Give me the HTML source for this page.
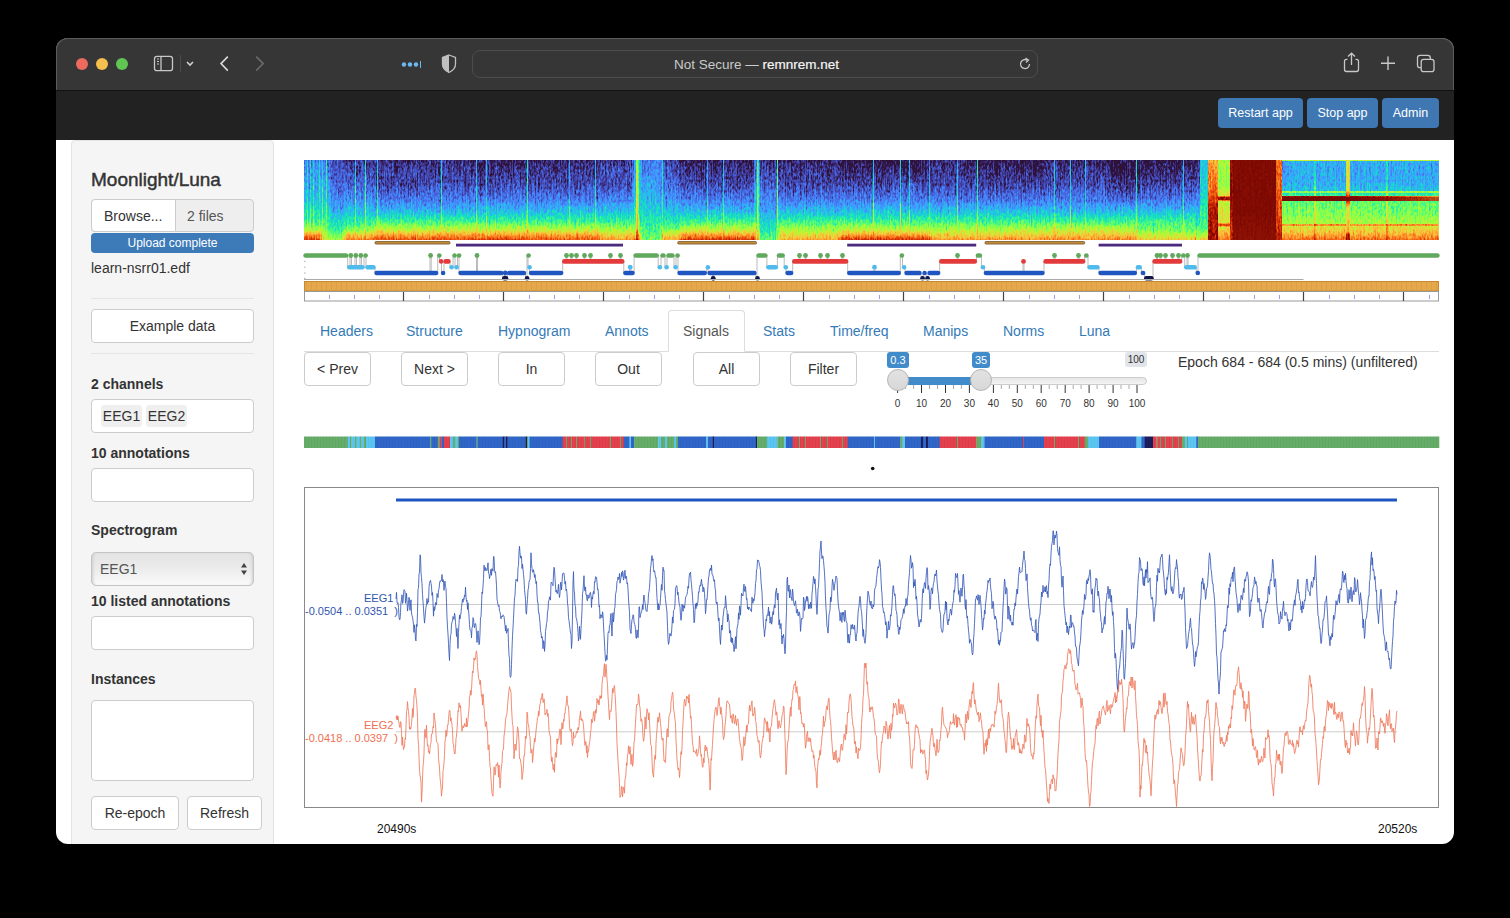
<!DOCTYPE html><html><head><meta charset="utf-8"><style>
*{box-sizing:border-box;margin:0;padding:0}
html,body{width:1510px;height:918px;overflow:hidden;background:#000;font-family:"Liberation Sans",sans-serif;color:#333}
div,span{position:absolute}
#win{left:0;top:0;width:1510px;height:918px;background:#fff;clip-path:inset(38px 56px 74px 56px round 12px)}
.tl{width:12px;height:12px;border-radius:50%;top:58px}
.btnb{top:98px;height:30px;background:#3e77b2;color:#fff;font-size:12.5px;border-radius:4px;text-align:center;line-height:30px;white-space:nowrap}
.lbl{left:91px;font-size:14px;font-weight:bold;color:#333;white-space:nowrap}
.inp{left:91px;width:163px;background:#fff;border:1px solid #ccc;border-radius:4px}
.btn{background:#fff;border:1px solid #ccc;border-radius:4px;color:#333;font-size:14px;text-align:center;white-space:nowrap}
.tab{top:323px;font-size:14px;color:#337ab7;white-space:nowrap}
.t{white-space:nowrap}
#spec i,#spec b{position:absolute;top:0;width:2px;height:80px;display:block}#spec b{width:1px}
</style></head><body><div id="win">
<div style="left:56px;top:38px;width:1398px;height:52px;background:#363636"></div>
<div style="left:56px;top:38px;width:1398px;height:52px;border-radius:12px 12px 0 0;border:1px solid #5c5c5c;border-bottom:none"></div>
<div style="left:56px;top:90px;width:1px;height:50px;background:#404040"></div><div style="left:1453px;top:90px;width:1px;height:50px;background:#404040"></div>
<div class="tl" style="left:76px;background:#ec6a5e"></div>
<div class="tl" style="left:96px;background:#f4bf4f"></div>
<div class="tl" style="left:116px;background:#61c554"></div>
<svg style="position:absolute;left:150px;top:52px" width="48" height="24" viewBox="0 0 48 24"><rect x="4.5" y="4.3" width="18" height="14.4" rx="2.5" fill="none" stroke="#c8c8c8" stroke-width="1.3"/><line x1="11" y1="4" x2="11" y2="18" stroke="#c8c8c8" stroke-width="1.3"/><line x1="7" y1="7" x2="9" y2="7" stroke="#c8c8c8" stroke-width="1"/><line x1="7" y1="9.5" x2="9" y2="9.5" stroke="#c8c8c8" stroke-width="1"/><line x1="7" y1="12" x2="9" y2="12" stroke="#c8c8c8" stroke-width="1"/><line x1="30.5" y1="3" x2="30.5" y2="20" stroke="#4a4a4a" stroke-width="1"/><path d="M37 10 L40 13 L43 10" fill="none" stroke="#d0d0d0" stroke-width="1.6"/></svg>
<svg style="position:absolute;left:214px;top:52px" width="56" height="24" viewBox="0 0 56 24"><path d="M13.8 4.6 L7 11.6 L13.8 18.6" fill="none" stroke="#d8d8d8" stroke-width="1.6"/><path d="M42.2 4.6 L49.2 11.6 L42.2 18.6" fill="none" stroke="#6a6a6a" stroke-width="1.6"/></svg>
<svg style="position:absolute;left:398px;top:52px" width="64" height="24" viewBox="0 0 64 24"><circle cx="6" cy="12.5" r="2.2" fill="#6cb8f0"/><circle cx="12" cy="12.5" r="2.2" fill="#6cb8f0"/><circle cx="18" cy="12.5" r="2.2" fill="#6cb8f0"/><line x1="22.5" y1="9" x2="22.5" y2="16" stroke="#6cb8f0" stroke-width="1"/><path d="M51 3 L57.5 5.5 L57.5 12 Q57.5 17.5 51 20.5 Q44.5 17.5 44.5 12 L44.5 5.5 Z" fill="none" stroke="#c0c0c0" stroke-width="1.3"/><path d="M51 3 L44.5 5.5 L44.5 12 Q44.5 17.5 51 20.5 Z" fill="#c0c0c0"/></svg>
<div style="left:472px;top:50px;width:566px;height:28px;border:1px solid #4d4d4d;border-radius:8px"></div>
<div class="t" style="left:674px;top:57px;font-size:13.5px;color:#cacaca">Not Secure — <span style="position:static;color:#f4f4f4;-webkit-text-stroke:0.2px #f4f4f4">remnrem.net</span></div>
<svg style="position:absolute;left:1016px;top:55px" width="18" height="18" viewBox="0 0 18 18"><path d="M13.5 9 A4.5 4.5 0 1 1 11.2 5.1" fill="none" stroke="#c8c8c8" stroke-width="1.3"/><path d="M9.5 3 L12.5 5 L10 7.5" fill="none" stroke="#c8c8c8" stroke-width="1.3"/></svg>
<svg style="position:absolute;left:1338px;top:50px" width="104" height="26" viewBox="0 0 104 26"><path d="M9.5 9.3 L8.5 9.3 Q6.5 9.3 6.5 11.3 L6.5 19.5 Q6.5 21.5 8.5 21.5 L18.5 21.5 Q20.5 21.5 20.5 19.5 L20.5 11.3 Q20.5 9.3 18.5 9.3 L17.5 9.3" fill="none" stroke="#c8c8c8" stroke-width="1.3"/><line x1="13.5" y1="3.5" x2="13.5" y2="15" stroke="#c8c8c8" stroke-width="1.3"/><path d="M10 6.5 L13.5 3.2 L17 6.5" fill="none" stroke="#c8c8c8" stroke-width="1.3"/><line x1="50" y1="6.5" x2="50" y2="20" stroke="#c8c8c8" stroke-width="1.4"/><line x1="43" y1="13.3" x2="57" y2="13.3" stroke="#c8c8c8" stroke-width="1.4"/><rect x="79.5" y="5.3" width="12.8" height="12.4" rx="2.5" fill="none" stroke="#c8c8c8" stroke-width="1.3"/><rect x="83.2" y="9.3" width="12.8" height="12.4" rx="2.5" fill="#363636" stroke="#c8c8c8" stroke-width="1.3"/></svg>
<div style="left:56px;top:90px;width:1398px;height:50px;background:#222;border-top:1px solid #121212"></div>
<div class="btnb" style="left:1218px;width:85px">Restart app</div>
<div class="btnb" style="left:1307px;width:71px">Stop app</div>
<div class="btnb" style="left:1382px;width:57px">Admin</div>
<div style="left:71px;top:140px;width:203px;height:720px;background:#f5f5f5;border:1px solid #e3e3e3;border-radius:4px"></div>
<div class="t" style="left:91px;top:169px;font-size:19px;color:#333;-webkit-text-stroke:0.45px #333">Moonlight/Luna</div>
<div style="left:91px;top:199px;width:163px;height:33px;border:1px solid #ccc;border-radius:4px;background:#eee"></div>
<div style="left:91px;top:199px;width:85px;height:33px;border:1px solid #ccc;border-radius:4px 0 0 4px;background:#fff"></div>
<div class="t" style="left:104px;top:208px;font-size:14px;color:#333">Browse...</div>
<div class="t" style="left:187px;top:208px;font-size:14px;color:#555">2 files</div>
<div style="left:91px;top:233px;width:163px;height:20px;background:#3d7ab8;border-radius:4px;color:#fff;font-size:12px;text-align:center;line-height:20px">Upload complete</div>
<div class="t" style="left:91px;top:260px;font-size:14px;color:#333">learn-nsrr01.edf</div>
<div style="left:91px;top:298px;width:163px;height:1px;background:#e5e5e5"></div>
<div class="btn" style="left:91px;top:309px;width:163px;height:34px;line-height:32px">Example data</div>
<div style="left:91px;top:353px;width:163px;height:1px;background:#e5e5e5"></div>
<div class="lbl" style="top:376px">2 channels</div>
<div class="inp" style="top:399px;height:34px"></div>
<div style="left:101px;top:405px;width:41px;height:22px;background:#efefef;border-radius:3px;font-size:14px;color:#333;text-align:center;line-height:22px">EEG1</div>
<div style="left:146px;top:405px;width:41px;height:22px;background:#efefef;border-radius:3px;font-size:14px;color:#333;text-align:center;line-height:22px">EEG2</div>
<div class="lbl" style="top:445px">10 annotations</div>
<div class="inp" style="top:468px;height:34px"></div>
<div class="lbl" style="top:522px">Spectrogram</div>
<div style="left:91px;top:552px;width:163px;height:34px;border:1px solid #c4c4c4;border-radius:5px;background:linear-gradient(#e4e4e4,#ececec 50%,#fafafa);box-shadow:inset 3px 0 3px -2px #ccc,inset -3px 0 3px -2px #ccc"></div>
<div class="t" style="left:100px;top:561px;font-size:14px;color:#555">EEG1</div>
<svg style="position:absolute;left:239px;top:561px" width="10" height="16" viewBox="0 0 10 16"><path d="M5 2 L8 6.5 L2 6.5 Z M5 14 L8 9.5 L2 9.5 Z" fill="#444"/></svg>
<div class="lbl" style="top:593px">10 listed annotations</div>
<div class="inp" style="top:616px;height:34px"></div>
<div class="lbl" style="top:671px">Instances</div>
<div class="inp" style="top:700px;height:81px"></div>
<div class="btn" style="left:91px;top:796px;width:88px;height:34px;line-height:32px">Re-epoch</div>
<div class="btn" style="left:187px;top:796px;width:75px;height:34px;line-height:32px">Refresh</div>
<svg width="0" height="0" style="position:absolute"><defs><filter id="turbo" x="0" y="0" width="100%" height="100%" color-interpolation-filters="sRGB"><feTurbulence type="fractalNoise" baseFrequency="0.55 0.3" numOctaves="2" seed="4" result="n1"/><feTurbulence type="fractalNoise" baseFrequency="0.8 0.05" numOctaves="1" seed="9" result="n2"/><feComposite in="n1" in2="n2" operator="arithmetic" k1="0" k2="0.7" k3="0.5" k4="-0.1" result="n"/><feColorMatrix in="n" type="matrix" values="1 0 0 0 0 1 0 0 0 0 1 0 0 0 0 0 0 0 0 1" result="ng"/><feComposite in="SourceGraphic" in2="ng" operator="arithmetic" k1="0" k2="1" k3="0.35" k4="-0.175" result="lv"/><feComponentTransfer in="lv"><feFuncR type="table" tableValues="0.188 0.224 0.251 0.267 0.275 0.275 0.259 0.216 0.157 0.110 0.094 0.122 0.196 0.306 0.427 0.545 0.643 0.725 0.804 0.875 0.933 0.973 0.992 0.996 0.984 0.957 0.922 0.875 0.816 0.745 0.663 0.573 0.478"/><feFuncG type="table" tableValues="0.071 0.165 0.251 0.337 0.420 0.502 0.580 0.659 0.737 0.804 0.867 0.914 0.949 0.976 0.996 1.000 0.988 0.965 0.925 0.875 0.812 0.745 0.675 0.588 0.494 0.400 0.314 0.247 0.184 0.129 0.086 0.043 0.016"/><feFuncB type="table" tableValues="0.231 0.451 0.635 0.780 0.890 0.965 1.000 0.980 0.922 0.847 0.761 0.686 0.596 0.490 0.384 0.294 0.235 0.208 0.204 0.216 0.227 0.224 0.204 0.169 0.129 0.090 0.055 0.031 0.020 0.008 0.004 0.004 0.012"/></feComponentTransfer></filter></defs></svg>
<div id="spec" style="left:304px;top:160px;width:1135px;height:80px;overflow:hidden;filter:url(#turbo)"><i style="left:0px;background:linear-gradient(#333333 0px,#393939 10px,#3e3e3e 24px,#474747 40px,#575757 52px,#686868 62px,#8c8c8c 70px,#c5c5c5 75px,#e3e3e3 80px)"></i><i style="left:2px;background:linear-gradient(#313131 0px,#393939 10px,#404040 24px,#4a4a4a 40px,#565656 52px,#6b6b6b 62px,#8e8e8e 70px,#bdbdbd 75px,#e4e4e4 80px)"></i><i style="left:4px;background:linear-gradient(#2d2d2d 0px,#343434 10px,#3a3a3a 24px,#494949 40px,#555555 52px,#6b6b6b 62px,#8c8c8c 70px,#c1c1c1 75px,#dddddd 80px)"></i><i style="left:6px;background:linear-gradient(#313131 0px,#373737 10px,#404040 24px,#454545 40px,#575757 52px,#686868 62px,#898989 70px,#c5c5c5 75px,#e3e3e3 80px)"></i><i style="left:8px;background:linear-gradient(#323232 0px,#3a3a3a 10px,#3d3d3d 24px,#494949 40px,#595959 52px,#6b6b6b 62px,#888888 70px,#c2c2c2 75px,#e9e9e9 80px)"></i><i style="left:10px;background:linear-gradient(#2e2e2e 0px,#3a3a3a 10px,#404040 24px,#474747 40px,#5f5f5f 52px,#6d6d6d 62px,#888888 70px,#c2c2c2 75px,#e7e7e7 80px)"></i><i style="left:12px;background:linear-gradient(#323232 0px,#3a3a3a 10px,#3f3f3f 24px,#4b4b4b 40px,#5d5d5d 52px,#696969 62px,#8c8c8c 70px,#c0c0c0 75px,#e5e5e5 80px)"></i><i style="left:14px;background:linear-gradient(#2f2f2f 0px,#363636 10px,#3f3f3f 24px,#4c4c4c 40px,#5c5c5c 52px,#676767 62px,#898989 70px,#c3c3c3 75px,#dfdfdf 80px)"></i><i style="left:16px;background:linear-gradient(#313131 0px,#373737 10px,#434343 24px,#4c4c4c 40px,#585858 52px,#696969 62px,#878787 70px,#b4b4b4 75px,#cacaca 80px)"></i><i style="left:18px;background:linear-gradient(#323232 0px,#393939 10px,#3f3f3f 24px,#494949 40px,#555555 52px,#6b6b6b 62px,#828282 70px,#a1a1a1 75px,#b4b4b4 80px)"></i><i style="left:20px;background:linear-gradient(#323232 0px,#3a3a3a 10px,#3e3e3e 24px,#4d4d4d 40px,#595959 52px,#6c6c6c 62px,#7b7b7b 70px,#8d8d8d 75px,#939393 80px)"></i><i style="left:22px;background:linear-gradient(#2c2c2c 0px,#373737 10px,#3c3c3c 24px,#4a4a4a 40px,#606060 52px,#686868 62px,#7d7d7d 70px,#8c8c8c 75px,#9a9a9a 80px)"></i><i style="left:24px;background:linear-gradient(#2a2a2a 0px,#2f2f2f 10px,#3a3a3a 24px,#444444 40px,#505050 52px,#646464 62px,#777777 70px,#838383 75px,#959595 80px)"></i><i style="left:26px;background:linear-gradient(#212121 0px,#2b2b2b 10px,#313131 24px,#3c3c3c 40px,#4b4b4b 52px,#5d5d5d 62px,#686868 70px,#7c7c7c 75px,#919191 80px)"></i><i style="left:28px;background:linear-gradient(#151515 0px,#232323 10px,#232323 24px,#373737 40px,#444444 52px,#595959 62px,#666666 70px,#757575 75px,#909090 80px)"></i><i style="left:30px;background:linear-gradient(#202020 0px,#202020 10px,#272727 24px,#353535 40px,#444444 52px,#5a5a5a 62px,#646464 70px,#7a7a7a 75px,#898989 80px)"></i><i style="left:32px;background:linear-gradient(#1a1a1a 0px,#1d1d1d 10px,#2c2c2c 24px,#353535 40px,#4a4a4a 52px,#565656 62px,#636363 70px,#797979 75px,#8a8a8a 80px)"></i><i style="left:34px;background:linear-gradient(#1c1c1c 0px,#202020 10px,#272727 24px,#313131 40px,#444444 52px,#5b5b5b 62px,#636363 70px,#777777 75px,#8d8d8d 80px)"></i><i style="left:36px;background:linear-gradient(#202020 0px,#1c1c1c 10px,#282828 24px,#333333 40px,#424242 52px,#585858 62px,#656565 70px,#7a7a7a 75px,#898989 80px)"></i><i style="left:38px;background:linear-gradient(#1a1a1a 0px,#1d1d1d 10px,#282828 24px,#333333 40px,#454545 52px,#5f5f5f 62px,#6e6e6e 70px,#8c8c8c 75px,#a1a1a1 80px)"></i><i style="left:40px;background:linear-gradient(#151515 0px,#1c1c1c 10px,#2a2a2a 24px,#363636 40px,#4a4a4a 52px,#606060 62px,#7e7e7e 70px,#9e9e9e 75px,#b7b7b7 80px)"></i><i style="left:42px;background:linear-gradient(#121212 0px,#171717 10px,#2b2b2b 24px,#3b3b3b 40px,#4c4c4c 52px,#676767 62px,#868686 70px,#afafaf 75px,#cecece 80px)"></i><i style="left:44px;background:linear-gradient(#131313 0px,#202020 10px,#242424 24px,#3a3a3a 40px,#4e4e4e 52px,#686868 62px,#8a8a8a 70px,#b1b1b1 75px,#c8c8c8 80px)"></i><i style="left:46px;background:linear-gradient(#0f0f0f 0px,#1e1e1e 10px,#252525 24px,#383838 40px,#4f4f4f 52px,#606060 62px,#7e7e7e 70px,#aeaeae 75px,#cccccc 80px)"></i><i style="left:48px;background:linear-gradient(#131313 0px,#1c1c1c 10px,#262626 24px,#333333 40px,#4b4b4b 52px,#636363 62px,#7f7f7f 70px,#aeaeae 75px,#cbcbcb 80px)"></i><i style="left:50px;background:linear-gradient(#151515 0px,#191919 10px,#262626 24px,#353535 40px,#494949 52px,#666666 62px,#828282 70px,#aeaeae 75px,#cdcdcd 80px)"></i><i style="left:52px;background:linear-gradient(#1a1a1a 0px,#171717 10px,#2b2b2b 24px,#373737 40px,#4c4c4c 52px,#616161 62px,#838383 70px,#afafaf 75px,#cbcbcb 80px)"></i><i style="left:54px;background:linear-gradient(#141414 0px,#1b1b1b 10px,#2c2c2c 24px,#383838 40px,#454545 52px,#636363 62px,#7e7e7e 70px,#a3a3a3 75px,#cacaca 80px)"></i><i style="left:56px;background:linear-gradient(#181818 0px,#1c1c1c 10px,#252525 24px,#353535 40px,#4f4f4f 52px,#666666 62px,#848484 70px,#adadad 75px,#cccccc 80px)"></i><i style="left:58px;background:linear-gradient(#161616 0px,#1d1d1d 10px,#292929 24px,#343434 40px,#4e4e4e 52px,#636363 62px,#878787 70px,#a9a9a9 75px,#cbcbcb 80px)"></i><i style="left:60px;background:linear-gradient(#141414 0px,#171717 10px,#2e2e2e 24px,#3c3c3c 40px,#4b4b4b 52px,#686868 62px,#858585 70px,#a5a5a5 75px,#cccccc 80px)"></i><i style="left:62px;background:linear-gradient(#141414 0px,#1c1c1c 10px,#252525 24px,#373737 40px,#4b4b4b 52px,#696969 62px,#858585 70px,#adadad 75px,#d0d0d0 80px)"></i><i style="left:64px;background:linear-gradient(#121212 0px,#1a1a1a 10px,#232323 24px,#3c3c3c 40px,#4f4f4f 52px,#686868 62px,#868686 70px,#adadad 75px,#cccccc 80px)"></i><i style="left:66px;background:linear-gradient(#131313 0px,#1b1b1b 10px,#282828 24px,#3c3c3c 40px,#4e4e4e 52px,#656565 62px,#828282 70px,#ababab 75px,#d0d0d0 80px)"></i><i style="left:68px;background:linear-gradient(#151515 0px,#1b1b1b 10px,#232323 24px,#323232 40px,#4c4c4c 52px,#6b6b6b 62px,#888888 70px,#b1b1b1 75px,#d0d0d0 80px)"></i><i style="left:70px;background:linear-gradient(#131313 0px,#151515 10px,#1f1f1f 24px,#303030 40px,#4f4f4f 52px,#686868 62px,#909090 70px,#bcbcbc 75px,#d5d5d5 80px)"></i><i style="left:72px;background:linear-gradient(#101010 0px,#1a1a1a 10px,#1c1c1c 24px,#2d2d2d 40px,#4d4d4d 52px,#737373 62px,#939393 70px,#bcbcbc 75px,#d8d8d8 80px)"></i><i style="left:74px;background:linear-gradient(#121212 0px,#151515 10px,#181818 24px,#343434 40px,#494949 52px,#707070 62px,#989898 70px,#bdbdbd 75px,#dcdcdc 80px)"></i><i style="left:76px;background:linear-gradient(#171717 0px,#181818 10px,#1a1a1a 24px,#2c2c2c 40px,#4c4c4c 52px,#727272 62px,#969696 70px,#b9b9b9 75px,#d8d8d8 80px)"></i><i style="left:78px;background:linear-gradient(#101010 0px,#1a1a1a 10px,#1b1b1b 24px,#313131 40px,#4d4d4d 52px,#6c6c6c 62px,#939393 70px,#bdbdbd 75px,#dbdbdb 80px)"></i><i style="left:80px;background:linear-gradient(#131313 0px,#1f1f1f 10px,#1d1d1d 24px,#303030 40px,#474747 52px,#6e6e6e 62px,#8d8d8d 70px,#b8b8b8 75px,#dddddd 80px)"></i><i style="left:82px;background:linear-gradient(#141414 0px,#191919 10px,#161616 24px,#2f2f2f 40px,#4a4a4a 52px,#6f6f6f 62px,#9a9a9a 70px,#bdbdbd 75px,#d8d8d8 80px)"></i><i style="left:84px;background:linear-gradient(#0e0e0e 0px,#191919 10px,#1b1b1b 24px,#2c2c2c 40px,#4c4c4c 52px,#6a6a6a 62px,#979797 70px,#bfbfbf 75px,#dedede 80px)"></i><i style="left:86px;background:linear-gradient(#101010 0px,#1b1b1b 10px,#1b1b1b 24px,#2f2f2f 40px,#4b4b4b 52px,#696969 62px,#8f8f8f 70px,#bfbfbf 75px,#dadada 80px)"></i><i style="left:88px;background:linear-gradient(#121212 0px,#1c1c1c 10px,#161616 24px,#2e2e2e 40px,#4d4d4d 52px,#6e6e6e 62px,#929292 70px,#bfbfbf 75px,#dbdbdb 80px)"></i><i style="left:90px;background:linear-gradient(#0e0e0e 0px,#161616 10px,#1e1e1e 24px,#313131 40px,#464646 52px,#717171 62px,#959595 70px,#c0c0c0 75px,#dadada 80px)"></i><i style="left:92px;background:linear-gradient(#101010 0px,#161616 10px,#232323 24px,#2f2f2f 40px,#515151 52px,#6b6b6b 62px,#949494 70px,#b7b7b7 75px,#dadada 80px)"></i><i style="left:94px;background:linear-gradient(#141414 0px,#151515 10px,#1f1f1f 24px,#313131 40px,#494949 52px,#6c6c6c 62px,#929292 70px,#bcbcbc 75px,#d9d9d9 80px)"></i><i style="left:96px;background:linear-gradient(#0f0f0f 0px,#181818 10px,#181818 24px,#2c2c2c 40px,#4c4c4c 52px,#707070 62px,#8f8f8f 70px,#bcbcbc 75px,#d9d9d9 80px)"></i><i style="left:98px;background:linear-gradient(#0e0e0e 0px,#1c1c1c 10px,#1a1a1a 24px,#353535 40px,#4a4a4a 52px,#6e6e6e 62px,#939393 70px,#bababa 75px,#dddddd 80px)"></i><i style="left:100px;background:linear-gradient(#111111 0px,#1b1b1b 10px,#1b1b1b 24px,#2d2d2d 40px,#4c4c4c 52px,#6d6d6d 62px,#969696 70px,#b9b9b9 75px,#dbdbdb 80px)"></i><i style="left:102px;background:linear-gradient(#0c0c0c 0px,#1b1b1b 10px,#181818 24px,#2a2a2a 40px,#4c4c4c 52px,#717171 62px,#8f8f8f 70px,#b9b9b9 75px,#d9d9d9 80px)"></i><i style="left:104px;background:linear-gradient(#0e0e0e 0px,#1a1a1a 10px,#191919 24px,#2e2e2e 40px,#4e4e4e 52px,#6b6b6b 62px,#959595 70px,#b9b9b9 75px,#d7d7d7 80px)"></i><i style="left:106px;background:linear-gradient(#0c0c0c 0px,#1f1f1f 10px,#1b1b1b 24px,#313131 40px,#4c4c4c 52px,#6e6e6e 62px,#949494 70px,#c2c2c2 75px,#d8d8d8 80px)"></i><i style="left:108px;background:linear-gradient(#0d0d0d 0px,#161616 10px,#171717 24px,#323232 40px,#4f4f4f 52px,#6a6a6a 62px,#8f8f8f 70px,#bbbbbb 75px,#dfdfdf 80px)"></i><i style="left:110px;background:linear-gradient(#090909 0px,#1b1b1b 10px,#181818 24px,#333333 40px,#494949 52px,#6c6c6c 62px,#8f8f8f 70px,#b9b9b9 75px,#dfdfdf 80px)"></i><i style="left:112px;background:linear-gradient(#141414 0px,#181818 10px,#191919 24px,#2a2a2a 40px,#4b4b4b 52px,#6d6d6d 62px,#939393 70px,#bcbcbc 75px,#d7d7d7 80px)"></i><i style="left:114px;background:linear-gradient(#111111 0px,#191919 10px,#1f1f1f 24px,#363636 40px,#4c4c4c 52px,#6b6b6b 62px,#939393 70px,#bababa 75px,#d9d9d9 80px)"></i><i style="left:116px;background:linear-gradient(#111111 0px,#161616 10px,#1d1d1d 24px,#303030 40px,#4d4d4d 52px,#6d6d6d 62px,#919191 70px,#b9b9b9 75px,#dadada 80px)"></i><i style="left:118px;background:linear-gradient(#101010 0px,#1a1a1a 10px,#1c1c1c 24px,#2c2c2c 40px,#4c4c4c 52px,#696969 62px,#929292 70px,#bbbbbb 75px,#d4d4d4 80px)"></i><i style="left:120px;background:linear-gradient(#121212 0px,#191919 10px,#1b1b1b 24px,#2f2f2f 40px,#4b4b4b 52px,#6a6a6a 62px,#939393 70px,#bbbbbb 75px,#dbdbdb 80px)"></i><i style="left:122px;background:linear-gradient(#0e0e0e 0px,#1a1a1a 10px,#1c1c1c 24px,#303030 40px,#4b4b4b 52px,#6f6f6f 62px,#8e8e8e 70px,#bebebe 75px,#dcdcdc 80px)"></i><i style="left:124px;background:linear-gradient(#121212 0px,#1a1a1a 10px,#1a1a1a 24px,#2f2f2f 40px,#4e4e4e 52px,#6e6e6e 62px,#949494 70px,#b8b8b8 75px,#dcdcdc 80px)"></i><i style="left:126px;background:linear-gradient(#151515 0px,#1c1c1c 10px,#1c1c1c 24px,#2b2b2b 40px,#4f4f4f 52px,#6d6d6d 62px,#8c8c8c 70px,#bdbdbd 75px,#d6d6d6 80px)"></i><i style="left:128px;background:linear-gradient(#0d0d0d 0px,#171717 10px,#1f1f1f 24px,#2f2f2f 40px,#4d4d4d 52px,#727272 62px,#989898 70px,#bcbcbc 75px,#dadada 80px)"></i><i style="left:130px;background:linear-gradient(#0d0d0d 0px,#171717 10px,#1d1d1d 24px,#313131 40px,#4c4c4c 52px,#707070 62px,#919191 70px,#bcbcbc 75px,#dddddd 80px)"></i><i style="left:132px;background:linear-gradient(#131313 0px,#1c1c1c 10px,#1d1d1d 24px,#2f2f2f 40px,#4d4d4d 52px,#6a6a6a 62px,#8e8e8e 70px,#bebebe 75px,#dbdbdb 80px)"></i><i style="left:134px;background:linear-gradient(#121212 0px,#141414 10px,#1a1a1a 24px,#2e2e2e 40px,#494949 52px,#666666 62px,#929292 70px,#bfbfbf 75px,#dcdcdc 80px)"></i><i style="left:136px;background:linear-gradient(#101010 0px,#191919 10px,#1e1e1e 24px,#282828 40px,#4c4c4c 52px,#6f6f6f 62px,#959595 70px,#c1c1c1 75px,#dedede 80px)"></i><i style="left:138px;background:linear-gradient(#121212 0px,#1a1a1a 10px,#1e1e1e 24px,#2e2e2e 40px,#4c4c4c 52px,#707070 62px,#999999 70px,#bcbcbc 75px,#dbdbdb 80px)"></i><i style="left:140px;background:linear-gradient(#121212 0px,#1d1d1d 10px,#1b1b1b 24px,#343434 40px,#494949 52px,#6d6d6d 62px,#939393 70px,#bfbfbf 75px,#dedede 80px)"></i><i style="left:142px;background:linear-gradient(#0d0d0d 0px,#161616 10px,#1d1d1d 24px,#2e2e2e 40px,#474747 52px,#707070 62px,#959595 70px,#bebebe 75px,#d9d9d9 80px)"></i><i style="left:144px;background:linear-gradient(#141414 0px,#181818 10px,#1f1f1f 24px,#2d2d2d 40px,#494949 52px,#6e6e6e 62px,#919191 70px,#bebebe 75px,#dcdcdc 80px)"></i><i style="left:146px;background:linear-gradient(#0f0f0f 0px,#191919 10px,#1a1a1a 24px,#333333 40px,#4a4a4a 52px,#6c6c6c 62px,#979797 70px,#c3c3c3 75px,#e1e1e1 80px)"></i><i style="left:148px;background:linear-gradient(#121212 0px,#1a1a1a 10px,#202020 24px,#303030 40px,#494949 52px,#6e6e6e 62px,#959595 70px,#bababa 75px,#d6d6d6 80px)"></i><i style="left:150px;background:linear-gradient(#0d0d0d 0px,#1b1b1b 10px,#191919 24px,#303030 40px,#4d4d4d 52px,#6f6f6f 62px,#929292 70px,#bebebe 75px,#d8d8d8 80px)"></i><i style="left:152px;background:linear-gradient(#101010 0px,#161616 10px,#1f1f1f 24px,#303030 40px,#4a4a4a 52px,#6c6c6c 62px,#939393 70px,#bebebe 75px,#d6d6d6 80px)"></i><i style="left:154px;background:linear-gradient(#0e0e0e 0px,#181818 10px,#232323 24px,#333333 40px,#4c4c4c 52px,#6f6f6f 62px,#9a9a9a 70px,#bbbbbb 75px,#dadada 80px)"></i><i style="left:156px;background:linear-gradient(#151515 0px,#1b1b1b 10px,#1e1e1e 24px,#2e2e2e 40px,#525252 52px,#727272 62px,#959595 70px,#bebebe 75px,#d5d5d5 80px)"></i><i style="left:158px;background:linear-gradient(#131313 0px,#181818 10px,#1d1d1d 24px,#323232 40px,#4b4b4b 52px,#686868 62px,#959595 70px,#bababa 75px,#dadada 80px)"></i><i style="left:160px;background:linear-gradient(#101010 0px,#181818 10px,#141414 24px,#343434 40px,#4d4d4d 52px,#717171 62px,#999999 70px,#bcbcbc 75px,#d5d5d5 80px)"></i><i style="left:162px;background:linear-gradient(#0f0f0f 0px,#151515 10px,#1a1a1a 24px,#303030 40px,#464646 52px,#6e6e6e 62px,#8f8f8f 70px,#bdbdbd 75px,#dadada 80px)"></i><i style="left:164px;background:linear-gradient(#0f0f0f 0px,#171717 10px,#1a1a1a 24px,#2e2e2e 40px,#474747 52px,#6d6d6d 62px,#999999 70px,#c2c2c2 75px,#e2e2e2 80px)"></i><i style="left:166px;background:linear-gradient(#101010 0px,#141414 10px,#202020 24px,#303030 40px,#4c4c4c 52px,#6c6c6c 62px,#949494 70px,#bbbbbb 75px,#e1e1e1 80px)"></i><i style="left:168px;background:linear-gradient(#090909 0px,#131313 10px,#232323 24px,#303030 40px,#4b4b4b 52px,#6f6f6f 62px,#969696 70px,#b9b9b9 75px,#e4e4e4 80px)"></i><i style="left:170px;background:linear-gradient(#0f0f0f 0px,#151515 10px,#1c1c1c 24px,#353535 40px,#4a4a4a 52px,#6d6d6d 62px,#929292 70px,#c1c1c1 75px,#dfdfdf 80px)"></i><i style="left:172px;background:linear-gradient(#0a0a0a 0px,#121212 10px,#1e1e1e 24px,#323232 40px,#505050 52px,#686868 62px,#969696 70px,#bbbbbb 75px,#e3e3e3 80px)"></i><i style="left:174px;background:linear-gradient(#0e0e0e 0px,#111111 10px,#151515 24px,#2f2f2f 40px,#474747 52px,#6b6b6b 62px,#959595 70px,#bdbdbd 75px,#eaeaea 80px)"></i><i style="left:176px;background:linear-gradient(#0c0c0c 0px,#0f0f0f 10px,#191919 24px,#2d2d2d 40px,#484848 52px,#6e6e6e 62px,#919191 70px,#b6b6b6 75px,#e7e7e7 80px)"></i><i style="left:178px;background:linear-gradient(#0c0c0c 0px,#151515 10px,#1c1c1c 24px,#323232 40px,#4c4c4c 52px,#717171 62px,#959595 70px,#bdbdbd 75px,#e6e6e6 80px)"></i><i style="left:180px;background:linear-gradient(#080808 0px,#131313 10px,#1b1b1b 24px,#313131 40px,#484848 52px,#727272 62px,#949494 70px,#b8b8b8 75px,#e0e0e0 80px)"></i><i style="left:182px;background:linear-gradient(#0b0b0b 0px,#141414 10px,#191919 24px,#303030 40px,#4a4a4a 52px,#6f6f6f 62px,#919191 70px,#bcbcbc 75px,#e8e8e8 80px)"></i><i style="left:184px;background:linear-gradient(#141414 0px,#111111 10px,#1a1a1a 24px,#2d2d2d 40px,#4e4e4e 52px,#6a6a6a 62px,#929292 70px,#bcbcbc 75px,#e2e2e2 80px)"></i><i style="left:186px;background:linear-gradient(#090909 0px,#121212 10px,#151515 24px,#2c2c2c 40px,#4b4b4b 52px,#6e6e6e 62px,#939393 70px,#b7b7b7 75px,#e4e4e4 80px)"></i><i style="left:188px;background:linear-gradient(#0f0f0f 0px,#161616 10px,#1b1b1b 24px,#2d2d2d 40px,#4e4e4e 52px,#6b6b6b 62px,#909090 70px,#bababa 75px,#e9e9e9 80px)"></i><i style="left:190px;background:linear-gradient(#0d0d0d 0px,#171717 10px,#1a1a1a 24px,#333333 40px,#4a4a4a 52px,#6d6d6d 62px,#9b9b9b 70px,#bfbfbf 75px,#e3e3e3 80px)"></i><i style="left:192px;background:linear-gradient(#0c0c0c 0px,#151515 10px,#1f1f1f 24px,#2e2e2e 40px,#474747 52px,#6c6c6c 62px,#939393 70px,#bdbdbd 75px,#e9e9e9 80px)"></i><i style="left:194px;background:linear-gradient(#0d0d0d 0px,#161616 10px,#181818 24px,#333333 40px,#525252 52px,#707070 62px,#949494 70px,#bdbdbd 75px,#eaeaea 80px)"></i><i style="left:196px;background:linear-gradient(#090909 0px,#141414 10px,#1d1d1d 24px,#323232 40px,#4b4b4b 52px,#6e6e6e 62px,#939393 70px,#bdbdbd 75px,#e5e5e5 80px)"></i><i style="left:198px;background:linear-gradient(#090909 0px,#141414 10px,#1e1e1e 24px,#2d2d2d 40px,#4b4b4b 52px,#6f6f6f 62px,#909090 70px,#bdbdbd 75px,#e2e2e2 80px)"></i><i style="left:200px;background:linear-gradient(#101010 0px,#1b1b1b 10px,#222222 24px,#2f2f2f 40px,#4e4e4e 52px,#6e6e6e 62px,#949494 70px,#c1c1c1 75px,#e1e1e1 80px)"></i><i style="left:202px;background:linear-gradient(#0f0f0f 0px,#141414 10px,#202020 24px,#313131 40px,#4a4a4a 52px,#6e6e6e 62px,#969696 70px,#bcbcbc 75px,#e6e6e6 80px)"></i><i style="left:204px;background:linear-gradient(#0b0b0b 0px,#0d0d0d 10px,#1e1e1e 24px,#323232 40px,#4c4c4c 52px,#6d6d6d 62px,#979797 70px,#bbbbbb 75px,#e3e3e3 80px)"></i><i style="left:206px;background:linear-gradient(#0c0c0c 0px,#181818 10px,#171717 24px,#343434 40px,#4a4a4a 52px,#6a6a6a 62px,#979797 70px,#bcbcbc 75px,#e1e1e1 80px)"></i><i style="left:208px;background:linear-gradient(#0b0b0b 0px,#171717 10px,#1f1f1f 24px,#2f2f2f 40px,#4d4d4d 52px,#6f6f6f 62px,#919191 70px,#bdbdbd 75px,#e5e5e5 80px)"></i><i style="left:210px;background:linear-gradient(#0b0b0b 0px,#121212 10px,#1c1c1c 24px,#303030 40px,#4a4a4a 52px,#6c6c6c 62px,#979797 70px,#bdbdbd 75px,#e8e8e8 80px)"></i><i style="left:212px;background:linear-gradient(#101010 0px,#161616 10px,#222222 24px,#2d2d2d 40px,#4e4e4e 52px,#6c6c6c 62px,#999999 70px,#c1c1c1 75px,#dfdfdf 80px)"></i><i style="left:214px;background:linear-gradient(#090909 0px,#161616 10px,#1e1e1e 24px,#323232 40px,#4c4c4c 52px,#6f6f6f 62px,#959595 70px,#bcbcbc 75px,#e8e8e8 80px)"></i><i style="left:216px;background:linear-gradient(#050505 0px,#161616 10px,#181818 24px,#333333 40px,#4b4b4b 52px,#6a6a6a 62px,#959595 70px,#b9b9b9 75px,#e2e2e2 80px)"></i><i style="left:218px;background:linear-gradient(#080808 0px,#151515 10px,#1d1d1d 24px,#333333 40px,#4c4c4c 52px,#707070 62px,#939393 70px,#bcbcbc 75px,#e2e2e2 80px)"></i><i style="left:220px;background:linear-gradient(#111111 0px,#151515 10px,#1b1b1b 24px,#2f2f2f 40px,#4c4c4c 52px,#6a6a6a 62px,#979797 70px,#bbbbbb 75px,#dcdcdc 80px)"></i><i style="left:222px;background:linear-gradient(#0c0c0c 0px,#181818 10px,#1d1d1d 24px,#2f2f2f 40px,#525252 52px,#6e6e6e 62px,#999999 70px,#bfbfbf 75px,#d4d4d4 80px)"></i><i style="left:224px;background:linear-gradient(#0e0e0e 0px,#181818 10px,#1c1c1c 24px,#303030 40px,#4b4b4b 52px,#686868 62px,#939393 70px,#b5b5b5 75px,#d7d7d7 80px)"></i><i style="left:226px;background:linear-gradient(#0d0d0d 0px,#141414 10px,#1b1b1b 24px,#313131 40px,#484848 52px,#686868 62px,#909090 70px,#b6b6b6 75px,#d3d3d3 80px)"></i><i style="left:228px;background:linear-gradient(#141414 0px,#131313 10px,#1e1e1e 24px,#2c2c2c 40px,#4d4d4d 52px,#6c6c6c 62px,#939393 70px,#bebebe 75px,#dbdbdb 80px)"></i><i style="left:230px;background:linear-gradient(#0f0f0f 0px,#171717 10px,#191919 24px,#323232 40px,#4b4b4b 52px,#707070 62px,#939393 70px,#c2c2c2 75px,#d0d0d0 80px)"></i><i style="left:232px;background:linear-gradient(#0e0e0e 0px,#191919 10px,#1a1a1a 24px,#2e2e2e 40px,#4b4b4b 52px,#696969 62px,#949494 70px,#c4c4c4 75px,#d9d9d9 80px)"></i><i style="left:234px;background:linear-gradient(#0b0b0b 0px,#141414 10px,#1a1a1a 24px,#333333 40px,#494949 52px,#6b6b6b 62px,#969696 70px,#bfbfbf 75px,#d5d5d5 80px)"></i><i style="left:236px;background:linear-gradient(#0b0b0b 0px,#121212 10px,#191919 24px,#292929 40px,#4e4e4e 52px,#6b6b6b 62px,#959595 70px,#c2c2c2 75px,#d9d9d9 80px)"></i><i style="left:238px;background:linear-gradient(#0b0b0b 0px,#191919 10px,#1f1f1f 24px,#2e2e2e 40px,#494949 52px,#6d6d6d 62px,#8e8e8e 70px,#c1c1c1 75px,#cecece 80px)"></i><i style="left:240px;background:linear-gradient(#0b0b0b 0px,#161616 10px,#1b1b1b 24px,#303030 40px,#4d4d4d 52px,#6c6c6c 62px,#979797 70px,#b6b6b6 75px,#d6d6d6 80px)"></i><i style="left:242px;background:linear-gradient(#0d0d0d 0px,#171717 10px,#1c1c1c 24px,#2d2d2d 40px,#4a4a4a 52px,#707070 62px,#949494 70px,#bababa 75px,#dcdcdc 80px)"></i><i style="left:244px;background:linear-gradient(#161616 0px,#121212 10px,#1c1c1c 24px,#383838 40px,#4e4e4e 52px,#6e6e6e 62px,#939393 70px,#bbbbbb 75px,#d5d5d5 80px)"></i><i style="left:246px;background:linear-gradient(#0d0d0d 0px,#191919 10px,#1a1a1a 24px,#2f2f2f 40px,#484848 52px,#6d6d6d 62px,#919191 70px,#bcbcbc 75px,#d9d9d9 80px)"></i><i style="left:248px;background:linear-gradient(#101010 0px,#181818 10px,#1d1d1d 24px,#303030 40px,#4c4c4c 52px,#6c6c6c 62px,#969696 70px,#b9b9b9 75px,#dadada 80px)"></i><i style="left:250px;background:linear-gradient(#0f0f0f 0px,#141414 10px,#1a1a1a 24px,#2e2e2e 40px,#4c4c4c 52px,#6b6b6b 62px,#979797 70px,#bababa 75px,#cfcfcf 80px)"></i><i style="left:252px;background:linear-gradient(#0d0d0d 0px,#101010 10px,#1b1b1b 24px,#333333 40px,#4e4e4e 52px,#696969 62px,#919191 70px,#c2c2c2 75px,#d7d7d7 80px)"></i><i style="left:254px;background:linear-gradient(#0f0f0f 0px,#1a1a1a 10px,#232323 24px,#343434 40px,#4c4c4c 52px,#6e6e6e 62px,#959595 70px,#bababa 75px,#d2d2d2 80px)"></i><i style="left:256px;background:linear-gradient(#0f0f0f 0px,#141414 10px,#1b1b1b 24px,#303030 40px,#535353 52px,#6b6b6b 62px,#939393 70px,#bcbcbc 75px,#d7d7d7 80px)"></i><i style="left:258px;background:linear-gradient(#121212 0px,#151515 10px,#191919 24px,#2b2b2b 40px,#494949 52px,#6f6f6f 62px,#949494 70px,#b9b9b9 75px,#d5d5d5 80px)"></i><i style="left:260px;background:linear-gradient(#0f0f0f 0px,#181818 10px,#1a1a1a 24px,#2f2f2f 40px,#464646 52px,#6a6a6a 62px,#989898 70px,#b6b6b6 75px,#d5d5d5 80px)"></i><i style="left:262px;background:linear-gradient(#0f0f0f 0px,#151515 10px,#191919 24px,#303030 40px,#4c4c4c 52px,#6d6d6d 62px,#8e8e8e 70px,#bcbcbc 75px,#d3d3d3 80px)"></i><i style="left:264px;background:linear-gradient(#0d0d0d 0px,#171717 10px,#1e1e1e 24px,#333333 40px,#4a4a4a 52px,#707070 62px,#979797 70px,#c0c0c0 75px,#dadada 80px)"></i><i style="left:266px;background:linear-gradient(#0e0e0e 0px,#161616 10px,#1e1e1e 24px,#2c2c2c 40px,#4d4d4d 52px,#6c6c6c 62px,#929292 70px,#b7b7b7 75px,#d3d3d3 80px)"></i><i style="left:268px;background:linear-gradient(#0f0f0f 0px,#191919 10px,#1f1f1f 24px,#303030 40px,#4b4b4b 52px,#6b6b6b 62px,#959595 70px,#bbbbbb 75px,#d8d8d8 80px)"></i><i style="left:270px;background:linear-gradient(#141414 0px,#161616 10px,#171717 24px,#2d2d2d 40px,#484848 52px,#696969 62px,#979797 70px,#bdbdbd 75px,#d1d1d1 80px)"></i><i style="left:272px;background:linear-gradient(#111111 0px,#1a1a1a 10px,#1a1a1a 24px,#2e2e2e 40px,#4b4b4b 52px,#6e6e6e 62px,#959595 70px,#c0c0c0 75px,#d9d9d9 80px)"></i><i style="left:274px;background:linear-gradient(#121212 0px,#1b1b1b 10px,#1e1e1e 24px,#2b2b2b 40px,#4c4c4c 52px,#6e6e6e 62px,#929292 70px,#bfbfbf 75px,#d5d5d5 80px)"></i><i style="left:276px;background:linear-gradient(#0c0c0c 0px,#1b1b1b 10px,#1e1e1e 24px,#313131 40px,#4f4f4f 52px,#707070 62px,#949494 70px,#b5b5b5 75px,#d4d4d4 80px)"></i><i style="left:278px;background:linear-gradient(#0d0d0d 0px,#131313 10px,#1c1c1c 24px,#343434 40px,#4b4b4b 52px,#6a6a6a 62px,#9a9a9a 70px,#bbbbbb 75px,#d2d2d2 80px)"></i><i style="left:280px;background:linear-gradient(#101010 0px,#181818 10px,#191919 24px,#323232 40px,#4b4b4b 52px,#6a6a6a 62px,#949494 70px,#bfbfbf 75px,#d4d4d4 80px)"></i><i style="left:282px;background:linear-gradient(#101010 0px,#161616 10px,#242424 24px,#2e2e2e 40px,#505050 52px,#6d6d6d 62px,#939393 70px,#bebebe 75px,#d8d8d8 80px)"></i><i style="left:284px;background:linear-gradient(#131313 0px,#171717 10px,#1a1a1a 24px,#2e2e2e 40px,#4e4e4e 52px,#6f6f6f 62px,#989898 70px,#bdbdbd 75px,#d9d9d9 80px)"></i><i style="left:286px;background:linear-gradient(#131313 0px,#171717 10px,#171717 24px,#2c2c2c 40px,#484848 52px,#727272 62px,#919191 70px,#c0c0c0 75px,#d7d7d7 80px)"></i><i style="left:288px;background:linear-gradient(#141414 0px,#1a1a1a 10px,#1b1b1b 24px,#2f2f2f 40px,#4c4c4c 52px,#6e6e6e 62px,#929292 70px,#bcbcbc 75px,#dbdbdb 80px)"></i><i style="left:290px;background:linear-gradient(#0a0a0a 0px,#171717 10px,#191919 24px,#313131 40px,#4f4f4f 52px,#6d6d6d 62px,#969696 70px,#b7b7b7 75px,#d9d9d9 80px)"></i><i style="left:292px;background:linear-gradient(#0d0d0d 0px,#181818 10px,#1c1c1c 24px,#282828 40px,#4a4a4a 52px,#6e6e6e 62px,#989898 70px,#bdbdbd 75px,#d6d6d6 80px)"></i><i style="left:294px;background:linear-gradient(#0c0c0c 0px,#1d1d1d 10px,#222222 24px,#313131 40px,#4b4b4b 52px,#686868 62px,#949494 70px,#bebebe 75px,#d1d1d1 80px)"></i><i style="left:296px;background:linear-gradient(#161616 0px,#1d1d1d 10px,#1a1a1a 24px,#363636 40px,#484848 52px,#6d6d6d 62px,#919191 70px,#b1b1b1 75px,#c9c9c9 80px)"></i><i style="left:298px;background:linear-gradient(#151515 0px,#1c1c1c 10px,#1a1a1a 24px,#333333 40px,#4a4a4a 52px,#696969 62px,#8a8a8a 70px,#a6a6a6 75px,#bcbcbc 80px)"></i><i style="left:300px;background:linear-gradient(#101010 0px,#191919 10px,#1f1f1f 24px,#343434 40px,#525252 52px,#696969 62px,#8c8c8c 70px,#ababab 75px,#c1c1c1 80px)"></i><i style="left:302px;background:linear-gradient(#131313 0px,#232323 10px,#1d1d1d 24px,#2f2f2f 40px,#484848 52px,#6e6e6e 62px,#8f8f8f 70px,#a4a4a4 75px,#bebebe 80px)"></i><i style="left:304px;background:linear-gradient(#161616 0px,#202020 10px,#1c1c1c 24px,#343434 40px,#4e4e4e 52px,#686868 62px,#8d8d8d 70px,#a9a9a9 75px,#c0c0c0 80px)"></i><i style="left:306px;background:linear-gradient(#0d0d0d 0px,#1d1d1d 10px,#202020 24px,#373737 40px,#454545 52px,#757575 62px,#8b8b8b 70px,#ababab 75px,#c5c5c5 80px)"></i><i style="left:308px;background:linear-gradient(#171717 0px,#1f1f1f 10px,#1b1b1b 24px,#343434 40px,#4a4a4a 52px,#656565 62px,#979797 70px,#aaaaaa 75px,#c7c7c7 80px)"></i><i style="left:310px;background:linear-gradient(#111111 0px,#232323 10px,#232323 24px,#373737 40px,#4c4c4c 52px,#696969 62px,#8e8e8e 70px,#a1a1a1 75px,#bcbcbc 80px)"></i><i style="left:312px;background:linear-gradient(#141414 0px,#1b1b1b 10px,#1e1e1e 24px,#323232 40px,#525252 52px,#717171 62px,#8e8e8e 70px,#ababab 75px,#bfbfbf 80px)"></i><i style="left:314px;background:linear-gradient(#131313 0px,#212121 10px,#1a1a1a 24px,#323232 40px,#484848 52px,#6e6e6e 62px,#939393 70px,#a5a5a5 75px,#c2c2c2 80px)"></i><i style="left:316px;background:linear-gradient(#111111 0px,#1b1b1b 10px,#1a1a1a 24px,#373737 40px,#535353 52px,#6f6f6f 62px,#8c8c8c 70px,#aaaaaa 75px,#c0c0c0 80px)"></i><i style="left:318px;background:linear-gradient(#161616 0px,#1f1f1f 10px,#1f1f1f 24px,#343434 40px,#4a4a4a 52px,#6c6c6c 62px,#898989 70px,#a6a6a6 75px,#bdbdbd 80px)"></i><i style="left:320px;background:linear-gradient(#131313 0px,#1b1b1b 10px,#1e1e1e 24px,#343434 40px,#484848 52px,#6b6b6b 62px,#8b8b8b 70px,#aaaaaa 75px,#c7c7c7 80px)"></i><i style="left:322px;background:linear-gradient(#171717 0px,#1d1d1d 10px,#232323 24px,#2e2e2e 40px,#515151 52px,#6b6b6b 62px,#868686 70px,#b0b0b0 75px,#c6c6c6 80px)"></i><i style="left:324px;background:linear-gradient(#111111 0px,#1f1f1f 10px,#1d1d1d 24px,#333333 40px,#474747 52px,#6b6b6b 62px,#909090 70px,#a8a8a8 75px,#c5c5c5 80px)"></i><i style="left:326px;background:linear-gradient(#141414 0px,#252525 10px,#1c1c1c 24px,#333333 40px,#464646 52px,#696969 62px,#929292 70px,#a5a5a5 75px,#c3c3c3 80px)"></i><i style="left:328px;background:linear-gradient(#262626 0px,#2c2c2c 10px,#303030 24px,#3f3f3f 40px,#535353 52px,#727272 62px,#8f8f8f 70px,#a9a9a9 75px,#cacaca 80px)"></i><i style="left:330px;background:linear-gradient(#3a3a3a 0px,#404040 10px,#474747 24px,#565656 40px,#606060 52px,#727272 62px,#8c8c8c 70px,#acacac 75px,#d6d6d6 80px)"></i><i style="left:332px;background:linear-gradient(#494949 0px,#505050 10px,#555555 24px,#5e5e5e 40px,#646464 52px,#747474 62px,#888888 70px,#b7b7b7 75px,#e7e7e7 80px)"></i><i style="left:334px;background:linear-gradient(#484848 0px,#4a4a4a 10px,#525252 24px,#545454 40px,#626262 52px,#777777 62px,#7e7e7e 70px,#a1a1a1 75px,#c6c6c6 80px)"></i><i style="left:336px;background:linear-gradient(#3b3b3b 0px,#414141 10px,#494949 24px,#4c4c4c 40px,#5b5b5b 52px,#666666 62px,#757575 70px,#878787 75px,#9d9d9d 80px)"></i><i style="left:338px;background:linear-gradient(#303030 0px,#363636 10px,#383838 24px,#4d4d4d 40px,#575757 52px,#656565 62px,#6c6c6c 70px,#757575 75px,#7c7c7c 80px)"></i><i style="left:340px;background:linear-gradient(#313131 0px,#303030 10px,#3f3f3f 24px,#505050 40px,#4e4e4e 52px,#666666 62px,#6e6e6e 70px,#747474 75px,#7e7e7e 80px)"></i><i style="left:342px;background:linear-gradient(#2c2c2c 0px,#363636 10px,#414141 24px,#464646 40px,#525252 52px,#636363 62px,#6c6c6c 70px,#7a7a7a 75px,#777777 80px)"></i><i style="left:344px;background:linear-gradient(#333333 0px,#313131 10px,#3f3f3f 24px,#474747 40px,#4c4c4c 52px,#636363 62px,#6a6a6a 70px,#737373 75px,#7f7f7f 80px)"></i><i style="left:346px;background:linear-gradient(#2c2c2c 0px,#323232 10px,#414141 24px,#474747 40px,#585858 52px,#646464 62px,#6a6a6a 70px,#757575 75px,#7e7e7e 80px)"></i><i style="left:348px;background:linear-gradient(#333333 0px,#353535 10px,#3d3d3d 24px,#474747 40px,#525252 52px,#696969 62px,#6d6d6d 70px,#717171 75px,#787878 80px)"></i><i style="left:350px;background:linear-gradient(#323232 0px,#373737 10px,#3c3c3c 24px,#454545 40px,#545454 52px,#5e5e5e 62px,#696969 70px,#777777 75px,#787878 80px)"></i><i style="left:352px;background:linear-gradient(#313131 0px,#393939 10px,#3f3f3f 24px,#474747 40px,#5a5a5a 52px,#656565 62px,#6c6c6c 70px,#777777 75px,#7b7b7b 80px)"></i><i style="left:354px;background:linear-gradient(#2d2d2d 0px,#353535 10px,#3c3c3c 24px,#414141 40px,#535353 52px,#626262 62px,#6c6c6c 70px,#707070 75px,#797979 80px)"></i><i style="left:356px;background:linear-gradient(#282828 0px,#2f2f2f 10px,#333333 24px,#454545 40px,#4d4d4d 52px,#616161 62px,#797979 70px,#848484 75px,#8d8d8d 80px)"></i><i style="left:358px;background:linear-gradient(#242424 0px,#262626 10px,#303030 24px,#3f3f3f 40px,#525252 52px,#5a5a5a 62px,#7a7a7a 70px,#949494 75px,#9f9f9f 80px)"></i><i style="left:360px;background:linear-gradient(#161616 0px,#1e1e1e 10px,#2c2c2c 24px,#373737 40px,#4c4c4c 52px,#626262 62px,#828282 70px,#a8a8a8 75px,#bcbcbc 80px)"></i><i style="left:362px;background:linear-gradient(#1a1a1a 0px,#1f1f1f 10px,#2b2b2b 24px,#373737 40px,#4d4d4d 52px,#636363 62px,#828282 70px,#a7a7a7 75px,#bbbbbb 80px)"></i><i style="left:364px;background:linear-gradient(#171717 0px,#212121 10px,#282828 24px,#383838 40px,#4a4a4a 52px,#676767 62px,#838383 70px,#a6a6a6 75px,#b5b5b5 80px)"></i><i style="left:366px;background:linear-gradient(#181818 0px,#232323 10px,#2b2b2b 24px,#404040 40px,#4d4d4d 52px,#656565 62px,#858585 70px,#aaaaaa 75px,#b3b3b3 80px)"></i><i style="left:368px;background:linear-gradient(#191919 0px,#202020 10px,#2a2a2a 24px,#343434 40px,#4f4f4f 52px,#5f5f5f 62px,#838383 70px,#a7a7a7 75px,#b6b6b6 80px)"></i><i style="left:370px;background:linear-gradient(#1a1a1a 0px,#1d1d1d 10px,#282828 24px,#3b3b3b 40px,#4c4c4c 52px,#5f5f5f 62px,#828282 70px,#a5a5a5 75px,#b7b7b7 80px)"></i><i style="left:372px;background:linear-gradient(#1d1d1d 0px,#1d1d1d 10px,#303030 24px,#3d3d3d 40px,#4b4b4b 52px,#636363 62px,#808080 70px,#a3a3a3 75px,#b3b3b3 80px)"></i><i style="left:374px;background:linear-gradient(#131313 0px,#1b1b1b 10px,#242424 24px,#373737 40px,#454545 52px,#666666 62px,#858585 70px,#adadad 75px,#c6c6c6 80px)"></i><i style="left:376px;background:linear-gradient(#0d0d0d 0px,#141414 10px,#1e1e1e 24px,#333333 40px,#4e4e4e 52px,#6b6b6b 62px,#8b8b8b 70px,#b3b3b3 75px,#d5d5d5 80px)"></i><i style="left:378px;background:linear-gradient(#0e0e0e 0px,#0e0e0e 10px,#1f1f1f 24px,#2e2e2e 40px,#4a4a4a 52px,#6e6e6e 62px,#979797 70px,#bdbdbd 75px,#ebebeb 80px)"></i><i style="left:380px;background:linear-gradient(#0d0d0d 0px,#181818 10px,#1f1f1f 24px,#303030 40px,#505050 52px,#6e6e6e 62px,#949494 70px,#b9b9b9 75px,#e7e7e7 80px)"></i><i style="left:382px;background:linear-gradient(#0f0f0f 0px,#101010 10px,#1e1e1e 24px,#313131 40px,#4d4d4d 52px,#666666 62px,#939393 70px,#bebebe 75px,#e5e5e5 80px)"></i><i style="left:384px;background:linear-gradient(#0d0d0d 0px,#0d0d0d 10px,#1e1e1e 24px,#2e2e2e 40px,#4f4f4f 52px,#686868 62px,#969696 70px,#bbbbbb 75px,#eaeaea 80px)"></i><i style="left:386px;background:linear-gradient(#090909 0px,#121212 10px,#222222 24px,#2d2d2d 40px,#4a4a4a 52px,#6c6c6c 62px,#909090 70px,#c0c0c0 75px,#ededed 80px)"></i><i style="left:388px;background:linear-gradient(#0a0a0a 0px,#0f0f0f 10px,#1f1f1f 24px,#333333 40px,#4f4f4f 52px,#717171 62px,#919191 70px,#bcbcbc 75px,#e3e3e3 80px)"></i><i style="left:390px;background:linear-gradient(#080808 0px,#171717 10px,#191919 24px,#373737 40px,#4c4c4c 52px,#6b6b6b 62px,#969696 70px,#c2c2c2 75px,#e9e9e9 80px)"></i><i style="left:392px;background:linear-gradient(#090909 0px,#151515 10px,#202020 24px,#2e2e2e 40px,#4a4a4a 52px,#707070 62px,#949494 70px,#b9b9b9 75px,#e6e6e6 80px)"></i><i style="left:394px;background:linear-gradient(#0a0a0a 0px,#151515 10px,#1c1c1c 24px,#333333 40px,#4e4e4e 52px,#686868 62px,#959595 70px,#bfbfbf 75px,#e9e9e9 80px)"></i><i style="left:396px;background:linear-gradient(#0f0f0f 0px,#121212 10px,#191919 24px,#333333 40px,#494949 52px,#676767 62px,#979797 70px,#bababa 75px,#e7e7e7 80px)"></i><i style="left:398px;background:linear-gradient(#080808 0px,#101010 10px,#181818 24px,#2f2f2f 40px,#4d4d4d 52px,#666666 62px,#969696 70px,#b9b9b9 75px,#e4e4e4 80px)"></i><i style="left:400px;background:linear-gradient(#0e0e0e 0px,#141414 10px,#171717 24px,#363636 40px,#494949 52px,#6e6e6e 62px,#949494 70px,#c1c1c1 75px,#e6e6e6 80px)"></i><i style="left:402px;background:linear-gradient(#0f0f0f 0px,#121212 10px,#1f1f1f 24px,#2e2e2e 40px,#4b4b4b 52px,#737373 62px,#949494 70px,#bdbdbd 75px,#eeeeee 80px)"></i><i style="left:404px;background:linear-gradient(#0d0d0d 0px,#111111 10px,#1e1e1e 24px,#2c2c2c 40px,#4f4f4f 52px,#717171 62px,#929292 70px,#bababa 75px,#e8e8e8 80px)"></i><i style="left:406px;background:linear-gradient(#0c0c0c 0px,#111111 10px,#1d1d1d 24px,#2a2a2a 40px,#4b4b4b 52px,#6c6c6c 62px,#939393 70px,#bdbdbd 75px,#e4e4e4 80px)"></i><i style="left:408px;background:linear-gradient(#0e0e0e 0px,#131313 10px,#1a1a1a 24px,#2c2c2c 40px,#484848 52px,#6e6e6e 62px,#909090 70px,#bcbcbc 75px,#ebebeb 80px)"></i><i style="left:410px;background:linear-gradient(#0f0f0f 0px,#191919 10px,#1b1b1b 24px,#2d2d2d 40px,#4f4f4f 52px,#6e6e6e 62px,#979797 70px,#bcbcbc 75px,#ebebeb 80px)"></i><i style="left:412px;background:linear-gradient(#0f0f0f 0px,#161616 10px,#1d1d1d 24px,#313131 40px,#4d4d4d 52px,#6e6e6e 62px,#969696 70px,#bbbbbb 75px,#ededed 80px)"></i><i style="left:414px;background:linear-gradient(#0c0c0c 0px,#171717 10px,#1b1b1b 24px,#2f2f2f 40px,#525252 52px,#6c6c6c 62px,#8f8f8f 70px,#bababa 75px,#e7e7e7 80px)"></i><i style="left:416px;background:linear-gradient(#131313 0px,#151515 10px,#1e1e1e 24px,#2d2d2d 40px,#4d4d4d 52px,#6f6f6f 62px,#999999 70px,#bababa 75px,#e9e9e9 80px)"></i><i style="left:418px;background:linear-gradient(#0d0d0d 0px,#111111 10px,#1b1b1b 24px,#2f2f2f 40px,#454545 52px,#6f6f6f 62px,#959595 70px,#bbbbbb 75px,#e3e3e3 80px)"></i><i style="left:420px;background:linear-gradient(#111111 0px,#151515 10px,#1f1f1f 24px,#343434 40px,#4a4a4a 52px,#707070 62px,#939393 70px,#bcbcbc 75px,#e7e7e7 80px)"></i><i style="left:422px;background:linear-gradient(#0c0c0c 0px,#171717 10px,#1c1c1c 24px,#2f2f2f 40px,#4b4b4b 52px,#6e6e6e 62px,#919191 70px,#bbbbbb 75px,#e7e7e7 80px)"></i><i style="left:424px;background:linear-gradient(#0b0b0b 0px,#141414 10px,#1a1a1a 24px,#363636 40px,#505050 52px,#6f6f6f 62px,#939393 70px,#c3c3c3 75px,#e9e9e9 80px)"></i><i style="left:426px;background:linear-gradient(#0c0c0c 0px,#151515 10px,#1c1c1c 24px,#343434 40px,#4c4c4c 52px,#747474 62px,#919191 70px,#bebebe 75px,#e4e4e4 80px)"></i><i style="left:428px;background:linear-gradient(#121212 0px,#131313 10px,#1b1b1b 24px,#333333 40px,#505050 52px,#6a6a6a 62px,#929292 70px,#b8b8b8 75px,#e8e8e8 80px)"></i><i style="left:430px;background:linear-gradient(#0c0c0c 0px,#131313 10px,#191919 24px,#2f2f2f 40px,#4a4a4a 52px,#6f6f6f 62px,#989898 70px,#b6b6b6 75px,#e7e7e7 80px)"></i><i style="left:432px;background:linear-gradient(#0b0b0b 0px,#151515 10px,#191919 24px,#303030 40px,#494949 52px,#6f6f6f 62px,#949494 70px,#bcbcbc 75px,#e9e9e9 80px)"></i><i style="left:434px;background:linear-gradient(#0b0b0b 0px,#0f0f0f 10px,#1d1d1d 24px,#313131 40px,#4c4c4c 52px,#707070 62px,#979797 70px,#b9b9b9 75px,#e5e5e5 80px)"></i><i style="left:436px;background:linear-gradient(#111111 0px,#181818 10px,#191919 24px,#2c2c2c 40px,#4a4a4a 52px,#6c6c6c 62px,#8f8f8f 70px,#bcbcbc 75px,#e4e4e4 80px)"></i><i style="left:438px;background:linear-gradient(#090909 0px,#171717 10px,#191919 24px,#303030 40px,#4e4e4e 52px,#707070 62px,#929292 70px,#bcbcbc 75px,#e5e5e5 80px)"></i><i style="left:440px;background:linear-gradient(#121212 0px,#161616 10px,#181818 24px,#303030 40px,#4e4e4e 52px,#6f6f6f 62px,#999999 70px,#c0c0c0 75px,#e6e6e6 80px)"></i><i style="left:442px;background:linear-gradient(#0c0c0c 0px,#101010 10px,#1c1c1c 24px,#303030 40px,#545454 52px,#6d6d6d 62px,#8d8d8d 70px,#bababa 75px,#e8e8e8 80px)"></i><i style="left:444px;background:linear-gradient(#080808 0px,#111111 10px,#1a1a1a 24px,#313131 40px,#4b4b4b 52px,#6a6a6a 62px,#969696 70px,#bbbbbb 75px,#e6e6e6 80px)"></i><i style="left:446px;background:linear-gradient(#080808 0px,#111111 10px,#1e1e1e 24px,#2b2b2b 40px,#4c4c4c 52px,#6f6f6f 62px,#929292 70px,#bdbdbd 75px,#e4e4e4 80px)"></i><i style="left:448px;background:linear-gradient(#101010 0px,#171717 10px,#1c1c1c 24px,#2b2b2b 40px,#494949 52px,#707070 62px,#999999 70px,#bdbdbd 75px,#ebebeb 80px)"></i><i style="left:450px;background:linear-gradient(#282828 0px,#303030 10px,#383838 24px,#4a4a4a 40px,#585858 52px,#7a7a7a 62px,#9b9b9b 70px,#bababa 75px,#dedede 80px)"></i><i style="left:452px;background:linear-gradient(#2d2d2d 0px,#303030 10px,#343434 24px,#4c4c4c 40px,#5b5b5b 52px,#6d6d6d 62px,#8c8c8c 70px,#a2a2a2 75px,#bababa 80px)"></i><i style="left:454px;background:linear-gradient(#2e2e2e 0px,#313131 10px,#3b3b3b 24px,#4b4b4b 40px,#565656 52px,#656565 62px,#7a7a7a 70px,#898989 75px,#989898 80px)"></i><i style="left:456px;background:linear-gradient(#131313 0px,#1a1a1a 10px,#282828 24px,#323232 40px,#4a4a4a 52px,#515151 62px,#606060 70px,#666666 75px,#747474 80px)"></i><i style="left:458px;background:linear-gradient(#131313 0px,#1d1d1d 10px,#212121 24px,#333333 40px,#434343 52px,#515151 62px,#5d5d5d 70px,#6b6b6b 75px,#6f6f6f 80px)"></i><i style="left:460px;background:linear-gradient(#121212 0px,#191919 10px,#212121 24px,#2f2f2f 40px,#404040 52px,#595959 62px,#5c5c5c 70px,#6f6f6f 75px,#777777 80px)"></i><i style="left:462px;background:linear-gradient(#101010 0px,#151515 10px,#262626 24px,#383838 40px,#414141 52px,#535353 62px,#646464 70px,#6c6c6c 75px,#7b7b7b 80px)"></i><i style="left:464px;background:linear-gradient(#101010 0px,#1b1b1b 10px,#1f1f1f 24px,#393939 40px,#424242 52px,#4d4d4d 62px,#606060 70px,#6a6a6a 75px,#7b7b7b 80px)"></i><i style="left:466px;background:linear-gradient(#101010 0px,#191919 10px,#252525 24px,#373737 40px,#444444 52px,#575757 62px,#626262 70px,#6a6a6a 75px,#757575 80px)"></i><i style="left:468px;background:linear-gradient(#111111 0px,#161616 10px,#272727 24px,#2e2e2e 40px,#484848 52px,#575757 62px,#606060 70px,#686868 75px,#747474 80px)"></i><i style="left:470px;background:linear-gradient(#131313 0px,#1b1b1b 10px,#242424 24px,#363636 40px,#434343 52px,#545454 62px,#5c5c5c 70px,#6d6d6d 75px,#757575 80px)"></i><i style="left:472px;background:linear-gradient(#0f0f0f 0px,#1c1c1c 10px,#232323 24px,#292929 40px,#474747 52px,#585858 62px,#717171 70px,#858585 75px,#8b8b8b 80px)"></i><i style="left:474px;background:linear-gradient(#101010 0px,#171717 10px,#1f1f1f 24px,#333333 40px,#4d4d4d 52px,#626262 62px,#808080 70px,#8d8d8d 75px,#a5a5a5 80px)"></i><i style="left:476px;background:linear-gradient(#121212 0px,#191919 10px,#191919 24px,#2e2e2e 40px,#4b4b4b 52px,#6d6d6d 62px,#8d8d8d 70px,#9f9f9f 75px,#bebebe 80px)"></i><i style="left:478px;background:linear-gradient(#111111 0px,#181818 10px,#1d1d1d 24px,#353535 40px,#4d4d4d 52px,#707070 62px,#8b8b8b 70px,#a8a8a8 75px,#b6b6b6 80px)"></i><i style="left:480px;background:linear-gradient(#131313 0px,#161616 10px,#1b1b1b 24px,#2d2d2d 40px,#464646 52px,#6c6c6c 62px,#878787 70px,#a4a4a4 75px,#b8b8b8 80px)"></i><i style="left:482px;background:linear-gradient(#131313 0px,#171717 10px,#1b1b1b 24px,#2e2e2e 40px,#4a4a4a 52px,#6a6a6a 62px,#888888 70px,#a3a3a3 75px,#bcbcbc 80px)"></i><i style="left:484px;background:linear-gradient(#0a0a0a 0px,#161616 10px,#191919 24px,#303030 40px,#525252 52px,#6f6f6f 62px,#888888 70px,#9e9e9e 75px,#b8b8b8 80px)"></i><i style="left:486px;background:linear-gradient(#0a0a0a 0px,#191919 10px,#191919 24px,#303030 40px,#4a4a4a 52px,#6d6d6d 62px,#8d8d8d 70px,#a1a1a1 75px,#bbbbbb 80px)"></i><i style="left:488px;background:linear-gradient(#0c0c0c 0px,#191919 10px,#181818 24px,#2c2c2c 40px,#484848 52px,#696969 62px,#8b8b8b 70px,#ababab 75px,#b9b9b9 80px)"></i><i style="left:490px;background:linear-gradient(#121212 0px,#171717 10px,#181818 24px,#2f2f2f 40px,#4b4b4b 52px,#6b6b6b 62px,#8f8f8f 70px,#9d9d9d 75px,#bdbdbd 80px)"></i><i style="left:492px;background:linear-gradient(#101010 0px,#151515 10px,#1c1c1c 24px,#333333 40px,#4c4c4c 52px,#6e6e6e 62px,#8b8b8b 70px,#9c9c9c 75px,#c1c1c1 80px)"></i><i style="left:494px;background:linear-gradient(#161616 0px,#191919 10px,#1f1f1f 24px,#2c2c2c 40px,#4c4c4c 52px,#6b6b6b 62px,#878787 70px,#a6a6a6 75px,#bababa 80px)"></i><i style="left:496px;background:linear-gradient(#0e0e0e 0px,#111111 10px,#1b1b1b 24px,#303030 40px,#4a4a4a 52px,#6b6b6b 62px,#8f8f8f 70px,#9f9f9f 75px,#b9b9b9 80px)"></i><i style="left:498px;background:linear-gradient(#0c0c0c 0px,#1a1a1a 10px,#222222 24px,#313131 40px,#4a4a4a 52px,#6c6c6c 62px,#8c8c8c 70px,#a0a0a0 75px,#c1c1c1 80px)"></i><i style="left:500px;background:linear-gradient(#131313 0px,#171717 10px,#1e1e1e 24px,#323232 40px,#515151 52px,#6a6a6a 62px,#8d8d8d 70px,#a2a2a2 75px,#bababa 80px)"></i><i style="left:502px;background:linear-gradient(#0f0f0f 0px,#161616 10px,#191919 24px,#2b2b2b 40px,#494949 52px,#727272 62px,#8f8f8f 70px,#a5a5a5 75px,#c0c0c0 80px)"></i><i style="left:504px;background:linear-gradient(#0d0d0d 0px,#161616 10px,#1c1c1c 24px,#2d2d2d 40px,#494949 52px,#6d6d6d 62px,#888888 70px,#9f9f9f 75px,#bdbdbd 80px)"></i><i style="left:506px;background:linear-gradient(#0e0e0e 0px,#1a1a1a 10px,#1c1c1c 24px,#2f2f2f 40px,#4c4c4c 52px,#6d6d6d 62px,#878787 70px,#a1a1a1 75px,#bebebe 80px)"></i><i style="left:508px;background:linear-gradient(#111111 0px,#1a1a1a 10px,#161616 24px,#2f2f2f 40px,#4b4b4b 52px,#6e6e6e 62px,#888888 70px,#a1a1a1 75px,#bfbfbf 80px)"></i><i style="left:510px;background:linear-gradient(#0f0f0f 0px,#131313 10px,#202020 24px,#333333 40px,#4a4a4a 52px,#707070 62px,#878787 70px,#a6a6a6 75px,#bcbcbc 80px)"></i><i style="left:512px;background:linear-gradient(#0c0c0c 0px,#151515 10px,#191919 24px,#313131 40px,#4d4d4d 52px,#6d6d6d 62px,#878787 70px,#979797 75px,#bcbcbc 80px)"></i><i style="left:514px;background:linear-gradient(#090909 0px,#171717 10px,#1f1f1f 24px,#313131 40px,#4b4b4b 52px,#6d6d6d 62px,#898989 70px,#a1a1a1 75px,#bababa 80px)"></i><i style="left:516px;background:linear-gradient(#0c0c0c 0px,#1a1a1a 10px,#1c1c1c 24px,#333333 40px,#4b4b4b 52px,#6d6d6d 62px,#898989 70px,#a4a4a4 75px,#bfbfbf 80px)"></i><i style="left:518px;background:linear-gradient(#101010 0px,#141414 10px,#191919 24px,#353535 40px,#4b4b4b 52px,#6c6c6c 62px,#8e8e8e 70px,#a6a6a6 75px,#bebebe 80px)"></i><i style="left:520px;background:linear-gradient(#0e0e0e 0px,#1e1e1e 10px,#1d1d1d 24px,#323232 40px,#4b4b4b 52px,#696969 62px,#858585 70px,#a4a4a4 75px,#bdbdbd 80px)"></i><i style="left:522px;background:linear-gradient(#0e0e0e 0px,#131313 10px,#171717 24px,#2f2f2f 40px,#484848 52px,#707070 62px,#8d8d8d 70px,#ababab 75px,#bfbfbf 80px)"></i><i style="left:524px;background:linear-gradient(#0d0d0d 0px,#141414 10px,#111111 24px,#2e2e2e 40px,#4b4b4b 52px,#707070 62px,#8b8b8b 70px,#a5a5a5 75px,#bdbdbd 80px)"></i><i style="left:526px;background:linear-gradient(#111111 0px,#1b1b1b 10px,#181818 24px,#2f2f2f 40px,#484848 52px,#727272 62px,#8d8d8d 70px,#a5a5a5 75px,#b9b9b9 80px)"></i><i style="left:528px;background:linear-gradient(#0f0f0f 0px,#161616 10px,#1c1c1c 24px,#2f2f2f 40px,#4e4e4e 52px,#6c6c6c 62px,#8c8c8c 70px,#a3a3a3 75px,#bbbbbb 80px)"></i><i style="left:530px;background:linear-gradient(#0e0e0e 0px,#151515 10px,#1e1e1e 24px,#2f2f2f 40px,#4d4d4d 52px,#6c6c6c 62px,#858585 70px,#a5a5a5 75px,#b9b9b9 80px)"></i><i style="left:532px;background:linear-gradient(#111111 0px,#181818 10px,#161616 24px,#2d2d2d 40px,#4a4a4a 52px,#6b6b6b 62px,#868686 70px,#a5a5a5 75px,#bbbbbb 80px)"></i><i style="left:534px;background:linear-gradient(#0d0d0d 0px,#131313 10px,#1c1c1c 24px,#2e2e2e 40px,#4c4c4c 52px,#6f6f6f 62px,#8d8d8d 70px,#aaaaaa 75px,#c7c7c7 80px)"></i><i style="left:536px;background:linear-gradient(#0a0a0a 0px,#121212 10px,#1b1b1b 24px,#2e2e2e 40px,#4e4e4e 52px,#757575 62px,#8f8f8f 70px,#b5b5b5 75px,#dadada 80px)"></i><i style="left:538px;background:linear-gradient(#000000 0px,#0f0f0f 10px,#191919 24px,#343434 40px,#4b4b4b 52px,#6b6b6b 62px,#939393 70px,#bdbdbd 75px,#e6e6e6 80px)"></i><i style="left:540px;background:linear-gradient(#070707 0px,#0b0b0b 10px,#1b1b1b 24px,#323232 40px,#525252 52px,#6f6f6f 62px,#949494 70px,#c0c0c0 75px,#ebebeb 80px)"></i><i style="left:542px;background:linear-gradient(#0c0c0c 0px,#121212 10px,#1b1b1b 24px,#313131 40px,#4d4d4d 52px,#6e6e6e 62px,#949494 70px,#bababa 75px,#e1e1e1 80px)"></i><i style="left:544px;background:linear-gradient(#050505 0px,#090909 10px,#1c1c1c 24px,#303030 40px,#474747 52px,#6f6f6f 62px,#969696 70px,#bcbcbc 75px,#ededed 80px)"></i><i style="left:546px;background:linear-gradient(#0d0d0d 0px,#0b0b0b 10px,#1f1f1f 24px,#313131 40px,#4d4d4d 52px,#707070 62px,#919191 70px,#bababa 75px,#e5e5e5 80px)"></i><i style="left:548px;background:linear-gradient(#050505 0px,#0e0e0e 10px,#171717 24px,#2d2d2d 40px,#4e4e4e 52px,#6d6d6d 62px,#959595 70px,#b6b6b6 75px,#e5e5e5 80px)"></i><i style="left:550px;background:linear-gradient(#050505 0px,#0f0f0f 10px,#1a1a1a 24px,#333333 40px,#4c4c4c 52px,#6d6d6d 62px,#939393 70px,#bebebe 75px,#e6e6e6 80px)"></i><i style="left:552px;background:linear-gradient(#0b0b0b 0px,#101010 10px,#1c1c1c 24px,#303030 40px,#4e4e4e 52px,#707070 62px,#969696 70px,#bdbdbd 75px,#eaeaea 80px)"></i><i style="left:554px;background:linear-gradient(#080808 0px,#131313 10px,#1b1b1b 24px,#2a2a2a 40px,#505050 52px,#6d6d6d 62px,#909090 70px,#bcbcbc 75px,#e5e5e5 80px)"></i><i style="left:556px;background:linear-gradient(#0e0e0e 0px,#101010 10px,#171717 24px,#323232 40px,#4b4b4b 52px,#737373 62px,#909090 70px,#b5b5b5 75px,#e8e8e8 80px)"></i><i style="left:558px;background:linear-gradient(#060606 0px,#0e0e0e 10px,#151515 24px,#313131 40px,#515151 52px,#676767 62px,#979797 70px,#bababa 75px,#efefef 80px)"></i><i style="left:560px;background:linear-gradient(#080808 0px,#0e0e0e 10px,#1f1f1f 24px,#323232 40px,#4a4a4a 52px,#6f6f6f 62px,#929292 70px,#b7b7b7 75px,#eeeeee 80px)"></i><i style="left:562px;background:linear-gradient(#060606 0px,#0d0d0d 10px,#1d1d1d 24px,#2b2b2b 40px,#484848 52px,#6c6c6c 62px,#929292 70px,#bcbcbc 75px,#ebebeb 80px)"></i><i style="left:564px;background:linear-gradient(#060606 0px,#101010 10px,#1d1d1d 24px,#2d2d2d 40px,#4d4d4d 52px,#6a6a6a 62px,#979797 70px,#bebebe 75px,#e8e8e8 80px)"></i><i style="left:566px;background:linear-gradient(#030303 0px,#0f0f0f 10px,#191919 24px,#323232 40px,#4c4c4c 52px,#6b6b6b 62px,#969696 70px,#bebebe 75px,#e6e6e6 80px)"></i><i style="left:568px;background:linear-gradient(#0b0b0b 0px,#0e0e0e 10px,#1b1b1b 24px,#303030 40px,#4a4a4a 52px,#6c6c6c 62px,#939393 70px,#c1c1c1 75px,#ececec 80px)"></i><i style="left:570px;background:linear-gradient(#060606 0px,#141414 10px,#1b1b1b 24px,#313131 40px,#4f4f4f 52px,#6e6e6e 62px,#9b9b9b 70px,#bdbdbd 75px,#e4e4e4 80px)"></i><i style="left:572px;background:linear-gradient(#0b0b0b 0px,#0e0e0e 10px,#1b1b1b 24px,#272727 40px,#4f4f4f 52px,#707070 62px,#969696 70px,#bfbfbf 75px,#ededed 80px)"></i><i style="left:574px;background:linear-gradient(#070707 0px,#121212 10px,#191919 24px,#2f2f2f 40px,#4f4f4f 52px,#6e6e6e 62px,#8f8f8f 70px,#bdbdbd 75px,#e7e7e7 80px)"></i><i style="left:576px;background:linear-gradient(#050505 0px,#101010 10px,#1a1a1a 24px,#2b2b2b 40px,#494949 52px,#737373 62px,#8f8f8f 70px,#bdbdbd 75px,#e9e9e9 80px)"></i><i style="left:578px;background:linear-gradient(#090909 0px,#0b0b0b 10px,#1b1b1b 24px,#303030 40px,#4e4e4e 52px,#6b6b6b 62px,#909090 70px,#bfbfbf 75px,#ebebeb 80px)"></i><i style="left:580px;background:linear-gradient(#080808 0px,#0d0d0d 10px,#1d1d1d 24px,#303030 40px,#4f4f4f 52px,#696969 62px,#949494 70px,#bcbcbc 75px,#e4e4e4 80px)"></i><i style="left:582px;background:linear-gradient(#080808 0px,#0f0f0f 10px,#1a1a1a 24px,#313131 40px,#484848 52px,#6d6d6d 62px,#959595 70px,#bdbdbd 75px,#ebebeb 80px)"></i><i style="left:584px;background:linear-gradient(#030303 0px,#0a0a0a 10px,#1c1c1c 24px,#313131 40px,#525252 52px,#6f6f6f 62px,#919191 70px,#bfbfbf 75px,#e5e5e5 80px)"></i><i style="left:586px;background:linear-gradient(#030303 0px,#171717 10px,#1d1d1d 24px,#323232 40px,#4e4e4e 52px,#737373 62px,#949494 70px,#c0c0c0 75px,#e4e4e4 80px)"></i><i style="left:588px;background:linear-gradient(#030303 0px,#131313 10px,#202020 24px,#323232 40px,#4d4d4d 52px,#6e6e6e 62px,#919191 70px,#c1c1c1 75px,#eaeaea 80px)"></i><i style="left:590px;background:linear-gradient(#090909 0px,#101010 10px,#1f1f1f 24px,#313131 40px,#4e4e4e 52px,#6a6a6a 62px,#959595 70px,#c3c3c3 75px,#e6e6e6 80px)"></i><i style="left:592px;background:linear-gradient(#070707 0px,#121212 10px,#1e1e1e 24px,#323232 40px,#474747 52px,#6f6f6f 62px,#909090 70px,#bababa 75px,#e9e9e9 80px)"></i><i style="left:594px;background:linear-gradient(#060606 0px,#111111 10px,#252525 24px,#323232 40px,#4e4e4e 52px,#6a6a6a 62px,#919191 70px,#b9b9b9 75px,#e6e6e6 80px)"></i><i style="left:596px;background:linear-gradient(#040404 0px,#0d0d0d 10px,#1b1b1b 24px,#2d2d2d 40px,#484848 52px,#696969 62px,#959595 70px,#bcbcbc 75px,#ebebeb 80px)"></i><i style="left:598px;background:linear-gradient(#0a0a0a 0px,#0e0e0e 10px,#1e1e1e 24px,#2c2c2c 40px,#535353 52px,#717171 62px,#939393 70px,#b9b9b9 75px,#e9e9e9 80px)"></i><i style="left:600px;background:linear-gradient(#010101 0px,#0c0c0c 10px,#1e1e1e 24px,#303030 40px,#4a4a4a 52px,#707070 62px,#909090 70px,#bdbdbd 75px,#e6e6e6 80px)"></i><i style="left:602px;background:linear-gradient(#050505 0px,#101010 10px,#191919 24px,#363636 40px,#4a4a4a 52px,#737373 62px,#909090 70px,#bebebe 75px,#e4e4e4 80px)"></i><i style="left:604px;background:linear-gradient(#030303 0px,#0f0f0f 10px,#1e1e1e 24px,#2c2c2c 40px,#505050 52px,#6b6b6b 62px,#949494 70px,#bdbdbd 75px,#e9e9e9 80px)"></i><i style="left:606px;background:linear-gradient(#020202 0px,#141414 10px,#1d1d1d 24px,#2f2f2f 40px,#494949 52px,#686868 62px,#8f8f8f 70px,#bebebe 75px,#e7e7e7 80px)"></i><i style="left:608px;background:linear-gradient(#040404 0px,#0d0d0d 10px,#202020 24px,#2f2f2f 40px,#4a4a4a 52px,#717171 62px,#959595 70px,#bcbcbc 75px,#e6e6e6 80px)"></i><i style="left:610px;background:linear-gradient(#020202 0px,#0b0b0b 10px,#1a1a1a 24px,#2f2f2f 40px,#4d4d4d 52px,#6f6f6f 62px,#949494 70px,#bdbdbd 75px,#e4e4e4 80px)"></i><i style="left:612px;background:linear-gradient(#010101 0px,#0d0d0d 10px,#191919 24px,#2e2e2e 40px,#4b4b4b 52px,#696969 62px,#909090 70px,#bcbcbc 75px,#e8e8e8 80px)"></i><i style="left:614px;background:linear-gradient(#050505 0px,#101010 10px,#1b1b1b 24px,#2d2d2d 40px,#4c4c4c 52px,#737373 62px,#919191 70px,#c0c0c0 75px,#ececec 80px)"></i><i style="left:616px;background:linear-gradient(#0c0c0c 0px,#0c0c0c 10px,#222222 24px,#303030 40px,#4b4b4b 52px,#6c6c6c 62px,#959595 70px,#bcbcbc 75px,#e7e7e7 80px)"></i><i style="left:618px;background:linear-gradient(#0b0b0b 0px,#0d0d0d 10px,#181818 24px,#323232 40px,#4e4e4e 52px,#707070 62px,#909090 70px,#c0c0c0 75px,#e9e9e9 80px)"></i><i style="left:620px;background:linear-gradient(#0d0d0d 0px,#0b0b0b 10px,#1c1c1c 24px,#2f2f2f 40px,#474747 52px,#6b6b6b 62px,#979797 70px,#bbbbbb 75px,#e5e5e5 80px)"></i><i style="left:622px;background:linear-gradient(#0a0a0a 0px,#121212 10px,#1f1f1f 24px,#2e2e2e 40px,#4c4c4c 52px,#707070 62px,#919191 70px,#bababa 75px,#eaeaea 80px)"></i><i style="left:624px;background:linear-gradient(#0e0e0e 0px,#0e0e0e 10px,#141414 24px,#2c2c2c 40px,#494949 52px,#6d6d6d 62px,#949494 70px,#b5b5b5 75px,#d9d9d9 80px)"></i><i style="left:626px;background:linear-gradient(#0d0d0d 0px,#111111 10px,#1b1b1b 24px,#2e2e2e 40px,#545454 52px,#707070 62px,#8d8d8d 70px,#acacac 75px,#cdcdcd 80px)"></i><i style="left:628px;background:linear-gradient(#0a0a0a 0px,#141414 10px,#191919 24px,#333333 40px,#4b4b4b 52px,#6b6b6b 62px,#8a8a8a 70px,#a4a4a4 75px,#c1c1c1 80px)"></i><i style="left:630px;background:linear-gradient(#0e0e0e 0px,#1a1a1a 10px,#1a1a1a 24px,#333333 40px,#4d4d4d 52px,#6d6d6d 62px,#888888 70px,#a4a4a4 75px,#c4c4c4 80px)"></i><i style="left:632px;background:linear-gradient(#131313 0px,#171717 10px,#1e1e1e 24px,#2f2f2f 40px,#4b4b4b 52px,#6b6b6b 62px,#919191 70px,#a9a9a9 75px,#c1c1c1 80px)"></i><i style="left:634px;background:linear-gradient(#0e0e0e 0px,#181818 10px,#1d1d1d 24px,#2d2d2d 40px,#515151 52px,#6e6e6e 62px,#8e8e8e 70px,#acacac 75px,#c4c4c4 80px)"></i><i style="left:636px;background:linear-gradient(#0f0f0f 0px,#181818 10px,#181818 24px,#2e2e2e 40px,#454545 52px,#717171 62px,#888888 70px,#aaaaaa 75px,#bfbfbf 80px)"></i><i style="left:638px;background:linear-gradient(#0c0c0c 0px,#161616 10px,#1c1c1c 24px,#323232 40px,#515151 52px,#6e6e6e 62px,#919191 70px,#a6a6a6 75px,#c3c3c3 80px)"></i><i style="left:640px;background:linear-gradient(#0f0f0f 0px,#151515 10px,#1b1b1b 24px,#303030 40px,#4d4d4d 52px,#6e6e6e 62px,#8d8d8d 70px,#a6a6a6 75px,#c4c4c4 80px)"></i><i style="left:642px;background:linear-gradient(#0a0a0a 0px,#151515 10px,#202020 24px,#282828 40px,#4a4a4a 52px,#6f6f6f 62px,#898989 70px,#b0b0b0 75px,#b9b9b9 80px)"></i><i style="left:644px;background:linear-gradient(#131313 0px,#1b1b1b 10px,#1e1e1e 24px,#2f2f2f 40px,#4d4d4d 52px,#6a6a6a 62px,#919191 70px,#a4a4a4 75px,#c0c0c0 80px)"></i><i style="left:646px;background:linear-gradient(#121212 0px,#131313 10px,#1a1a1a 24px,#303030 40px,#484848 52px,#717171 62px,#8f8f8f 70px,#a3a3a3 75px,#c1c1c1 80px)"></i><i style="left:648px;background:linear-gradient(#0c0c0c 0px,#141414 10px,#1c1c1c 24px,#2e2e2e 40px,#4f4f4f 52px,#6b6b6b 62px,#919191 70px,#a8a8a8 75px,#c4c4c4 80px)"></i><i style="left:650px;background:linear-gradient(#0d0d0d 0px,#151515 10px,#181818 24px,#323232 40px,#4f4f4f 52px,#747474 62px,#929292 70px,#a9a9a9 75px,#c1c1c1 80px)"></i><i style="left:652px;background:linear-gradient(#101010 0px,#161616 10px,#202020 24px,#333333 40px,#494949 52px,#6b6b6b 62px,#929292 70px,#a9a9a9 75px,#c1c1c1 80px)"></i><i style="left:654px;background:linear-gradient(#121212 0px,#151515 10px,#1b1b1b 24px,#2f2f2f 40px,#464646 52px,#707070 62px,#8b8b8b 70px,#a6a6a6 75px,#bfbfbf 80px)"></i><i style="left:656px;background:linear-gradient(#111111 0px,#161616 10px,#1c1c1c 24px,#2b2b2b 40px,#4c4c4c 52px,#696969 62px,#8f8f8f 70px,#a9a9a9 75px,#c1c1c1 80px)"></i><i style="left:658px;background:linear-gradient(#151515 0px,#181818 10px,#1d1d1d 24px,#303030 40px,#4b4b4b 52px,#707070 62px,#929292 70px,#a4a4a4 75px,#c5c5c5 80px)"></i><i style="left:660px;background:linear-gradient(#101010 0px,#191919 10px,#1d1d1d 24px,#2c2c2c 40px,#484848 52px,#737373 62px,#8f8f8f 70px,#a3a3a3 75px,#c2c2c2 80px)"></i><i style="left:662px;background:linear-gradient(#0e0e0e 0px,#111111 10px,#151515 24px,#2b2b2b 40px,#4d4d4d 52px,#6d6d6d 62px,#8e8e8e 70px,#a9a9a9 75px,#c3c3c3 80px)"></i><i style="left:664px;background:linear-gradient(#080808 0px,#161616 10px,#191919 24px,#2c2c2c 40px,#4a4a4a 52px,#6d6d6d 62px,#8d8d8d 70px,#a3a3a3 75px,#c0c0c0 80px)"></i><i style="left:666px;background:linear-gradient(#151515 0px,#131313 10px,#161616 24px,#313131 40px,#4e4e4e 52px,#6f6f6f 62px,#8b8b8b 70px,#ababab 75px,#bfbfbf 80px)"></i><i style="left:668px;background:linear-gradient(#0b0b0b 0px,#151515 10px,#1b1b1b 24px,#323232 40px,#4e4e4e 52px,#6d6d6d 62px,#919191 70px,#a8a8a8 75px,#c4c4c4 80px)"></i><i style="left:670px;background:linear-gradient(#0b0b0b 0px,#121212 10px,#1e1e1e 24px,#2c2c2c 40px,#4b4b4b 52px,#6d6d6d 62px,#8d8d8d 70px,#a6a6a6 75px,#c6c6c6 80px)"></i><i style="left:672px;background:linear-gradient(#050505 0px,#171717 10px,#222222 24px,#2f2f2f 40px,#4c4c4c 52px,#6f6f6f 62px,#949494 70px,#a4a4a4 75px,#c2c2c2 80px)"></i><i style="left:674px;background:linear-gradient(#0b0b0b 0px,#131313 10px,#1a1a1a 24px,#303030 40px,#4b4b4b 52px,#6d6d6d 62px,#8c8c8c 70px,#a6a6a6 75px,#c1c1c1 80px)"></i><i style="left:676px;background:linear-gradient(#090909 0px,#0b0b0b 10px,#1e1e1e 24px,#2d2d2d 40px,#484848 52px,#717171 62px,#8c8c8c 70px,#a9a9a9 75px,#c1c1c1 80px)"></i><i style="left:678px;background:linear-gradient(#0a0a0a 0px,#0f0f0f 10px,#171717 24px,#2e2e2e 40px,#525252 52px,#666666 62px,#8f8f8f 70px,#a9a9a9 75px,#bebebe 80px)"></i><i style="left:680px;background:linear-gradient(#060606 0px,#151515 10px,#181818 24px,#343434 40px,#4e4e4e 52px,#6d6d6d 62px,#909090 70px,#aaaaaa 75px,#c5c5c5 80px)"></i><i style="left:682px;background:linear-gradient(#0b0b0b 0px,#0f0f0f 10px,#1a1a1a 24px,#323232 40px,#4e4e4e 52px,#6a6a6a 62px,#8c8c8c 70px,#a9a9a9 75px,#bfbfbf 80px)"></i><i style="left:684px;background:linear-gradient(#090909 0px,#0c0c0c 10px,#181818 24px,#2f2f2f 40px,#4f4f4f 52px,#6d6d6d 62px,#959595 70px,#a8a8a8 75px,#cbcbcb 80px)"></i><i style="left:686px;background:linear-gradient(#0d0d0d 0px,#101010 10px,#171717 24px,#252525 40px,#4c4c4c 52px,#6e6e6e 62px,#949494 70px,#a4a4a4 75px,#c7c7c7 80px)"></i><i style="left:688px;background:linear-gradient(#090909 0px,#111111 10px,#111111 24px,#2e2e2e 40px,#4b4b4b 52px,#6f6f6f 62px,#8f8f8f 70px,#a4a4a4 75px,#c4c4c4 80px)"></i><i style="left:690px;background:linear-gradient(#0c0c0c 0px,#111111 10px,#1c1c1c 24px,#313131 40px,#4c4c4c 52px,#696969 62px,#8a8a8a 70px,#acacac 75px,#c3c3c3 80px)"></i><i style="left:692px;background:linear-gradient(#0a0a0a 0px,#0d0d0d 10px,#191919 24px,#2d2d2d 40px,#4b4b4b 52px,#6b6b6b 62px,#959595 70px,#a8a8a8 75px,#bfbfbf 80px)"></i><i style="left:694px;background:linear-gradient(#060606 0px,#0d0d0d 10px,#1b1b1b 24px,#303030 40px,#4b4b4b 52px,#6d6d6d 62px,#8d8d8d 70px,#a4a4a4 75px,#c5c5c5 80px)"></i><i style="left:696px;background:linear-gradient(#0b0b0b 0px,#161616 10px,#171717 24px,#2d2d2d 40px,#4f4f4f 52px,#6c6c6c 62px,#8a8a8a 70px,#a5a5a5 75px,#c2c2c2 80px)"></i><i style="left:698px;background:linear-gradient(#0b0b0b 0px,#0f0f0f 10px,#1c1c1c 24px,#303030 40px,#4d4d4d 52px,#6d6d6d 62px,#8e8e8e 70px,#a9a9a9 75px,#c4c4c4 80px)"></i><i style="left:700px;background:linear-gradient(#0a0a0a 0px,#101010 10px,#181818 24px,#292929 40px,#494949 52px,#6f6f6f 62px,#909090 70px,#adadad 75px,#c1c1c1 80px)"></i><i style="left:702px;background:linear-gradient(#0c0c0c 0px,#131313 10px,#1c1c1c 24px,#2c2c2c 40px,#4b4b4b 52px,#6e6e6e 62px,#8b8b8b 70px,#a9a9a9 75px,#c4c4c4 80px)"></i><i style="left:704px;background:linear-gradient(#080808 0px,#151515 10px,#181818 24px,#2d2d2d 40px,#4b4b4b 52px,#6b6b6b 62px,#909090 70px,#a8a8a8 75px,#c6c6c6 80px)"></i><i style="left:706px;background:linear-gradient(#0c0c0c 0px,#101010 10px,#181818 24px,#292929 40px,#4c4c4c 52px,#6b6b6b 62px,#919191 70px,#a8a8a8 75px,#c6c6c6 80px)"></i><i style="left:708px;background:linear-gradient(#0c0c0c 0px,#111111 10px,#1a1a1a 24px,#2e2e2e 40px,#4e4e4e 52px,#707070 62px,#8c8c8c 70px,#a9a9a9 75px,#c9c9c9 80px)"></i><i style="left:710px;background:linear-gradient(#090909 0px,#0e0e0e 10px,#171717 24px,#292929 40px,#505050 52px,#6d6d6d 62px,#8f8f8f 70px,#adadad 75px,#c9c9c9 80px)"></i><i style="left:712px;background:linear-gradient(#070707 0px,#121212 10px,#1b1b1b 24px,#2f2f2f 40px,#4d4d4d 52px,#6d6d6d 62px,#939393 70px,#aaaaaa 75px,#c2c2c2 80px)"></i><i style="left:714px;background:linear-gradient(#0e0e0e 0px,#121212 10px,#1a1a1a 24px,#2e2e2e 40px,#515151 52px,#6f6f6f 62px,#8e8e8e 70px,#a5a5a5 75px,#c0c0c0 80px)"></i><i style="left:716px;background:linear-gradient(#060606 0px,#0f0f0f 10px,#1a1a1a 24px,#272727 40px,#4c4c4c 52px,#6f6f6f 62px,#8f8f8f 70px,#a5a5a5 75px,#c5c5c5 80px)"></i><i style="left:718px;background:linear-gradient(#080808 0px,#0b0b0b 10px,#161616 24px,#2d2d2d 40px,#4f4f4f 52px,#717171 62px,#8f8f8f 70px,#a4a4a4 75px,#bfbfbf 80px)"></i><i style="left:720px;background:linear-gradient(#070707 0px,#0e0e0e 10px,#141414 24px,#2e2e2e 40px,#4e4e4e 52px,#6d6d6d 62px,#909090 70px,#a5a5a5 75px,#bdbdbd 80px)"></i><i style="left:722px;background:linear-gradient(#080808 0px,#121212 10px,#1c1c1c 24px,#2c2c2c 40px,#505050 52px,#6c6c6c 62px,#939393 70px,#a9a9a9 75px,#c0c0c0 80px)"></i><i style="left:724px;background:linear-gradient(#0c0c0c 0px,#0c0c0c 10px,#161616 24px,#292929 40px,#4d4d4d 52px,#6d6d6d 62px,#8e8e8e 70px,#a7a7a7 75px,#c6c6c6 80px)"></i><i style="left:726px;background:linear-gradient(#080808 0px,#0d0d0d 10px,#1d1d1d 24px,#323232 40px,#4d4d4d 52px,#686868 62px,#8c8c8c 70px,#aaaaaa 75px,#c1c1c1 80px)"></i><i style="left:728px;background:linear-gradient(#0e0e0e 0px,#0b0b0b 10px,#1b1b1b 24px,#2b2b2b 40px,#505050 52px,#6d6d6d 62px,#919191 70px,#a6a6a6 75px,#bdbdbd 80px)"></i><i style="left:730px;background:linear-gradient(#060606 0px,#0d0d0d 10px,#161616 24px,#313131 40px,#505050 52px,#6e6e6e 62px,#8b8b8b 70px,#a7a7a7 75px,#bfbfbf 80px)"></i><i style="left:732px;background:linear-gradient(#0e0e0e 0px,#101010 10px,#1a1a1a 24px,#2c2c2c 40px,#464646 52px,#6b6b6b 62px,#8b8b8b 70px,#a9a9a9 75px,#c2c2c2 80px)"></i><i style="left:734px;background:linear-gradient(#070707 0px,#0e0e0e 10px,#1e1e1e 24px,#2a2a2a 40px,#494949 52px,#6c6c6c 62px,#8c8c8c 70px,#a6a6a6 75px,#c3c3c3 80px)"></i><i style="left:736px;background:linear-gradient(#0f0f0f 0px,#090909 10px,#191919 24px,#2e2e2e 40px,#4c4c4c 52px,#6d6d6d 62px,#8d8d8d 70px,#ababab 75px,#c0c0c0 80px)"></i><i style="left:738px;background:linear-gradient(#0b0b0b 0px,#111111 10px,#1a1a1a 24px,#2e2e2e 40px,#4f4f4f 52px,#6d6d6d 62px,#919191 70px,#a9a9a9 75px,#c0c0c0 80px)"></i><i style="left:740px;background:linear-gradient(#0b0b0b 0px,#111111 10px,#1b1b1b 24px,#2d2d2d 40px,#494949 52px,#6e6e6e 62px,#939393 70px,#a6a6a6 75px,#cacaca 80px)"></i><i style="left:742px;background:linear-gradient(#0f0f0f 0px,#161616 10px,#1f1f1f 24px,#303030 40px,#4a4a4a 52px,#747474 62px,#909090 70px,#adadad 75px,#c9c9c9 80px)"></i><i style="left:744px;background:linear-gradient(#0c0c0c 0px,#161616 10px,#1d1d1d 24px,#373737 40px,#494949 52px,#6d6d6d 62px,#959595 70px,#adadad 75px,#c3c3c3 80px)"></i><i style="left:746px;background:linear-gradient(#101010 0px,#171717 10px,#1d1d1d 24px,#333333 40px,#4f4f4f 52px,#6e6e6e 62px,#949494 70px,#aaaaaa 75px,#c6c6c6 80px)"></i><i style="left:748px;background:linear-gradient(#0f0f0f 0px,#151515 10px,#1c1c1c 24px,#2d2d2d 40px,#515151 52px,#747474 62px,#929292 70px,#aeaeae 75px,#c6c6c6 80px)"></i><i style="left:750px;background:linear-gradient(#131313 0px,#181818 10px,#1c1c1c 24px,#2f2f2f 40px,#4c4c4c 52px,#6a6a6a 62px,#959595 70px,#ababab 75px,#c8c8c8 80px)"></i><i style="left:752px;background:linear-gradient(#0f0f0f 0px,#1a1a1a 10px,#1b1b1b 24px,#333333 40px,#494949 52px,#6f6f6f 62px,#939393 70px,#adadad 75px,#c7c7c7 80px)"></i><i style="left:754px;background:linear-gradient(#121212 0px,#101010 10px,#1d1d1d 24px,#2b2b2b 40px,#505050 52px,#676767 62px,#909090 70px,#a8a8a8 75px,#cbcbcb 80px)"></i><i style="left:756px;background:linear-gradient(#0b0b0b 0px,#171717 10px,#1a1a1a 24px,#2a2a2a 40px,#4b4b4b 52px,#6f6f6f 62px,#939393 70px,#b0b0b0 75px,#c5c5c5 80px)"></i><i style="left:758px;background:linear-gradient(#0f0f0f 0px,#151515 10px,#1d1d1d 24px,#363636 40px,#4d4d4d 52px,#6e6e6e 62px,#929292 70px,#ababab 75px,#cbcbcb 80px)"></i><i style="left:760px;background:linear-gradient(#0b0b0b 0px,#141414 10px,#1b1b1b 24px,#2f2f2f 40px,#525252 52px,#666666 62px,#959595 70px,#afafaf 75px,#c3c3c3 80px)"></i><i style="left:762px;background:linear-gradient(#0d0d0d 0px,#181818 10px,#212121 24px,#2d2d2d 40px,#474747 52px,#707070 62px,#989898 70px,#acacac 75px,#c0c0c0 80px)"></i><i style="left:764px;background:linear-gradient(#131313 0px,#161616 10px,#1f1f1f 24px,#303030 40px,#4b4b4b 52px,#6c6c6c 62px,#989898 70px,#b1b1b1 75px,#c0c0c0 80px)"></i><i style="left:766px;background:linear-gradient(#0c0c0c 0px,#1c1c1c 10px,#1a1a1a 24px,#2c2c2c 40px,#4c4c4c 52px,#6d6d6d 62px,#939393 70px,#ababab 75px,#c5c5c5 80px)"></i><i style="left:768px;background:linear-gradient(#0d0d0d 0px,#171717 10px,#191919 24px,#2f2f2f 40px,#4c4c4c 52px,#717171 62px,#959595 70px,#adadad 75px,#c8c8c8 80px)"></i><i style="left:770px;background:linear-gradient(#101010 0px,#1a1a1a 10px,#1d1d1d 24px,#353535 40px,#505050 52px,#6d6d6d 62px,#929292 70px,#b0b0b0 75px,#c8c8c8 80px)"></i><i style="left:772px;background:linear-gradient(#0f0f0f 0px,#121212 10px,#161616 24px,#313131 40px,#4e4e4e 52px,#707070 62px,#8f8f8f 70px,#b0b0b0 75px,#c5c5c5 80px)"></i><i style="left:774px;background:linear-gradient(#101010 0px,#181818 10px,#191919 24px,#2e2e2e 40px,#464646 52px,#6a6a6a 62px,#8e8e8e 70px,#aeaeae 75px,#c7c7c7 80px)"></i><i style="left:776px;background:linear-gradient(#121212 0px,#181818 10px,#1a1a1a 24px,#313131 40px,#4b4b4b 52px,#6f6f6f 62px,#949494 70px,#aaaaaa 75px,#c6c6c6 80px)"></i><i style="left:778px;background:linear-gradient(#0f0f0f 0px,#161616 10px,#1e1e1e 24px,#353535 40px,#4b4b4b 52px,#6c6c6c 62px,#8d8d8d 70px,#adadad 75px,#c5c5c5 80px)"></i><i style="left:780px;background:linear-gradient(#080808 0px,#171717 10px,#1d1d1d 24px,#2e2e2e 40px,#4b4b4b 52px,#6a6a6a 62px,#969696 70px,#a8a8a8 75px,#c5c5c5 80px)"></i><i style="left:782px;background:linear-gradient(#151515 0px,#171717 10px,#1d1d1d 24px,#303030 40px,#484848 52px,#6d6d6d 62px,#959595 70px,#aaaaaa 75px,#c7c7c7 80px)"></i><i style="left:784px;background:linear-gradient(#131313 0px,#1a1a1a 10px,#171717 24px,#2d2d2d 40px,#474747 52px,#707070 62px,#959595 70px,#afafaf 75px,#c4c4c4 80px)"></i><i style="left:786px;background:linear-gradient(#0b0b0b 0px,#171717 10px,#1c1c1c 24px,#2d2d2d 40px,#4c4c4c 52px,#6f6f6f 62px,#949494 70px,#aaaaaa 75px,#c0c0c0 80px)"></i><i style="left:788px;background:linear-gradient(#0e0e0e 0px,#171717 10px,#1b1b1b 24px,#2f2f2f 40px,#4a4a4a 52px,#6f6f6f 62px,#939393 70px,#adadad 75px,#c3c3c3 80px)"></i><i style="left:790px;background:linear-gradient(#0d0d0d 0px,#171717 10px,#181818 24px,#2c2c2c 40px,#4b4b4b 52px,#717171 62px,#949494 70px,#b1b1b1 75px,#c6c6c6 80px)"></i><i style="left:792px;background:linear-gradient(#0e0e0e 0px,#121212 10px,#1a1a1a 24px,#343434 40px,#4d4d4d 52px,#6f6f6f 62px,#969696 70px,#adadad 75px,#c6c6c6 80px)"></i><i style="left:794px;background:linear-gradient(#0f0f0f 0px,#191919 10px,#1d1d1d 24px,#313131 40px,#4c4c4c 52px,#6b6b6b 62px,#939393 70px,#aaaaaa 75px,#c9c9c9 80px)"></i><i style="left:796px;background:linear-gradient(#080808 0px,#161616 10px,#232323 24px,#2f2f2f 40px,#494949 52px,#6d6d6d 62px,#979797 70px,#acacac 75px,#c8c8c8 80px)"></i><i style="left:798px;background:linear-gradient(#0f0f0f 0px,#151515 10px,#252525 24px,#303030 40px,#4a4a4a 52px,#6c6c6c 62px,#959595 70px,#aeaeae 75px,#c9c9c9 80px)"></i><i style="left:800px;background:linear-gradient(#0f0f0f 0px,#121212 10px,#1d1d1d 24px,#2f2f2f 40px,#4b4b4b 52px,#696969 62px,#929292 70px,#ababab 75px,#c6c6c6 80px)"></i><i style="left:802px;background:linear-gradient(#0a0a0a 0px,#171717 10px,#1c1c1c 24px,#2d2d2d 40px,#4a4a4a 52px,#6b6b6b 62px,#969696 70px,#a5a5a5 75px,#c5c5c5 80px)"></i><i style="left:804px;background:linear-gradient(#070707 0px,#101010 10px,#1c1c1c 24px,#2b2b2b 40px,#4c4c4c 52px,#6b6b6b 62px,#999999 70px,#b0b0b0 75px,#cacaca 80px)"></i><i style="left:806px;background:linear-gradient(#060606 0px,#090909 10px,#1a1a1a 24px,#2a2a2a 40px,#4b4b4b 52px,#6e6e6e 62px,#909090 70px,#afafaf 75px,#c6c6c6 80px)"></i><i style="left:808px;background:linear-gradient(#090909 0px,#050505 10px,#151515 24px,#262626 40px,#4f4f4f 52px,#717171 62px,#969696 70px,#aeaeae 75px,#c8c8c8 80px)"></i><i style="left:810px;background:linear-gradient(#000000 0px,#0a0a0a 10px,#131313 24px,#292929 40px,#4b4b4b 52px,#696969 62px,#929292 70px,#afafaf 75px,#cbcbcb 80px)"></i><i style="left:812px;background:linear-gradient(#050505 0px,#040404 10px,#181818 24px,#262626 40px,#525252 52px,#6d6d6d 62px,#919191 70px,#b0b0b0 75px,#cccccc 80px)"></i><i style="left:814px;background:linear-gradient(#030303 0px,#0c0c0c 10px,#131313 24px,#2d2d2d 40px,#4b4b4b 52px,#686868 62px,#959595 70px,#b0b0b0 75px,#cdcdcd 80px)"></i><i style="left:816px;background:linear-gradient(#0c0c0c 0px,#090909 10px,#131313 24px,#272727 40px,#4b4b4b 52px,#6b6b6b 62px,#939393 70px,#a5a5a5 75px,#c7c7c7 80px)"></i><i style="left:818px;background:linear-gradient(#070707 0px,#0f0f0f 10px,#161616 24px,#272727 40px,#4e4e4e 52px,#696969 62px,#929292 70px,#a7a7a7 75px,#cbcbcb 80px)"></i><i style="left:820px;background:linear-gradient(#090909 0px,#040404 10px,#141414 24px,#2b2b2b 40px,#4e4e4e 52px,#6e6e6e 62px,#919191 70px,#ababab 75px,#c7c7c7 80px)"></i><i style="left:822px;background:linear-gradient(#0a0a0a 0px,#050505 10px,#101010 24px,#2c2c2c 40px,#494949 52px,#707070 62px,#949494 70px,#b0b0b0 75px,#cccccc 80px)"></i><i style="left:824px;background:linear-gradient(#090909 0px,#0a0a0a 10px,#111111 24px,#262626 40px,#4e4e4e 52px,#727272 62px,#989898 70px,#b4b4b4 75px,#c7c7c7 80px)"></i><i style="left:826px;background:linear-gradient(#080808 0px,#0a0a0a 10px,#141414 24px,#282828 40px,#494949 52px,#707070 62px,#909090 70px,#aeaeae 75px,#c2c2c2 80px)"></i><i style="left:828px;background:linear-gradient(#0b0b0b 0px,#040404 10px,#161616 24px,#232323 40px,#4b4b4b 52px,#717171 62px,#919191 70px,#adadad 75px,#c5c5c5 80px)"></i><i style="left:830px;background:linear-gradient(#010101 0px,#0b0b0b 10px,#171717 24px,#272727 40px,#4e4e4e 52px,#6b6b6b 62px,#888888 70px,#a4a4a4 75px,#bcbcbc 80px)"></i><i style="left:832px;background:linear-gradient(#101010 0px,#070707 10px,#1a1a1a 24px,#2f2f2f 40px,#464646 52px,#686868 62px,#848484 70px,#9a9a9a 75px,#b7b7b7 80px)"></i><i style="left:834px;background:linear-gradient(#0d0d0d 0px,#0e0e0e 10px,#161616 24px,#252525 40px,#4d4d4d 52px,#6a6a6a 62px,#7b7b7b 70px,#949494 75px,#a9a9a9 80px)"></i><i style="left:836px;background:linear-gradient(#0f0f0f 0px,#121212 10px,#1c1c1c 24px,#2a2a2a 40px,#4b4b4b 52px,#6b6b6b 62px,#797979 70px,#909090 75px,#aeaeae 80px)"></i><i style="left:838px;background:linear-gradient(#0a0a0a 0px,#101010 10px,#171717 24px,#313131 40px,#4d4d4d 52px,#656565 62px,#787878 70px,#939393 75px,#b0b0b0 80px)"></i><i style="left:840px;background:linear-gradient(#090909 0px,#0e0e0e 10px,#171717 24px,#2f2f2f 40px,#4b4b4b 52px,#6b6b6b 62px,#787878 70px,#959595 75px,#ababab 80px)"></i><i style="left:842px;background:linear-gradient(#050505 0px,#111111 10px,#171717 24px,#2e2e2e 40px,#4d4d4d 52px,#717171 62px,#7d7d7d 70px,#929292 75px,#acacac 80px)"></i><i style="left:844px;background:linear-gradient(#060606 0px,#141414 10px,#1a1a1a 24px,#323232 40px,#4b4b4b 52px,#676767 62px,#7f7f7f 70px,#949494 75px,#adadad 80px)"></i><i style="left:846px;background:linear-gradient(#0a0a0a 0px,#111111 10px,#1b1b1b 24px,#292929 40px,#4f4f4f 52px,#6c6c6c 62px,#787878 70px,#999999 75px,#b0b0b0 80px)"></i><i style="left:848px;background:linear-gradient(#090909 0px,#090909 10px,#191919 24px,#2f2f2f 40px,#4c4c4c 52px,#696969 62px,#777777 70px,#909090 75px,#aeaeae 80px)"></i><i style="left:850px;background:linear-gradient(#0c0c0c 0px,#121212 10px,#171717 24px,#2e2e2e 40px,#4e4e4e 52px,#6c6c6c 62px,#797979 70px,#9a9a9a 75px,#aeaeae 80px)"></i><i style="left:852px;background:linear-gradient(#0c0c0c 0px,#0d0d0d 10px,#191919 24px,#282828 40px,#4c4c4c 52px,#717171 62px,#808080 70px,#979797 75px,#afafaf 80px)"></i><i style="left:854px;background:linear-gradient(#0a0a0a 0px,#0d0d0d 10px,#191919 24px,#2f2f2f 40px,#4a4a4a 52px,#707070 62px,#777777 70px,#8e8e8e 75px,#aaaaaa 80px)"></i><i style="left:856px;background:linear-gradient(#050505 0px,#0b0b0b 10px,#1c1c1c 24px,#2d2d2d 40px,#4d4d4d 52px,#717171 62px,#7e7e7e 70px,#929292 75px,#b1b1b1 80px)"></i><i style="left:858px;background:linear-gradient(#0b0b0b 0px,#0f0f0f 10px,#1a1a1a 24px,#292929 40px,#4a4a4a 52px,#6d6d6d 62px,#7c7c7c 70px,#929292 75px,#adadad 80px)"></i><i style="left:860px;background:linear-gradient(#0d0d0d 0px,#131313 10px,#1b1b1b 24px,#313131 40px,#4b4b4b 52px,#6c6c6c 62px,#7b7b7b 70px,#929292 75px,#ababab 80px)"></i><i style="left:862px;background:linear-gradient(#0f0f0f 0px,#0e0e0e 10px,#161616 24px,#2f2f2f 40px,#525252 52px,#6d6d6d 62px,#7e7e7e 70px,#929292 75px,#ababab 80px)"></i><i style="left:864px;background:linear-gradient(#080808 0px,#0e0e0e 10px,#1f1f1f 24px,#2a2a2a 40px,#515151 52px,#6a6a6a 62px,#797979 70px,#969696 75px,#afafaf 80px)"></i><i style="left:866px;background:linear-gradient(#0b0b0b 0px,#0a0a0a 10px,#1a1a1a 24px,#2a2a2a 40px,#545454 52px,#6c6c6c 62px,#7a7a7a 70px,#909090 75px,#ababab 80px)"></i><i style="left:868px;background:linear-gradient(#060606 0px,#121212 10px,#181818 24px,#2f2f2f 40px,#4a4a4a 52px,#6c6c6c 62px,#7e7e7e 70px,#909090 75px,#a7a7a7 80px)"></i><i style="left:870px;background:linear-gradient(#0b0b0b 0px,#0b0b0b 10px,#181818 24px,#303030 40px,#494949 52px,#707070 62px,#787878 70px,#989898 75px,#b1b1b1 80px)"></i><i style="left:872px;background:linear-gradient(#080808 0px,#0e0e0e 10px,#161616 24px,#2e2e2e 40px,#505050 52px,#696969 62px,#7d7d7d 70px,#8f8f8f 75px,#aaaaaa 80px)"></i><i style="left:874px;background:linear-gradient(#040404 0px,#151515 10px,#191919 24px,#2e2e2e 40px,#4a4a4a 52px,#707070 62px,#737373 70px,#939393 75px,#b4b4b4 80px)"></i><i style="left:876px;background:linear-gradient(#090909 0px,#101010 10px,#1c1c1c 24px,#2c2c2c 40px,#4c4c4c 52px,#707070 62px,#797979 70px,#939393 75px,#aaaaaa 80px)"></i><i style="left:878px;background:linear-gradient(#0b0b0b 0px,#111111 10px,#1f1f1f 24px,#313131 40px,#4b4b4b 52px,#666666 62px,#797979 70px,#929292 75px,#a7a7a7 80px)"></i><i style="left:880px;background:linear-gradient(#040404 0px,#0e0e0e 10px,#1e1e1e 24px,#2d2d2d 40px,#4b4b4b 52px,#6e6e6e 62px,#797979 70px,#8e8e8e 75px,#a7a7a7 80px)"></i><i style="left:882px;background:linear-gradient(#080808 0px,#161616 10px,#1f1f1f 24px,#303030 40px,#484848 52px,#6b6b6b 62px,#777777 70px,#8c8c8c 75px,#ababab 80px)"></i><i style="left:884px;background:linear-gradient(#0b0b0b 0px,#121212 10px,#1e1e1e 24px,#313131 40px,#494949 52px,#6c6c6c 62px,#7c7c7c 70px,#8b8b8b 75px,#a6a6a6 80px)"></i><i style="left:886px;background:linear-gradient(#0d0d0d 0px,#111111 10px,#191919 24px,#2c2c2c 40px,#4e4e4e 52px,#707070 62px,#797979 70px,#8e8e8e 75px,#ababab 80px)"></i><i style="left:888px;background:linear-gradient(#070707 0px,#121212 10px,#191919 24px,#303030 40px,#4e4e4e 52px,#707070 62px,#727272 70px,#929292 75px,#a6a6a6 80px)"></i><i style="left:890px;background:linear-gradient(#070707 0px,#111111 10px,#171717 24px,#303030 40px,#4d4d4d 52px,#6d6d6d 62px,#818181 70px,#9d9d9d 75px,#bcbcbc 80px)"></i><i style="left:892px;background:linear-gradient(#101010 0px,#232323 20px,#3b3b3b 45px,#646464 65px,#989898 80px)"></i><i style="left:894px;background:linear-gradient(#141414 0px,#1f1f1f 20px,#393939 45px,#656565 65px,#9a9a9a 80px)"></i><i style="left:896px;background:linear-gradient(#4d4d4d 0px,#565656 30px,#696969 55px,#747474 68px,#8c8c8c 75px,#afafaf 80px)"></i><i style="left:898px;background:linear-gradient(#4a4a4a 0px,#525252 30px,#666666 55px,#737373 68px,#8c8c8c 75px,#b2b2b2 80px)"></i><i style="left:900px;background:linear-gradient(#4e4e4e 0px,#545454 30px,#666666 55px,#737373 68px,#8a8a8a 75px,#afafaf 80px)"></i><i style="left:902px;background:linear-gradient(#4d4d4d 0px,#555555 30px,#656565 55px,#717171 68px,#929292 75px,#b0b0b0 80px)"></i><i style="left:904px;background:linear-gradient(#b7b7b7 0px,#d1d1d1 30px,#efefef 50px,#ffffff 80px)"></i><i style="left:906px;background:linear-gradient(#bcbcbc 0px,#d3d3d3 30px,#f3f3f3 50px,#ffffff 80px)"></i><i style="left:908px;background:linear-gradient(#b7b7b7 0px,#d3d3d3 30px,#f1f1f1 50px,#fdfdfd 80px)"></i><i style="left:910px;background:linear-gradient(#b7b7b7 0px,#d3d3d3 30px,#f3f3f3 50px,#ffffff 80px)"></i><i style="left:912px;background:linear-gradient(#b2b2b2 0px,#d4d4d4 30px,#f8f8f8 50px,#ffffff 80px)"></i><i style="left:914px;background:linear-gradient(#8b8b8b 0px,#828282 25px,#9e9e9e 36px,#fcfcfc 37px,#ffffff 40px,#929292 41px,#a0a0a0 63px,#dcdcdc 64px,#d3d3d3 66px,#9e9e9e 67px,#cacaca 80px)"></i><i style="left:916px;background:linear-gradient(#888888 0px,#838383 25px,#9d9d9d 36px,#ffffff 37px,#fbfbfb 40px,#969696 41px,#a3a3a3 63px,#dadada 64px,#dadada 66px,#9e9e9e 67px,#c9c9c9 80px)"></i><i style="left:918px;background:linear-gradient(#8d8d8d 0px,#858585 25px,#9f9f9f 36px,#ffffff 37px,#ffffff 40px,#949494 41px,#a2a2a2 63px,#d5d5d5 64px,#d5d5d5 66px,#9d9d9d 67px,#cacaca 80px)"></i><i style="left:920px;background:linear-gradient(#8e8e8e 0px,#838383 25px,#a2a2a2 36px,#ffffff 37px,#ffffff 40px,#929292 41px,#9f9f9f 63px,#dadada 64px,#d6d6d6 66px,#9e9e9e 67px,#cdcdcd 80px)"></i><i style="left:922px;background:linear-gradient(#8c8c8c 0px,#888888 25px,#a1a1a1 36px,#fcfcfc 37px,#ffffff 40px,#919191 41px,#9f9f9f 63px,#d6d6d6 64px,#dbdbdb 66px,#9f9f9f 67px,#cecece 80px)"></i><i style="left:924px;background:linear-gradient(#8b8b8b 0px,#808080 25px,#a2a2a2 36px,#fefefe 37px,#ffffff 40px,#949494 41px,#9f9f9f 63px,#dddddd 64px,#d9d9d9 66px,#a1a1a1 67px,#c8c8c8 80px)"></i><i style="left:926px;background:linear-gradient(#ffffff 0px,#fefefe 50px,#ececec 80px)"></i><i style="left:928px;background:linear-gradient(#ffffff 0px,#ffffff 50px,#f1f1f1 80px)"></i><i style="left:930px;background:linear-gradient(#fafafa 0px,#ffffff 50px,#ebebeb 80px)"></i><i style="left:932px;background:linear-gradient(#ffffff 0px,#fdfdfd 50px,#eeeeee 80px)"></i><i style="left:934px;background:linear-gradient(#fdfdfd 0px,#ffffff 50px,#efefef 80px)"></i><i style="left:936px;background:linear-gradient(#fdfdfd 0px,#ffffff 50px,#e9e9e9 80px)"></i><i style="left:938px;background:linear-gradient(#ffffff 0px,#ffffff 50px,#ebebeb 80px)"></i><i style="left:940px;background:linear-gradient(#ffffff 0px,#f9f9f9 50px,#e8e8e8 80px)"></i><i style="left:942px;background:linear-gradient(#fbfbfb 0px,#fdfdfd 50px,#ededed 80px)"></i><i style="left:944px;background:linear-gradient(#fefefe 0px,#fefefe 50px,#eeeeee 80px)"></i><i style="left:946px;background:linear-gradient(#fdfdfd 0px,#fbfbfb 50px,#e9e9e9 80px)"></i><i style="left:948px;background:linear-gradient(#ffffff 0px,#f9f9f9 50px,#ececec 80px)"></i><i style="left:950px;background:linear-gradient(#ffffff 0px,#ffffff 50px,#ebebeb 80px)"></i><i style="left:952px;background:linear-gradient(#ffffff 0px,#ffffff 50px,#f0f0f0 80px)"></i><i style="left:954px;background:linear-gradient(#fcfcfc 0px,#ffffff 50px,#ededed 80px)"></i><i style="left:956px;background:linear-gradient(#ffffff 0px,#ffffff 50px,#ececec 80px)"></i><i style="left:958px;background:linear-gradient(#fbfbfb 0px,#ffffff 50px,#f1f1f1 80px)"></i><i style="left:960px;background:linear-gradient(#ffffff 0px,#ffffff 50px,#f3f3f3 80px)"></i><i style="left:962px;background:linear-gradient(#fcfcfc 0px,#ffffff 50px,#ebebeb 80px)"></i><i style="left:964px;background:linear-gradient(#ffffff 0px,#ffffff 50px,#f1f1f1 80px)"></i><i style="left:966px;background:linear-gradient(#fcfcfc 0px,#fdfdfd 50px,#e9e9e9 80px)"></i><i style="left:968px;background:linear-gradient(#ffffff 0px,#fdfdfd 50px,#eeeeee 80px)"></i><i style="left:970px;background:linear-gradient(#fcfcfc 0px,#fefefe 50px,#efefef 80px)"></i><i style="left:972px;background:linear-gradient(#cbcbcb 0px,#dadada 40px,#f3f3f3 80px)"></i><i style="left:974px;background:linear-gradient(#cbcbcb 0px,#d4d4d4 40px,#f4f4f4 80px)"></i><i style="left:976px;background:linear-gradient(#cccccc 0px,#dbdbdb 40px,#ededed 80px)"></i><i style="left:978px;background:linear-gradient(#b3b3b3 0px,#3c3c3c 1.5px,#404040 20px,#4f4f4f 31px,#868686 31.5px,#848484 32.5px,#5c5c5c 33px,#6d6d6d 36px,#fefefe 36.5px,#ffffff 41px,#757575 41.5px,#797979 55px,#8b8b8b 64px,#c5c5c5 64.5px,#c0c0c0 65.5px,#9d9d9d 66px,#ababab 72px,#cfcfcf 80px)"></i><i style="left:980px;background:linear-gradient(#bababa 0px,#414141 1.5px,#3f3f3f 20px,#444444 31px,#838383 31.5px,#7f7f7f 32.5px,#575757 33px,#6d6d6d 36px,#ffffff 36.5px,#fafafa 41px,#777777 41.5px,#808080 55px,#8a8a8a 64px,#c3c3c3 64.5px,#bdbdbd 65.5px,#9b9b9b 66px,#a9a9a9 72px,#cecece 80px)"></i><i style="left:982px;background:linear-gradient(#b9b9b9 0px,#3e3e3e 1.5px,#3f3f3f 20px,#4a4a4a 31px,#858585 31.5px,#838383 32.5px,#5d5d5d 33px,#696969 36px,#fbfbfb 36.5px,#fdfdfd 41px,#757575 41.5px,#7d7d7d 55px,#8c8c8c 64px,#c6c6c6 64.5px,#c0c0c0 65.5px,#9e9e9e 66px,#b0b0b0 72px,#cfcfcf 80px)"></i><i style="left:984px;background:linear-gradient(#b5b5b5 0px,#3f3f3f 1.5px,#434343 20px,#4d4d4d 31px,#848484 31.5px,#848484 32.5px,#5f5f5f 33px,#6d6d6d 36px,#fbfbfb 36.5px,#fefefe 41px,#757575 41.5px,#818181 55px,#8b8b8b 64px,#c0c0c0 64.5px,#c0c0c0 65.5px,#999999 66px,#adadad 72px,#cfcfcf 80px)"></i><i style="left:986px;background:linear-gradient(#b8b8b8 0px,#3f3f3f 1.5px,#414141 20px,#494949 31px,#818181 31.5px,#868686 32.5px,#5a5a5a 33px,#6c6c6c 36px,#fcfcfc 36.5px,#ffffff 41px,#707070 41.5px,#7e7e7e 55px,#8a8a8a 64px,#c3c3c3 64.5px,#c2c2c2 65.5px,#9d9d9d 66px,#afafaf 72px,#d1d1d1 80px)"></i><i style="left:988px;background:linear-gradient(#b8b8b8 0px,#444444 1.5px,#424242 20px,#4b4b4b 31px,#858585 31.5px,#838383 32.5px,#5c5c5c 33px,#6d6d6d 36px,#ffffff 36.5px,#fdfdfd 41px,#717171 41.5px,#7f7f7f 55px,#8b8b8b 64px,#c4c4c4 64.5px,#c0c0c0 65.5px,#9d9d9d 66px,#afafaf 72px,#cfcfcf 80px)"></i><i style="left:990px;background:linear-gradient(#b7b7b7 0px,#464646 1.5px,#454545 20px,#4d4d4d 31px,#858585 31.5px,#828282 32.5px,#5d5d5d 33px,#6b6b6b 36px,#ffffff 36.5px,#fdfdfd 41px,#757575 41.5px,#7e7e7e 55px,#8c8c8c 64px,#c5c5c5 64.5px,#c2c2c2 65.5px,#999999 66px,#aaaaaa 72px,#cccccc 80px)"></i><i style="left:992px;background:linear-gradient(#b5b5b5 0px,#434343 1.5px,#434343 20px,#4a4a4a 31px,#858585 31.5px,#828282 32.5px,#585858 33px,#676767 36px,#fcfcfc 36.5px,#ffffff 41px,#717171 41.5px,#828282 55px,#8f8f8f 64px,#c1c1c1 64.5px,#c1c1c1 65.5px,#9c9c9c 66px,#adadad 72px,#d2d2d2 80px)"></i><i style="left:994px;background:linear-gradient(#b7b7b7 0px,#444444 1.5px,#454545 20px,#4d4d4d 31px,#858585 31.5px,#848484 32.5px,#5c5c5c 33px,#686868 36px,#ffffff 36.5px,#ffffff 41px,#727272 41.5px,#848484 55px,#898989 64px,#bfbfbf 64.5px,#c2c2c2 65.5px,#999999 66px,#ababab 72px,#cdcdcd 80px)"></i><i style="left:996px;background:linear-gradient(#b5b5b5 0px,#414141 1.5px,#424242 20px,#4f4f4f 31px,#868686 31.5px,#878787 32.5px,#5d5d5d 33px,#696969 36px,#ffffff 36.5px,#fdfdfd 41px,#737373 41.5px,#838383 55px,#8e8e8e 64px,#c2c2c2 64.5px,#c3c3c3 65.5px,#a0a0a0 66px,#a9a9a9 72px,#d0d0d0 80px)"></i><i style="left:998px;background:linear-gradient(#b4b4b4 0px,#424242 1.5px,#404040 20px,#4f4f4f 31px,#858585 31.5px,#828282 32.5px,#5b5b5b 33px,#676767 36px,#fefefe 36.5px,#ffffff 41px,#757575 41.5px,#7a7a7a 55px,#8b8b8b 64px,#c2c2c2 64.5px,#c2c2c2 65.5px,#a0a0a0 66px,#a9a9a9 72px,#d2d2d2 80px)"></i><i style="left:1000px;background:linear-gradient(#b5b5b5 0px,#424242 1.5px,#434343 20px,#4e4e4e 31px,#828282 31.5px,#848484 32.5px,#585858 33px,#676767 36px,#ffffff 36.5px,#fefefe 41px,#717171 41.5px,#7d7d7d 55px,#8c8c8c 64px,#c5c5c5 64.5px,#c4c4c4 65.5px,#9f9f9f 66px,#a8a8a8 72px,#d0d0d0 80px)"></i><i style="left:1002px;background:linear-gradient(#b8b8b8 0px,#434343 1.5px,#434343 20px,#4b4b4b 31px,#888888 31.5px,#888888 32.5px,#5b5b5b 33px,#686868 36px,#ffffff 36.5px,#fdfdfd 41px,#787878 41.5px,#848484 55px,#898989 64px,#c2c2c2 64.5px,#c0c0c0 65.5px,#9f9f9f 66px,#aeaeae 72px,#d5d5d5 80px)"></i><i style="left:1004px;background:linear-gradient(#b8b8b8 0px,#424242 1.5px,#454545 20px,#4b4b4b 31px,#838383 31.5px,#8a8a8a 32.5px,#595959 33px,#696969 36px,#fefefe 36.5px,#fcfcfc 41px,#6f6f6f 41.5px,#828282 55px,#8a8a8a 64px,#c0c0c0 64.5px,#c0c0c0 65.5px,#9b9b9b 66px,#aaaaaa 72px,#d1d1d1 80px)"></i><i style="left:1006px;background:linear-gradient(#bdbdbd 0px,#444444 1.5px,#444444 20px,#484848 31px,#848484 31.5px,#818181 32.5px,#5d5d5d 33px,#6a6a6a 36px,#fefefe 36.5px,#fefefe 41px,#737373 41.5px,#7b7b7b 55px,#8d8d8d 64px,#bebebe 64.5px,#bebebe 65.5px,#9d9d9d 66px,#ababab 72px,#d1d1d1 80px)"></i><i style="left:1008px;background:linear-gradient(#bababa 0px,#424242 1.5px,#424242 20px,#4c4c4c 31px,#868686 31.5px,#7f7f7f 32.5px,#5c5c5c 33px,#686868 36px,#fbfbfb 36.5px,#fefefe 41px,#747474 41.5px,#808080 55px,#8e8e8e 64px,#bbbbbb 64.5px,#c1c1c1 65.5px,#a2a2a2 66px,#afafaf 72px,#d4d4d4 80px)"></i><i style="left:1010px;background:linear-gradient(#d6d6d6 0px,#5d5d5d 1.5px,#5d5d5d 20px,#6c6c6c 31px,#a5a5a5 31.5px,#a1a1a1 32.5px,#797979 33px,#8a8a8a 36px,#ffffff 36.5px,#ffffff 41px,#979797 41.5px,#a3a3a3 55px,#aaaaaa 64px,#e4e4e4 64.5px,#dedede 65.5px,#bababa 66px,#c6c6c6 72px,#f1f1f1 80px)"></i><i style="left:1012px;background:linear-gradient(#b6b6b6 0px,#484848 1.5px,#424242 20px,#4c4c4c 31px,#7f7f7f 31.5px,#888888 32.5px,#5a5a5a 33px,#6a6a6a 36px,#f9f9f9 36.5px,#ffffff 41px,#777777 41.5px,#7d7d7d 55px,#8c8c8c 64px,#c2c2c2 64.5px,#c4c4c4 65.5px,#9e9e9e 66px,#b1b1b1 72px,#d0d0d0 80px)"></i><i style="left:1014px;background:linear-gradient(#b5b5b5 0px,#404040 1.5px,#3b3b3b 20px,#4a4a4a 31px,#878787 31.5px,#858585 32.5px,#595959 33px,#6b6b6b 36px,#f9f9f9 36.5px,#fefefe 41px,#767676 41.5px,#818181 55px,#8a8a8a 64px,#c3c3c3 64.5px,#c6c6c6 65.5px,#9c9c9c 66px,#afafaf 72px,#cccccc 80px)"></i><i style="left:1016px;background:linear-gradient(#b2b2b2 0px,#434343 1.5px,#424242 20px,#4c4c4c 31px,#828282 31.5px,#838383 32.5px,#5d5d5d 33px,#6f6f6f 36px,#fefefe 36.5px,#fafafa 41px,#787878 41.5px,#808080 55px,#8d8d8d 64px,#c2c2c2 64.5px,#c7c7c7 65.5px,#9e9e9e 66px,#aeaeae 72px,#cccccc 80px)"></i><i style="left:1018px;background:linear-gradient(#b5b5b5 0px,#404040 1.5px,#424242 20px,#4d4d4d 31px,#828282 31.5px,#888888 32.5px,#585858 33px,#696969 36px,#ffffff 36.5px,#fbfbfb 41px,#767676 41.5px,#808080 55px,#8b8b8b 64px,#c6c6c6 64.5px,#c1c1c1 65.5px,#9e9e9e 66px,#aaaaaa 72px,#cccccc 80px)"></i><i style="left:1020px;background:linear-gradient(#b5b5b5 0px,#414141 1.5px,#414141 20px,#4e4e4e 31px,#7e7e7e 31.5px,#818181 32.5px,#575757 33px,#6e6e6e 36px,#fdfdfd 36.5px,#fdfdfd 41px,#727272 41.5px,#818181 55px,#8b8b8b 64px,#c2c2c2 64.5px,#bcbcbc 65.5px,#a0a0a0 66px,#aeaeae 72px,#d2d2d2 80px)"></i><i style="left:1022px;background:linear-gradient(#bababa 0px,#414141 1.5px,#414141 20px,#4e4e4e 31px,#858585 31.5px,#838383 32.5px,#5b5b5b 33px,#696969 36px,#ffffff 36.5px,#ffffff 41px,#757575 41.5px,#848484 55px,#888888 64px,#c1c1c1 64.5px,#c6c6c6 65.5px,#9c9c9c 66px,#a9a9a9 72px,#d4d4d4 80px)"></i><i style="left:1024px;background:linear-gradient(#b8b8b8 0px,#3f3f3f 1.5px,#444444 20px,#494949 31px,#818181 31.5px,#848484 32.5px,#5a5a5a 33px,#686868 36px,#fdfdfd 36.5px,#fcfcfc 41px,#757575 41.5px,#7f7f7f 55px,#8e8e8e 64px,#c0c0c0 64.5px,#bebebe 65.5px,#9a9a9a 66px,#acacac 72px,#d4d4d4 80px)"></i><i style="left:1026px;background:linear-gradient(#b9b9b9 0px,#404040 1.5px,#444444 20px,#494949 31px,#878787 31.5px,#838383 32.5px,#5d5d5d 33px,#6c6c6c 36px,#fefefe 36.5px,#ffffff 41px,#727272 41.5px,#7f7f7f 55px,#8e8e8e 64px,#cccccc 64.5px,#c3c3c3 65.5px,#9e9e9e 66px,#aaaaaa 72px,#d3d3d3 80px)"></i><i style="left:1028px;background:linear-gradient(#b3b3b3 0px,#404040 1.5px,#434343 20px,#494949 31px,#888888 31.5px,#878787 32.5px,#5a5a5a 33px,#696969 36px,#fbfbfb 36.5px,#fbfbfb 41px,#767676 41.5px,#808080 55px,#8d8d8d 64px,#c2c2c2 64.5px,#c0c0c0 65.5px,#9e9e9e 66px,#a9a9a9 72px,#d1d1d1 80px)"></i><i style="left:1030px;background:linear-gradient(#bbbbbb 0px,#454545 1.5px,#404040 20px,#4b4b4b 31px,#888888 31.5px,#898989 32.5px,#575757 33px,#696969 36px,#ffffff 36.5px,#ffffff 41px,#737373 41.5px,#818181 55px,#8b8b8b 64px,#c7c7c7 64.5px,#c2c2c2 65.5px,#9d9d9d 66px,#acacac 72px,#d3d3d3 80px)"></i><i style="left:1032px;background:linear-gradient(#b9b9b9 0px,#3f3f3f 1.5px,#424242 20px,#484848 31px,#828282 31.5px,#818181 32.5px,#585858 33px,#696969 36px,#fcfcfc 36.5px,#ffffff 41px,#777777 41.5px,#7e7e7e 55px,#898989 64px,#c3c3c3 64.5px,#bcbcbc 65.5px,#999999 66px,#afafaf 72px,#d2d2d2 80px)"></i><i style="left:1034px;background:linear-gradient(#b9b9b9 0px,#414141 1.5px,#3e3e3e 20px,#4b4b4b 31px,#858585 31.5px,#828282 32.5px,#595959 33px,#676767 36px,#fbfbfb 36.5px,#ffffff 41px,#767676 41.5px,#7c7c7c 55px,#898989 64px,#c0c0c0 64.5px,#c3c3c3 65.5px,#9a9a9a 66px,#acacac 72px,#cbcbcb 80px)"></i><i style="left:1036px;background:linear-gradient(#b4b4b4 0px,#434343 1.5px,#444444 20px,#494949 31px,#828282 31.5px,#868686 32.5px,#5a5a5a 33px,#696969 36px,#ffffff 36.5px,#ffffff 41px,#787878 41.5px,#818181 55px,#8a8a8a 64px,#c1c1c1 64.5px,#c1c1c1 65.5px,#9a9a9a 66px,#aaaaaa 72px,#d3d3d3 80px)"></i><i style="left:1038px;background:linear-gradient(#b3b3b3 0px,#444444 1.5px,#424242 20px,#4c4c4c 31px,#858585 31.5px,#858585 32.5px,#5e5e5e 33px,#696969 36px,#fefefe 36.5px,#fefefe 41px,#7a7a7a 41.5px,#818181 55px,#898989 64px,#c0c0c0 64.5px,#bfbfbf 65.5px,#9e9e9e 66px,#adadad 72px,#d6d6d6 80px)"></i><i style="left:1040px;background:linear-gradient(#b2b2b2 0px,#444444 1.5px,#434343 20px,#4a4a4a 31px,#848484 31.5px,#838383 32.5px,#5b5b5b 33px,#6d6d6d 36px,#fbfbfb 36.5px,#ffffff 41px,#747474 41.5px,#838383 55px,#8d8d8d 64px,#c4c4c4 64.5px,#c3c3c3 65.5px,#a0a0a0 66px,#adadad 72px,#cecece 80px)"></i><i style="left:1042px;background:linear-gradient(#9a9a9a 0px,#9f9f9f 30px,#eaeaea 36px,#e0e0e0 41px,#9d9d9d 50px,#b5b5b5 72px,#eeeeee 74px,#fefefe 80px)"></i><i style="left:1044px;background:linear-gradient(#9e9e9e 0px,#a1a1a1 30px,#e3e3e3 36px,#e9e9e9 41px,#a1a1a1 50px,#b4b4b4 72px,#f3f3f3 74px,#ffffff 80px)"></i><i style="left:1046px;background:linear-gradient(#b5b5b5 0px,#404040 1.5px,#444444 20px,#4c4c4c 31px,#898989 31.5px,#838383 32.5px,#555555 33px,#6a6a6a 36px,#fefefe 36.5px,#ffffff 41px,#757575 41.5px,#7d7d7d 55px,#8f8f8f 64px,#c0c0c0 64.5px,#c3c3c3 65.5px,#9d9d9d 66px,#aaaaaa 72px,#d4d4d4 80px)"></i><i style="left:1048px;background:linear-gradient(#b1b1b1 0px,#404040 1.5px,#434343 20px,#4b4b4b 31px,#868686 31.5px,#848484 32.5px,#5a5a5a 33px,#707070 36px,#fcfcfc 36.5px,#fcfcfc 41px,#727272 41.5px,#7d7d7d 55px,#8d8d8d 64px,#c3c3c3 64.5px,#c1c1c1 65.5px,#9c9c9c 66px,#afafaf 72px,#cccccc 80px)"></i><i style="left:1050px;background:linear-gradient(#b6b6b6 0px,#414141 1.5px,#404040 20px,#4c4c4c 31px,#828282 31.5px,#828282 32.5px,#606060 33px,#6c6c6c 36px,#fefefe 36.5px,#fbfbfb 41px,#777777 41.5px,#818181 55px,#8f8f8f 64px,#c7c7c7 64.5px,#c1c1c1 65.5px,#9e9e9e 66px,#adadad 72px,#c8c8c8 80px)"></i><i style="left:1052px;background:linear-gradient(#b4b4b4 0px,#424242 1.5px,#434343 20px,#4b4b4b 31px,#878787 31.5px,#878787 32.5px,#5a5a5a 33px,#6e6e6e 36px,#fefefe 36.5px,#fbfbfb 41px,#727272 41.5px,#838383 55px,#8b8b8b 64px,#c0c0c0 64.5px,#c2c2c2 65.5px,#9c9c9c 66px,#b0b0b0 72px,#d3d3d3 80px)"></i><i style="left:1054px;background:linear-gradient(#bababa 0px,#434343 1.5px,#404040 20px,#4c4c4c 31px,#868686 31.5px,#838383 32.5px,#636363 33px,#6a6a6a 36px,#f7f7f7 36.5px,#fbfbfb 41px,#777777 41.5px,#7f7f7f 55px,#8b8b8b 64px,#c2c2c2 64.5px,#c3c3c3 65.5px,#a0a0a0 66px,#acacac 72px,#d2d2d2 80px)"></i><i style="left:1056px;background:linear-gradient(#b9b9b9 0px,#444444 1.5px,#3a3a3a 20px,#4a4a4a 31px,#828282 31.5px,#848484 32.5px,#5c5c5c 33px,#6d6d6d 36px,#f8f8f8 36.5px,#f6f6f6 41px,#757575 41.5px,#838383 55px,#8a8a8a 64px,#c2c2c2 64.5px,#c5c5c5 65.5px,#9e9e9e 66px,#a8a8a8 72px,#d2d2d2 80px)"></i><i style="left:1058px;background:linear-gradient(#b6b6b6 0px,#424242 1.5px,#444444 20px,#4d4d4d 31px,#838383 31.5px,#868686 32.5px,#5c5c5c 33px,#6b6b6b 36px,#f6f6f6 36.5px,#f6f6f6 41px,#747474 41.5px,#7e7e7e 55px,#8c8c8c 64px,#bfbfbf 64.5px,#bebebe 65.5px,#a1a1a1 66px,#acacac 72px,#d1d1d1 80px)"></i><i style="left:1060px;background:linear-gradient(#b7b7b7 0px,#424242 1.5px,#424242 20px,#4c4c4c 31px,#828282 31.5px,#868686 32.5px,#5a5a5a 33px,#6d6d6d 36px,#efefef 36.5px,#f1f1f1 41px,#777777 41.5px,#7f7f7f 55px,#8a8a8a 64px,#c2c2c2 64.5px,#bfbfbf 65.5px,#9e9e9e 66px,#a7a7a7 72px,#cfcfcf 80px)"></i><i style="left:1062px;background:linear-gradient(#b5b5b5 0px,#434343 1.5px,#444444 20px,#4a4a4a 31px,#888888 31.5px,#838383 32.5px,#565656 33px,#656565 36px,#f6f6f6 36.5px,#f2f2f2 41px,#737373 41.5px,#7d7d7d 55px,#898989 64px,#c5c5c5 64.5px,#c1c1c1 65.5px,#a2a2a2 66px,#acacac 72px,#cbcbcb 80px)"></i><i style="left:1064px;background:linear-gradient(#b9b9b9 0px,#414141 1.5px,#414141 20px,#505050 31px,#838383 31.5px,#878787 32.5px,#5b5b5b 33px,#696969 36px,#f2f2f2 36.5px,#f0f0f0 41px,#787878 41.5px,#818181 55px,#8c8c8c 64px,#c3c3c3 64.5px,#c3c3c3 65.5px,#9d9d9d 66px,#afafaf 72px,#d0d0d0 80px)"></i><i style="left:1066px;background:linear-gradient(#b9b9b9 0px,#3f3f3f 1.5px,#424242 20px,#4d4d4d 31px,#828282 31.5px,#838383 32.5px,#5a5a5a 33px,#6c6c6c 36px,#eeeeee 36.5px,#f1f1f1 41px,#797979 41.5px,#808080 55px,#888888 64px,#c2c2c2 64.5px,#c4c4c4 65.5px,#9d9d9d 66px,#b0b0b0 72px,#d2d2d2 80px)"></i><i style="left:1068px;background:linear-gradient(#b8b8b8 0px,#414141 1.5px,#414141 20px,#4b4b4b 31px,#848484 31.5px,#858585 32.5px,#5c5c5c 33px,#6a6a6a 36px,#eeeeee 36.5px,#efefef 41px,#717171 41.5px,#7d7d7d 55px,#8a8a8a 64px,#c1c1c1 64.5px,#c1c1c1 65.5px,#9d9d9d 66px,#ababab 72px,#d2d2d2 80px)"></i><i style="left:1070px;background:linear-gradient(#b8b8b8 0px,#3e3e3e 1.5px,#424242 20px,#494949 31px,#888888 31.5px,#838383 32.5px,#5a5a5a 33px,#6b6b6b 36px,#ececec 36.5px,#ededed 41px,#797979 41.5px,#808080 55px,#8e8e8e 64px,#c4c4c4 64.5px,#bfbfbf 65.5px,#a2a2a2 66px,#afafaf 72px,#d3d3d3 80px)"></i><i style="left:1072px;background:linear-gradient(#b5b5b5 0px,#444444 1.5px,#434343 20px,#4b4b4b 31px,#8a8a8a 31.5px,#868686 32.5px,#5b5b5b 33px,#6b6b6b 36px,#eeeeee 36.5px,#eeeeee 41px,#767676 41.5px,#828282 55px,#909090 64px,#bebebe 64.5px,#c0c0c0 65.5px,#9b9b9b 66px,#adadad 72px,#d4d4d4 80px)"></i><i style="left:1074px;background:linear-gradient(#b9b9b9 0px,#3f3f3f 1.5px,#414141 20px,#4f4f4f 31px,#838383 31.5px,#848484 32.5px,#5c5c5c 33px,#666666 36px,#ececec 36.5px,#ebebeb 41px,#767676 41.5px,#7d7d7d 55px,#8a8a8a 64px,#c0c0c0 64.5px,#c2c2c2 65.5px,#9e9e9e 66px,#adadad 72px,#d5d5d5 80px)"></i><i style="left:1076px;background:linear-gradient(#bababa 0px,#404040 1.5px,#404040 20px,#505050 31px,#838383 31.5px,#888888 32.5px,#5f5f5f 33px,#696969 36px,#e8e8e8 36.5px,#e9e9e9 41px,#737373 41.5px,#7d7d7d 55px,#8b8b8b 64px,#c4c4c4 64.5px,#c0c0c0 65.5px,#9d9d9d 66px,#acacac 72px,#cdcdcd 80px)"></i><i style="left:1078px;background:linear-gradient(#bbbbbb 0px,#3c3c3c 1.5px,#404040 20px,#4d4d4d 31px,#818181 31.5px,#868686 32.5px,#5f5f5f 33px,#686868 36px,#e8e8e8 36.5px,#e4e4e4 41px,#767676 41.5px,#7f7f7f 55px,#8c8c8c 64px,#c5c5c5 64.5px,#c3c3c3 65.5px,#a1a1a1 66px,#afafaf 72px,#cecece 80px)"></i><i style="left:1080px;background:linear-gradient(#b8b8b8 0px,#434343 1.5px,#3e3e3e 20px,#4f4f4f 31px,#848484 31.5px,#858585 32.5px,#595959 33px,#6b6b6b 36px,#e7e7e7 36.5px,#e5e5e5 41px,#757575 41.5px,#7a7a7a 55px,#8f8f8f 64px,#bfbfbf 64.5px,#bcbcbc 65.5px,#9b9b9b 66px,#ababab 72px,#d2d2d2 80px)"></i><i style="left:1082px;background:linear-gradient(#d3d3d3 0px,#616161 1.5px,#5e5e5e 20px,#707070 31px,#a4a4a4 31.5px,#a8a8a8 32.5px,#777777 33px,#8b8b8b 36px,#ffffff 36.5px,#ffffff 41px,#959595 41.5px,#9a9a9a 55px,#a7a7a7 64px,#dddddd 64.5px,#dcdcdc 65.5px,#bababa 66px,#c9c9c9 72px,#ececec 80px)"></i><i style="left:1084px;background:linear-gradient(#b7b7b7 0px,#434343 1.5px,#3e3e3e 20px,#4b4b4b 31px,#848484 31.5px,#848484 32.5px,#5a5a5a 33px,#6d6d6d 36px,#e5e5e5 36.5px,#e5e5e5 41px,#747474 41.5px,#848484 55px,#909090 64px,#c0c0c0 64.5px,#c1c1c1 65.5px,#a1a1a1 66px,#ababab 72px,#d2d2d2 80px)"></i><i style="left:1086px;background:linear-gradient(#b7b7b7 0px,#404040 1.5px,#414141 20px,#484848 31px,#838383 31.5px,#7f7f7f 32.5px,#616161 33px,#6e6e6e 36px,#e5e5e5 36.5px,#e2e2e2 41px,#777777 41.5px,#828282 55px,#8e8e8e 64px,#c4c4c4 64.5px,#bfbfbf 65.5px,#9f9f9f 66px,#acacac 72px,#cecece 80px)"></i><i style="left:1088px;background:linear-gradient(#b4b4b4 0px,#434343 1.5px,#444444 20px,#494949 31px,#898989 31.5px,#888888 32.5px,#5a5a5a 33px,#696969 36px,#e0e0e0 36.5px,#e3e3e3 41px,#747474 41.5px,#7c7c7c 55px,#8d8d8d 64px,#bcbcbc 64.5px,#c2c2c2 65.5px,#a1a1a1 66px,#aeaeae 72px,#d3d3d3 80px)"></i><i style="left:1090px;background:linear-gradient(#b8b8b8 0px,#444444 1.5px,#424242 20px,#4a4a4a 31px,#848484 31.5px,#848484 32.5px,#5f5f5f 33px,#6f6f6f 36px,#e0e0e0 36.5px,#dddddd 41px,#737373 41.5px,#7f7f7f 55px,#8f8f8f 64px,#c2c2c2 64.5px,#c1c1c1 65.5px,#9c9c9c 66px,#afafaf 72px,#d1d1d1 80px)"></i><i style="left:1092px;background:linear-gradient(#b7b7b7 0px,#424242 1.5px,#464646 20px,#4c4c4c 31px,#888888 31.5px,#878787 32.5px,#5b5b5b 33px,#6d6d6d 36px,#dddddd 36.5px,#dbdbdb 41px,#747474 41.5px,#7d7d7d 55px,#8d8d8d 64px,#c1c1c1 64.5px,#c3c3c3 65.5px,#a0a0a0 66px,#a5a5a5 72px,#d1d1d1 80px)"></i><i style="left:1094px;background:linear-gradient(#b3b3b3 0px,#424242 1.5px,#404040 20px,#4c4c4c 31px,#888888 31.5px,#808080 32.5px,#5c5c5c 33px,#6a6a6a 36px,#d7d7d7 36.5px,#dddddd 41px,#757575 41.5px,#7e7e7e 55px,#8a8a8a 64px,#c9c9c9 64.5px,#c0c0c0 65.5px,#999999 66px,#ababab 72px,#d0d0d0 80px)"></i><i style="left:1096px;background:linear-gradient(#b6b6b6 0px,#424242 1.5px,#3f3f3f 20px,#4d4d4d 31px,#838383 31.5px,#818181 32.5px,#595959 33px,#6a6a6a 36px,#dddddd 36.5px,#dcdcdc 41px,#747474 41.5px,#7f7f7f 55px,#8c8c8c 64px,#c6c6c6 64.5px,#c0c0c0 65.5px,#9f9f9f 66px,#afafaf 72px,#cecece 80px)"></i><i style="left:1098px;background:linear-gradient(#b8b8b8 0px,#424242 1.5px,#414141 20px,#4d4d4d 31px,#878787 31.5px,#878787 32.5px,#5b5b5b 33px,#6b6b6b 36px,#dfdfdf 36.5px,#d6d6d6 41px,#757575 41.5px,#818181 55px,#8c8c8c 64px,#c3c3c3 64.5px,#c2c2c2 65.5px,#a0a0a0 66px,#b0b0b0 72px,#d0d0d0 80px)"></i><i style="left:1100px;background:linear-gradient(#b8b8b8 0px,#424242 1.5px,#414141 20px,#4c4c4c 31px,#818181 31.5px,#868686 32.5px,#606060 33px,#6f6f6f 36px,#dbdbdb 36.5px,#d5d5d5 41px,#797979 41.5px,#7d7d7d 55px,#8c8c8c 64px,#c6c6c6 64.5px,#bfbfbf 65.5px,#a0a0a0 66px,#aeaeae 72px,#d0d0d0 80px)"></i><i style="left:1102px;background:linear-gradient(#b5b5b5 0px,#434343 1.5px,#414141 20px,#4f4f4f 31px,#878787 31.5px,#818181 32.5px,#5a5a5a 33px,#6a6a6a 36px,#d3d3d3 36.5px,#d3d3d3 41px,#757575 41.5px,#7e7e7e 55px,#888888 64px,#c0c0c0 64.5px,#c3c3c3 65.5px,#9b9b9b 66px,#ababab 72px,#d5d5d5 80px)"></i><i style="left:1104px;background:linear-gradient(#bababa 0px,#3e3e3e 1.5px,#3e3e3e 20px,#4d4d4d 31px,#818181 31.5px,#838383 32.5px,#5a5a5a 33px,#6c6c6c 36px,#cecece 36.5px,#cfcfcf 41px,#727272 41.5px,#828282 55px,#8b8b8b 64px,#bdbdbd 64.5px,#c3c3c3 65.5px,#9f9f9f 66px,#acacac 72px,#d0d0d0 80px)"></i><i style="left:1106px;background:linear-gradient(#b8b8b8 0px,#454545 1.5px,#424242 20px,#4d4d4d 31px,#848484 31.5px,#838383 32.5px,#595959 33px,#6b6b6b 36px,#d3d3d3 36.5px,#d3d3d3 41px,#777777 41.5px,#808080 55px,#8e8e8e 64px,#bdbdbd 64.5px,#c3c3c3 65.5px,#9c9c9c 66px,#ababab 72px,#cecece 80px)"></i><i style="left:1108px;background:linear-gradient(#bababa 0px,#444444 1.5px,#404040 20px,#494949 31px,#848484 31.5px,#838383 32.5px,#606060 33px,#676767 36px,#cdcdcd 36.5px,#d1d1d1 41px,#757575 41.5px,#7f7f7f 55px,#8e8e8e 64px,#c7c7c7 64.5px,#c0c0c0 65.5px,#9c9c9c 66px,#a8a8a8 72px,#d1d1d1 80px)"></i><i style="left:1110px;background:linear-gradient(#b9b9b9 0px,#414141 1.5px,#454545 20px,#4c4c4c 31px,#888888 31.5px,#858585 32.5px,#595959 33px,#696969 36px,#cdcdcd 36.5px,#cccccc 41px,#757575 41.5px,#818181 55px,#919191 64px,#c1c1c1 64.5px,#c1c1c1 65.5px,#9b9b9b 66px,#afafaf 72px,#d2d2d2 80px)"></i><i style="left:1112px;background:linear-gradient(#b6b6b6 0px,#444444 1.5px,#434343 20px,#474747 31px,#868686 31.5px,#848484 32.5px,#5a5a5a 33px,#6a6a6a 36px,#d4d4d4 36.5px,#d3d3d3 41px,#797979 41.5px,#7c7c7c 55px,#8a8a8a 64px,#c4c4c4 64.5px,#bebebe 65.5px,#9c9c9c 66px,#a8a8a8 72px,#d5d5d5 80px)"></i><i style="left:1114px;background:linear-gradient(#bababa 0px,#434343 1.5px,#424242 20px,#4b4b4b 31px,#838383 31.5px,#868686 32.5px,#595959 33px,#6e6e6e 36px,#cccccc 36.5px,#cbcbcb 41px,#787878 41.5px,#7f7f7f 55px,#8d8d8d 64px,#c0c0c0 64.5px,#bcbcbc 65.5px,#9f9f9f 66px,#a9a9a9 72px,#d3d3d3 80px)"></i><i style="left:1116px;background:linear-gradient(#b3b3b3 0px,#3d3d3d 1.5px,#434343 20px,#4d4d4d 31px,#848484 31.5px,#818181 32.5px,#5e5e5e 33px,#676767 36px,#cbcbcb 36.5px,#cacaca 41px,#747474 41.5px,#818181 55px,#8a8a8a 64px,#c3c3c3 64.5px,#c3c3c3 65.5px,#999999 66px,#aaaaaa 72px,#d0d0d0 80px)"></i><i style="left:1118px;background:linear-gradient(#b6b6b6 0px,#434343 1.5px,#3d3d3d 20px,#4e4e4e 31px,#868686 31.5px,#848484 32.5px,#585858 33px,#6b6b6b 36px,#c9c9c9 36.5px,#cccccc 41px,#757575 41.5px,#818181 55px,#8b8b8b 64px,#c5c5c5 64.5px,#bbbbbb 65.5px,#9b9b9b 66px,#aeaeae 72px,#cdcdcd 80px)"></i><i style="left:1120px;background:linear-gradient(#b9b9b9 0px,#3f3f3f 1.5px,#424242 20px,#4a4a4a 31px,#838383 31.5px,#858585 32.5px,#5b5b5b 33px,#6a6a6a 36px,#cfcfcf 36.5px,#c9c9c9 41px,#727272 41.5px,#818181 55px,#8e8e8e 64px,#c4c4c4 64.5px,#c6c6c6 65.5px,#9b9b9b 66px,#b0b0b0 72px,#d4d4d4 80px)"></i><i style="left:1122px;background:linear-gradient(#b7b7b7 0px,#424242 1.5px,#3a3a3a 20px,#4b4b4b 31px,#898989 31.5px,#808080 32.5px,#5a5a5a 33px,#6b6b6b 36px,#c9c9c9 36.5px,#cccccc 41px,#707070 41.5px,#7f7f7f 55px,#8e8e8e 64px,#bebebe 64.5px,#c1c1c1 65.5px,#a2a2a2 66px,#b0b0b0 72px,#d2d2d2 80px)"></i><i style="left:1124px;background:linear-gradient(#b0b0b0 0px,#414141 1.5px,#434343 20px,#4b4b4b 31px,#848484 31.5px,#8c8c8c 32.5px,#5b5b5b 33px,#686868 36px,#c7c7c7 36.5px,#c6c6c6 41px,#747474 41.5px,#7f7f7f 55px,#8e8e8e 64px,#c2c2c2 64.5px,#bebebe 65.5px,#9d9d9d 66px,#aeaeae 72px,#cfcfcf 80px)"></i><i style="left:1126px;background:linear-gradient(#bababa 0px,#444444 1.5px,#3f3f3f 20px,#4d4d4d 31px,#898989 31.5px,#888888 32.5px,#5b5b5b 33px,#6d6d6d 36px,#c3c3c3 36.5px,#c1c1c1 41px,#767676 41.5px,#808080 55px,#8d8d8d 64px,#c1c1c1 64.5px,#c2c2c2 65.5px,#9c9c9c 66px,#aeaeae 72px,#d3d3d3 80px)"></i><i style="left:1128px;background:linear-gradient(#b7b7b7 0px,#444444 1.5px,#3d3d3d 20px,#4a4a4a 31px,#888888 31.5px,#898989 32.5px,#5c5c5c 33px,#6a6a6a 36px,#c0c0c0 36.5px,#c5c5c5 41px,#777777 41.5px,#7b7b7b 55px,#8d8d8d 64px,#c3c3c3 64.5px,#c2c2c2 65.5px,#9b9b9b 66px,#aeaeae 72px,#cdcdcd 80px)"></i><i style="left:1130px;background:linear-gradient(#bbbbbb 0px,#424242 1.5px,#3f3f3f 20px,#4f4f4f 31px,#878787 31.5px,#828282 32.5px,#616161 33px,#686868 36px,#c3c3c3 36.5px,#c5c5c5 41px,#6f6f6f 41.5px,#828282 55px,#8c8c8c 64px,#c1c1c1 64.5px,#bfbfbf 65.5px,#9e9e9e 66px,#aaaaaa 72px,#cecece 80px)"></i><i style="left:1132px;background:linear-gradient(#b6b6b6 0px,#3f3f3f 1.5px,#464646 20px,#494949 31px,#828282 31.5px,#838383 32.5px,#5b5b5b 33px,#6d6d6d 36px,#c3c3c3 36.5px,#c0c0c0 41px,#747474 41.5px,#7f7f7f 55px,#8e8e8e 64px,#c3c3c3 64.5px,#c0c0c0 65.5px,#989898 66px,#b2b2b2 72px,#d3d3d3 80px)"></i><i style="left:1134px;background:linear-gradient(#b8b8b8 0px,#434343 1.5px,#404040 20px,#494949 31px,#838383 31.5px,#848484 32.5px,#5a5a5a 33px,#676767 36px,#bfbfbf 36.5px,#c1c1c1 41px,#747474 41.5px,#7f7f7f 55px,#868686 64px,#c1c1c1 64.5px,#c1c1c1 65.5px,#9a9a9a 66px,#a8a8a8 72px,#d2d2d2 80px)"></i><b style="left:332px;background:linear-gradient(#7f7f7f 0px,#8c8c8c 10px,#939393 24px,#999999 40px,#9e9e9e 52px,#a8a8a8 62px,#bcbcbc 70px,#dbdbdb 75px,#f2f2f2 80px)"></b><b style="left:333px;background:linear-gradient(#8c8c8c 0px,#999999 10px,#9e9e9e 24px,#a3a3a3 40px,#a8a8a8 52px,#b2b2b2 62px,#c6c6c6 70px,#e0e0e0 75px,#f2f2f2 80px)"></b><b style="left:334px;background:linear-gradient(#666666 0px,#6b6b6b 10px,#727272 24px,#7a7a7a 40px,#7f7f7f 52px,#8c8c8c 62px,#9e9e9e 70px,#bfbfbf 75px,#d8d8d8 80px)"></b><b style="left:453px;background:linear-gradient(#6b6b6b 0px,#727272 10px,#777777 24px,#7f7f7f 40px,#848484 52px,#8e8e8e 62px,#9e9e9e 70px,#b7b7b7 75px,#cccccc 80px)"></b><b style="left:454px;background:linear-gradient(#606060 0px,#666666 10px,#6b6b6b 24px,#727272 40px,#7a7a7a 52px,#848484 62px,#939393 70px,#a8a8a8 75px,#b7b7b7 80px)"></b><b style="left:3px;background:linear-gradient(#565656 0px,#5b5b5b 10px,#606060 24px,#686868 40px,#727272 52px,#7f7f7f 62px,#999999 70px,#c6c6c6 75px,#e5e5e5 80px)"></b><b style="left:6px;background:linear-gradient(#4f4f4f 0px,#545454 10px,#5a5a5a 24px,#626262 40px,#6d6d6d 52px,#7b7b7b 62px,#969696 70px,#c5c5c5 75px,#e5e5e5 80px)"></b><b style="left:9px;background:linear-gradient(#565656 0px,#5b5b5b 10px,#606060 24px,#686868 40px,#727272 52px,#7f7f7f 62px,#999999 70px,#c6c6c6 75px,#e5e5e5 80px)"></b><b style="left:15px;background:linear-gradient(#565656 0px,#5b5b5b 10px,#606060 24px,#686868 40px,#727272 52px,#7f7f7f 62px,#999999 70px,#c6c6c6 75px,#e5e5e5 80px)"></b><b style="left:18px;background:linear-gradient(#5d5d5d 0px,#626262 10px,#676767 24px,#6e6e6e 40px,#777777 52px,#838383 62px,#8e8e8e 70px,#929292 75px,#999999 80px)"></b><b style="left:22px;background:linear-gradient(#5d5d5d 0px,#626262 10px,#676767 24px,#6e6e6e 40px,#777777 52px,#838383 62px,#8e8e8e 70px,#929292 75px,#999999 80px)"></b><b style="left:51px;background:linear-gradient(#494949 0px,#515151 10px,#5a5a5a 24px,#666666 40px,#727272 52px,#848484 62px,#979797 70px,#b5b5b5 75px,#cccccc 80px)"></b><b style="left:61px;background:linear-gradient(#5b5b5b 0px,#636363 10px,#6b6b6b 24px,#757575 40px,#7f7f7f 52px,#8e8e8e 62px,#9e9e9e 70px,#b7b7b7 75px,#cccccc 80px)"></b><b style="left:73px;background:linear-gradient(#474747 0px,#4f4f4f 10px,#4d4d4d 24px,#5e5e5e 40px,#727272 52px,#8c8c8c 62px,#a7a7a7 70px,#c4c4c4 75px,#dbdbdb 80px)"></b><b style="left:137px;background:linear-gradient(#474747 0px,#4f4f4f 10px,#4d4d4d 24px,#5e5e5e 40px,#727272 52px,#8c8c8c 62px,#a7a7a7 70px,#c4c4c4 75px,#dbdbdb 80px)"></b><b style="left:172px;background:linear-gradient(#424242 0px,#494949 10px,#4d4d4d 24px,#5e5e5e 40px,#727272 52px,#8c8c8c 62px,#a7a7a7 70px,#c4c4c4 75px,#e5e5e5 80px)"></b><b style="left:182px;background:linear-gradient(#424242 0px,#494949 10px,#4d4d4d 24px,#5e5e5e 40px,#727272 52px,#8c8c8c 62px,#a7a7a7 70px,#c4c4c4 75px,#e5e5e5 80px)"></b><b style="left:223px;background:linear-gradient(#565656 0px,#5e5e5e 10px,#5e5e5e 24px,#6d6d6d 40px,#7f7f7f 52px,#969696 62px,#adadad 70px,#c6c6c6 75px,#d6d6d6 80px)"></b><b style="left:265px;background:linear-gradient(#3a3a3a 0px,#414141 10px,#434343 24px,#555555 40px,#6b6b6b 52px,#868686 62px,#a3a3a3 70px,#c2c2c2 75px,#d6d6d6 80px)"></b><b style="left:291px;background:linear-gradient(#444444 0px,#4c4c4c 10px,#4d4d4d 24px,#5e5e5e 40px,#727272 52px,#8c8c8c 62px,#a7a7a7 70px,#c4c4c4 75px,#d6d6d6 80px)"></b><b style="left:358px;background:linear-gradient(#4f4f4f 0px,#565656 10px,#5d5d5d 24px,#686868 40px,#727272 52px,#7f7f7f 62px,#979797 70px,#afafaf 75px,#b7b7b7 80px)"></b><b style="left:403px;background:linear-gradient(#373737 0px,#3f3f3f 10px,#434343 24px,#555555 40px,#6b6b6b 52px,#868686 62px,#a3a3a3 70px,#c2c2c2 75px,#e8e8e8 80px)"></b><b style="left:419px;background:linear-gradient(#424242 0px,#494949 10px,#4d4d4d 24px,#5e5e5e 40px,#727272 52px,#8c8c8c 62px,#a7a7a7 70px,#c4c4c4 75px,#e8e8e8 80px)"></b><b style="left:473px;background:linear-gradient(#6b6b6b 0px,#727272 10px,#767676 24px,#7f7f7f 40px,#848484 52px,#878787 62px,#808080 70px,#777777 75px,#757575 80px)"></b><b style="left:569px;background:linear-gradient(#4f4f4f 0px,#565656 10px,#5e5e5e 24px,#6d6d6d 40px,#7f7f7f 52px,#969696 62px,#adadad 70px,#c6c6c6 75px,#e8e8e8 80px)"></b><b style="left:596px;background:linear-gradient(#4f4f4f 0px,#565656 10px,#5e5e5e 24px,#6d6d6d 40px,#7f7f7f 52px,#969696 62px,#adadad 70px,#c6c6c6 75px,#e8e8e8 80px)"></b><b style="left:605px;background:linear-gradient(#3d3d3d 0px,#444444 10px,#4d4d4d 24px,#5e5e5e 40px,#727272 52px,#8c8c8c 62px,#a7a7a7 70px,#c4c4c4 75px,#e8e8e8 80px)"></b><b style="left:625px;background:linear-gradient(#323232 0px,#3a3a3a 10px,#434343 24px,#555555 40px,#6b6b6b 52px,#868686 62px,#a3a3a3 70px,#c2c2c2 75px,#e8e8e8 80px)"></b><b style="left:653px;background:linear-gradient(#444444 0px,#4c4c4c 10px,#4d4d4d 24px,#5e5e5e 40px,#727272 52px,#8c8c8c 62px,#a1a1a1 70px,#afafaf 75px,#c1c1c1 80px)"></b><b style="left:673px;background:linear-gradient(#565656 0px,#5e5e5e 10px,#5e5e5e 24px,#6d6d6d 40px,#7f7f7f 52px,#969696 62px,#a8a8a8 70px,#b2b2b2 75px,#c1c1c1 80px)"></b><b style="left:750px;background:linear-gradient(#444444 0px,#4c4c4c 10px,#4d4d4d 24px,#5e5e5e 40px,#727272 52px,#8c8c8c 62px,#a7a7a7 70px,#b5b5b5 75px,#c6c6c6 80px)"></b><b style="left:766px;background:linear-gradient(#444444 0px,#4c4c4c 10px,#4d4d4d 24px,#5e5e5e 40px,#727272 52px,#8c8c8c 62px,#a7a7a7 70px,#b5b5b5 75px,#c6c6c6 80px)"></b><b style="left:781px;background:linear-gradient(#3a3a3a 0px,#414141 10px,#434343 24px,#555555 40px,#6b6b6b 52px,#868686 62px,#a3a3a3 70px,#b3b3b3 75px,#c6c6c6 80px)"></b><b style="left:832px;background:linear-gradient(#4f4f4f 0px,#4f4f4f 10px,#565656 24px,#666666 40px,#7f7f7f 52px,#969696 62px,#adadad 70px,#b7b7b7 75px,#c6c6c6 80px)"></b><b style="left:879px;background:linear-gradient(#3f3f3f 0px,#474747 10px,#4d4d4d 24px,#5e5e5e 40px,#727272 52px,#8c8c8c 62px,#888888 70px,#969696 75px,#a8a8a8 80px)"></b></div>
<div style="left:1233px;top:160px;width:43px;height:80px;background:#7a0a04;opacity:.8"></div>
<div style="left:1283px;top:196.5px;width:156px;height:4.5px;background:linear-gradient(90deg,#7a0a04 40%,rgba(122,10,4,.5))"></div>
<svg style="position:absolute;left:0;top:0" width="1510" height="918"><rect x="375" y="241.5" width="75" height="2.6" rx="1" fill="#c28a3a" stroke="#6a4a20" stroke-width="0.7"/><rect x="677.7" y="241.5" width="78.79999999999995" height="2.6" rx="1" fill="#c28a3a" stroke="#6a4a20" stroke-width="0.7"/><rect x="985" y="241.5" width="99.70000000000005" height="2.6" rx="1" fill="#c28a3a" stroke="#6a4a20" stroke-width="0.7"/><rect x="456" y="243.7" width="167" height="2.8" fill="#4b2a7d"/><rect x="847.2" y="243.7" width="129.0" height="2.8" fill="#4b2a7d"/><rect x="1098.6" y="243.7" width="83.40000000000009" height="2.8" fill="#4b2a7d"/><line x1="304" y1="255.5" x2="305.5" y2="255.5" stroke="#999" stroke-width="0.8"/><line x1="304" y1="261.4" x2="305.5" y2="261.4" stroke="#999" stroke-width="0.8"/><line x1="304" y1="267.2" x2="305.5" y2="267.2" stroke="#999" stroke-width="0.8"/><line x1="304" y1="273" x2="305.5" y2="273" stroke="#999" stroke-width="0.8"/><line x1="304" y1="278.3" x2="305.5" y2="278.3" stroke="#999" stroke-width="0.8"/><line x1="347.7" y1="255.5" x2="347.7" y2="267.2" stroke="#bbb" stroke-width="1"/><line x1="350.0" y1="255.5" x2="350.0" y2="267.2" stroke="#bbb" stroke-width="1"/><line x1="351.5" y1="255.5" x2="351.5" y2="267.2" stroke="#bbb" stroke-width="1"/><line x1="355.0" y1="255.5" x2="355.0" y2="267.2" stroke="#bbb" stroke-width="1"/><line x1="356.5" y1="255.5" x2="356.5" y2="267.2" stroke="#bbb" stroke-width="1"/><line x1="360.0" y1="255.5" x2="360.0" y2="267.2" stroke="#bbb" stroke-width="1"/><line x1="361.5" y1="255.5" x2="361.5" y2="267.2" stroke="#bbb" stroke-width="1"/><line x1="364.0" y1="255.5" x2="364.0" y2="267.2" stroke="#bbb" stroke-width="1"/><line x1="366.0" y1="255.5" x2="366.0" y2="267.2" stroke="#bbb" stroke-width="1"/><line x1="375.0" y1="267.2" x2="375.0" y2="273.0" stroke="#bbb" stroke-width="1"/><line x1="430.0" y1="255.5" x2="430.0" y2="273.0" stroke="#bbb" stroke-width="1"/><line x1="431.2" y1="255.5" x2="431.2" y2="273.0" stroke="#bbb" stroke-width="1"/><line x1="437.7" y1="255.5" x2="437.7" y2="273.0" stroke="#bbb" stroke-width="1"/><line x1="439.5" y1="255.5" x2="439.5" y2="261.4" stroke="#bbb" stroke-width="1"/><line x1="441.5" y1="261.4" x2="441.5" y2="273.0" stroke="#bbb" stroke-width="1"/><line x1="444.0" y1="261.4" x2="444.0" y2="273.0" stroke="#bbb" stroke-width="1"/><line x1="450.0" y1="261.4" x2="450.0" y2="267.2" stroke="#bbb" stroke-width="1"/><line x1="453.0" y1="255.5" x2="453.0" y2="267.2" stroke="#bbb" stroke-width="1"/><line x1="455.0" y1="255.5" x2="455.0" y2="267.2" stroke="#bbb" stroke-width="1"/><line x1="457.5" y1="255.5" x2="457.5" y2="267.2" stroke="#bbb" stroke-width="1"/><line x1="459.0" y1="255.5" x2="459.0" y2="273.0" stroke="#bbb" stroke-width="1"/><line x1="476.5" y1="255.5" x2="476.5" y2="273.0" stroke="#bbb" stroke-width="1"/><line x1="477.5" y1="255.5" x2="477.5" y2="273.0" stroke="#bbb" stroke-width="1"/><line x1="502.7" y1="273.0" x2="502.7" y2="278.3" stroke="#bbb" stroke-width="1"/><line x1="504.5" y1="273.0" x2="504.5" y2="278.3" stroke="#bbb" stroke-width="1"/><line x1="506.0" y1="273.0" x2="506.0" y2="278.3" stroke="#bbb" stroke-width="1"/><line x1="507.6" y1="273.0" x2="507.6" y2="278.3" stroke="#bbb" stroke-width="1"/><line x1="525.5" y1="273.0" x2="525.5" y2="278.3" stroke="#bbb" stroke-width="1"/><line x1="527.0" y1="255.5" x2="527.0" y2="278.3" stroke="#bbb" stroke-width="1"/><line x1="528.0" y1="255.5" x2="528.0" y2="267.2" stroke="#bbb" stroke-width="1"/><line x1="529.5" y1="267.2" x2="529.5" y2="273.0" stroke="#bbb" stroke-width="1"/><line x1="562.7" y1="261.4" x2="562.7" y2="273.0" stroke="#bbb" stroke-width="1"/><line x1="566.0" y1="255.5" x2="566.0" y2="261.4" stroke="#bbb" stroke-width="1"/><line x1="567.0" y1="255.5" x2="567.0" y2="261.4" stroke="#bbb" stroke-width="1"/><line x1="571.0" y1="255.5" x2="571.0" y2="261.4" stroke="#bbb" stroke-width="1"/><line x1="572.0" y1="255.5" x2="572.0" y2="261.4" stroke="#bbb" stroke-width="1"/><line x1="576.0" y1="255.5" x2="576.0" y2="261.4" stroke="#bbb" stroke-width="1"/><line x1="577.0" y1="255.5" x2="577.0" y2="261.4" stroke="#bbb" stroke-width="1"/><line x1="584.0" y1="255.5" x2="584.0" y2="261.4" stroke="#bbb" stroke-width="1"/><line x1="585.0" y1="255.5" x2="585.0" y2="261.4" stroke="#bbb" stroke-width="1"/><line x1="590.0" y1="255.5" x2="590.0" y2="261.4" stroke="#bbb" stroke-width="1"/><line x1="591.0" y1="255.5" x2="591.0" y2="261.4" stroke="#bbb" stroke-width="1"/><line x1="609.9" y1="255.5" x2="609.9" y2="261.4" stroke="#bbb" stroke-width="1"/><line x1="611.0" y1="255.5" x2="611.0" y2="261.4" stroke="#bbb" stroke-width="1"/><line x1="620.0" y1="255.5" x2="620.0" y2="261.4" stroke="#bbb" stroke-width="1"/><line x1="621.0" y1="255.5" x2="621.0" y2="261.4" stroke="#bbb" stroke-width="1"/><line x1="623.8" y1="261.4" x2="623.8" y2="273.0" stroke="#bbb" stroke-width="1"/><line x1="629.5" y1="267.2" x2="629.5" y2="273.0" stroke="#bbb" stroke-width="1"/><line x1="631.0" y1="267.2" x2="631.0" y2="273.0" stroke="#bbb" stroke-width="1"/><line x1="634.1" y1="255.5" x2="634.1" y2="273.0" stroke="#bbb" stroke-width="1"/><line x1="658.2" y1="255.5" x2="658.2" y2="267.2" stroke="#bbb" stroke-width="1"/><line x1="661.0" y1="255.5" x2="661.0" y2="267.2" stroke="#bbb" stroke-width="1"/><line x1="665.0" y1="255.5" x2="665.0" y2="267.2" stroke="#bbb" stroke-width="1"/><line x1="667.0" y1="255.5" x2="667.0" y2="267.2" stroke="#bbb" stroke-width="1"/><line x1="674.0" y1="255.5" x2="674.0" y2="267.2" stroke="#bbb" stroke-width="1"/><line x1="676.0" y1="255.5" x2="676.0" y2="267.2" stroke="#bbb" stroke-width="1"/><line x1="678.0" y1="255.5" x2="678.0" y2="273.0" stroke="#bbb" stroke-width="1"/><line x1="706.3" y1="267.2" x2="706.3" y2="273.0" stroke="#bbb" stroke-width="1"/><line x1="708.0" y1="267.2" x2="708.0" y2="273.0" stroke="#bbb" stroke-width="1"/><line x1="712.5" y1="273.0" x2="712.5" y2="278.3" stroke="#bbb" stroke-width="1"/><line x1="714.0" y1="273.0" x2="714.0" y2="278.3" stroke="#bbb" stroke-width="1"/><line x1="755.9" y1="273.0" x2="755.9" y2="278.3" stroke="#bbb" stroke-width="1"/><line x1="757.0" y1="255.5" x2="757.0" y2="278.3" stroke="#bbb" stroke-width="1"/><line x1="766.9" y1="255.5" x2="766.9" y2="267.2" stroke="#bbb" stroke-width="1"/><line x1="777.4" y1="255.5" x2="777.4" y2="267.2" stroke="#bbb" stroke-width="1"/><line x1="784.2" y1="255.5" x2="784.2" y2="267.2" stroke="#bbb" stroke-width="1"/><line x1="786.0" y1="267.2" x2="786.0" y2="273.0" stroke="#bbb" stroke-width="1"/><line x1="792.7" y1="261.4" x2="792.7" y2="273.0" stroke="#bbb" stroke-width="1"/><line x1="799.0" y1="255.5" x2="799.0" y2="261.4" stroke="#bbb" stroke-width="1"/><line x1="800.0" y1="255.5" x2="800.0" y2="261.4" stroke="#bbb" stroke-width="1"/><line x1="805.0" y1="255.5" x2="805.0" y2="261.4" stroke="#bbb" stroke-width="1"/><line x1="806.0" y1="255.5" x2="806.0" y2="261.4" stroke="#bbb" stroke-width="1"/><line x1="820.0" y1="255.5" x2="820.0" y2="261.4" stroke="#bbb" stroke-width="1"/><line x1="821.0" y1="255.5" x2="821.0" y2="261.4" stroke="#bbb" stroke-width="1"/><line x1="827.0" y1="255.5" x2="827.0" y2="261.4" stroke="#bbb" stroke-width="1"/><line x1="828.0" y1="255.5" x2="828.0" y2="261.4" stroke="#bbb" stroke-width="1"/><line x1="842.0" y1="255.5" x2="842.0" y2="261.4" stroke="#bbb" stroke-width="1"/><line x1="843.0" y1="255.5" x2="843.0" y2="261.4" stroke="#bbb" stroke-width="1"/><line x1="847.7" y1="261.4" x2="847.7" y2="273.0" stroke="#bbb" stroke-width="1"/><line x1="874.0" y1="267.2" x2="874.0" y2="273.0" stroke="#bbb" stroke-width="1"/><line x1="875.0" y1="267.2" x2="875.0" y2="273.0" stroke="#bbb" stroke-width="1"/><line x1="900.3" y1="255.5" x2="900.3" y2="273.0" stroke="#bbb" stroke-width="1"/><line x1="902.5" y1="255.5" x2="902.5" y2="267.2" stroke="#bbb" stroke-width="1"/><line x1="905.0" y1="267.2" x2="905.0" y2="273.0" stroke="#bbb" stroke-width="1"/><line x1="921.0" y1="273.0" x2="921.0" y2="278.3" stroke="#bbb" stroke-width="1"/><line x1="923.0" y1="273.0" x2="923.0" y2="278.3" stroke="#bbb" stroke-width="1"/><line x1="926.0" y1="273.0" x2="926.0" y2="278.3" stroke="#bbb" stroke-width="1"/><line x1="928.0" y1="273.0" x2="928.0" y2="278.3" stroke="#bbb" stroke-width="1"/><line x1="939.7" y1="261.4" x2="939.7" y2="273.0" stroke="#bbb" stroke-width="1"/><line x1="957.0" y1="255.5" x2="957.0" y2="261.4" stroke="#bbb" stroke-width="1"/><line x1="958.0" y1="255.5" x2="958.0" y2="261.4" stroke="#bbb" stroke-width="1"/><line x1="976.4" y1="255.5" x2="976.4" y2="261.4" stroke="#bbb" stroke-width="1"/><line x1="981.4" y1="255.5" x2="981.4" y2="267.2" stroke="#bbb" stroke-width="1"/><line x1="984.4" y1="267.2" x2="984.4" y2="273.0" stroke="#bbb" stroke-width="1"/><line x1="1023.0" y1="261.4" x2="1023.0" y2="273.0" stroke="#bbb" stroke-width="1"/><line x1="1024.0" y1="261.4" x2="1024.0" y2="273.0" stroke="#bbb" stroke-width="1"/><line x1="1044.0" y1="261.4" x2="1044.0" y2="273.0" stroke="#bbb" stroke-width="1"/><line x1="1054.0" y1="255.5" x2="1054.0" y2="261.4" stroke="#bbb" stroke-width="1"/><line x1="1055.0" y1="255.5" x2="1055.0" y2="261.4" stroke="#bbb" stroke-width="1"/><line x1="1078.0" y1="255.5" x2="1078.0" y2="261.4" stroke="#bbb" stroke-width="1"/><line x1="1079.0" y1="255.5" x2="1079.0" y2="261.4" stroke="#bbb" stroke-width="1"/><line x1="1084.7" y1="255.5" x2="1084.7" y2="261.4" stroke="#bbb" stroke-width="1"/><line x1="1088.0" y1="255.5" x2="1088.0" y2="267.2" stroke="#bbb" stroke-width="1"/><line x1="1099.0" y1="267.2" x2="1099.0" y2="273.0" stroke="#bbb" stroke-width="1"/><line x1="1136.4" y1="267.2" x2="1136.4" y2="273.0" stroke="#bbb" stroke-width="1"/><line x1="1141.3" y1="267.2" x2="1141.3" y2="273.0" stroke="#bbb" stroke-width="1"/><line x1="1144.7" y1="273.0" x2="1144.7" y2="278.3" stroke="#bbb" stroke-width="1"/><line x1="1153.0" y1="261.4" x2="1153.0" y2="278.3" stroke="#bbb" stroke-width="1"/><line x1="1156.5" y1="255.5" x2="1156.5" y2="261.4" stroke="#bbb" stroke-width="1"/><line x1="1157.5" y1="255.5" x2="1157.5" y2="261.4" stroke="#bbb" stroke-width="1"/><line x1="1160.0" y1="255.5" x2="1160.0" y2="261.4" stroke="#bbb" stroke-width="1"/><line x1="1161.0" y1="255.5" x2="1161.0" y2="261.4" stroke="#bbb" stroke-width="1"/><line x1="1165.0" y1="255.5" x2="1165.0" y2="261.4" stroke="#bbb" stroke-width="1"/><line x1="1166.0" y1="255.5" x2="1166.0" y2="261.4" stroke="#bbb" stroke-width="1"/><line x1="1172.0" y1="255.5" x2="1172.0" y2="261.4" stroke="#bbb" stroke-width="1"/><line x1="1173.0" y1="255.5" x2="1173.0" y2="261.4" stroke="#bbb" stroke-width="1"/><line x1="1178.0" y1="255.5" x2="1178.0" y2="261.4" stroke="#bbb" stroke-width="1"/><line x1="1179.0" y1="255.5" x2="1179.0" y2="261.4" stroke="#bbb" stroke-width="1"/><line x1="1181.7" y1="255.5" x2="1181.7" y2="261.4" stroke="#bbb" stroke-width="1"/><line x1="1184.7" y1="255.5" x2="1184.7" y2="267.2" stroke="#bbb" stroke-width="1"/><line x1="1187.0" y1="255.5" x2="1187.0" y2="267.2" stroke="#bbb" stroke-width="1"/><line x1="1188.0" y1="255.5" x2="1188.0" y2="267.2" stroke="#bbb" stroke-width="1"/><line x1="1196.2" y1="267.2" x2="1196.2" y2="273.0" stroke="#bbb" stroke-width="1"/><line x1="1198.0" y1="255.5" x2="1198.0" y2="273.0" stroke="#bbb" stroke-width="1"/><line x1="305.6" y1="255.5" x2="346.1" y2="255.5" stroke="#5fa85c" stroke-width="4.6" stroke-linecap="round"/><line x1="349.3" y1="267.2" x2="362.4" y2="267.2" stroke="#4fbbec" stroke-width="4.6" stroke-linecap="round"/><line x1="365.6" y1="255.5" x2="365.6" y2="255.5" stroke="#5fa85c" stroke-width="4.6" stroke-linecap="round"/><line x1="367.6" y1="267.2" x2="373.4" y2="267.2" stroke="#4fbbec" stroke-width="4.6" stroke-linecap="round"/><line x1="376.6" y1="273.0" x2="436.1" y2="273.0" stroke="#1f55c0" stroke-width="4.6" stroke-linecap="round"/><line x1="439.3" y1="255.5" x2="439.3" y2="255.5" stroke="#5fa85c" stroke-width="4.6" stroke-linecap="round"/><line x1="441.1" y1="261.4" x2="441.1" y2="261.4" stroke="#e33b3b" stroke-width="4.6" stroke-linecap="round"/><line x1="443.1" y1="273.0" x2="443.1" y2="273.0" stroke="#1f55c0" stroke-width="4.6" stroke-linecap="round"/><line x1="445.6" y1="261.4" x2="448.4" y2="261.4" stroke="#e33b3b" stroke-width="4.6" stroke-linecap="round"/><line x1="451.6" y1="267.2" x2="451.6" y2="267.2" stroke="#4fbbec" stroke-width="4.6" stroke-linecap="round"/><line x1="454.6" y1="255.5" x2="454.6" y2="255.5" stroke="#5fa85c" stroke-width="4.6" stroke-linecap="round"/><line x1="456.6" y1="267.2" x2="456.6" y2="267.2" stroke="#4fbbec" stroke-width="4.6" stroke-linecap="round"/><line x1="459.1" y1="255.5" x2="459.1" y2="255.5" stroke="#5fa85c" stroke-width="4.6" stroke-linecap="round"/><line x1="460.6" y1="273.0" x2="501.1" y2="273.0" stroke="#1f55c0" stroke-width="4.6" stroke-linecap="round"/><line x1="504.3" y1="278.3" x2="506.0" y2="278.3" stroke="#10154a" stroke-width="4.6" stroke-linecap="round"/><line x1="509.2" y1="273.0" x2="523.9" y2="273.0" stroke="#1f55c0" stroke-width="4.6" stroke-linecap="round"/><line x1="527.1" y1="278.3" x2="527.1" y2="278.3" stroke="#10154a" stroke-width="4.6" stroke-linecap="round"/><line x1="528.6" y1="255.5" x2="528.6" y2="255.5" stroke="#5fa85c" stroke-width="4.6" stroke-linecap="round"/><line x1="529.6" y1="267.2" x2="529.6" y2="267.2" stroke="#4fbbec" stroke-width="4.6" stroke-linecap="round"/><line x1="531.1" y1="273.0" x2="561.1" y2="273.0" stroke="#1f55c0" stroke-width="4.6" stroke-linecap="round"/><line x1="564.3" y1="261.4" x2="622.2" y2="261.4" stroke="#e33b3b" stroke-width="4.6" stroke-linecap="round"/><line x1="625.4" y1="273.0" x2="632.5" y2="273.0" stroke="#1f55c0" stroke-width="4.6" stroke-linecap="round"/><line x1="635.7" y1="255.5" x2="656.6" y2="255.5" stroke="#5fa85c" stroke-width="4.6" stroke-linecap="round"/><line x1="659.8" y1="267.2" x2="659.8" y2="267.2" stroke="#4fbbec" stroke-width="4.6" stroke-linecap="round"/><line x1="662.6" y1="255.5" x2="663.4" y2="255.5" stroke="#5fa85c" stroke-width="4.6" stroke-linecap="round"/><line x1="666.6" y1="267.2" x2="666.6" y2="267.2" stroke="#4fbbec" stroke-width="4.6" stroke-linecap="round"/><line x1="668.6" y1="255.5" x2="672.4" y2="255.5" stroke="#5fa85c" stroke-width="4.6" stroke-linecap="round"/><line x1="675.6" y1="267.2" x2="675.6" y2="267.2" stroke="#4fbbec" stroke-width="4.6" stroke-linecap="round"/><line x1="677.6" y1="255.5" x2="677.6" y2="255.5" stroke="#5fa85c" stroke-width="4.6" stroke-linecap="round"/><line x1="679.6" y1="273.0" x2="704.7" y2="273.0" stroke="#1f55c0" stroke-width="4.6" stroke-linecap="round"/><line x1="707.9" y1="267.2" x2="707.9" y2="267.2" stroke="#4fbbec" stroke-width="4.6" stroke-linecap="round"/><line x1="709.6" y1="273.0" x2="754.3" y2="273.0" stroke="#1f55c0" stroke-width="4.6" stroke-linecap="round"/><line x1="757.5" y1="278.3" x2="757.5" y2="278.3" stroke="#10154a" stroke-width="4.6" stroke-linecap="round"/><line x1="758.6" y1="255.5" x2="765.3" y2="255.5" stroke="#5fa85c" stroke-width="4.6" stroke-linecap="round"/><line x1="768.5" y1="267.2" x2="775.8" y2="267.2" stroke="#4fbbec" stroke-width="4.6" stroke-linecap="round"/><line x1="779.0" y1="255.5" x2="782.6" y2="255.5" stroke="#5fa85c" stroke-width="4.6" stroke-linecap="round"/><line x1="785.8" y1="267.2" x2="785.8" y2="267.2" stroke="#4fbbec" stroke-width="4.6" stroke-linecap="round"/><line x1="787.6" y1="273.0" x2="791.1" y2="273.0" stroke="#1f55c0" stroke-width="4.6" stroke-linecap="round"/><line x1="794.3" y1="261.4" x2="846.1" y2="261.4" stroke="#e33b3b" stroke-width="4.6" stroke-linecap="round"/><line x1="849.3" y1="273.0" x2="898.7" y2="273.0" stroke="#1f55c0" stroke-width="4.6" stroke-linecap="round"/><line x1="901.9" y1="255.5" x2="901.9" y2="255.5" stroke="#5fa85c" stroke-width="4.6" stroke-linecap="round"/><line x1="904.1" y1="267.2" x2="904.1" y2="267.2" stroke="#4fbbec" stroke-width="4.6" stroke-linecap="round"/><line x1="906.6" y1="273.0" x2="919.4" y2="273.0" stroke="#1f55c0" stroke-width="4.6" stroke-linecap="round"/><line x1="922.6" y1="278.3" x2="922.6" y2="278.3" stroke="#10154a" stroke-width="4.6" stroke-linecap="round"/><line x1="924.6" y1="273.0" x2="924.6" y2="273.0" stroke="#1f55c0" stroke-width="4.6" stroke-linecap="round"/><line x1="927.6" y1="278.3" x2="927.6" y2="278.3" stroke="#10154a" stroke-width="4.6" stroke-linecap="round"/><line x1="929.6" y1="273.0" x2="938.1" y2="273.0" stroke="#1f55c0" stroke-width="4.6" stroke-linecap="round"/><line x1="941.3" y1="261.4" x2="974.8" y2="261.4" stroke="#e33b3b" stroke-width="4.6" stroke-linecap="round"/><line x1="978.0" y1="255.5" x2="979.8" y2="255.5" stroke="#5fa85c" stroke-width="4.6" stroke-linecap="round"/><line x1="983.0" y1="267.2" x2="983.0" y2="267.2" stroke="#4fbbec" stroke-width="4.6" stroke-linecap="round"/><line x1="986.0" y1="273.0" x2="1042.4" y2="273.0" stroke="#1f55c0" stroke-width="4.6" stroke-linecap="round"/><line x1="1045.6" y1="261.4" x2="1083.1" y2="261.4" stroke="#e33b3b" stroke-width="4.6" stroke-linecap="round"/><line x1="1086.3" y1="255.5" x2="1086.4" y2="255.5" stroke="#5fa85c" stroke-width="4.6" stroke-linecap="round"/><line x1="1089.6" y1="267.2" x2="1097.4" y2="267.2" stroke="#4fbbec" stroke-width="4.6" stroke-linecap="round"/><line x1="1100.6" y1="273.0" x2="1134.8" y2="273.0" stroke="#1f55c0" stroke-width="4.6" stroke-linecap="round"/><line x1="1138.0" y1="267.2" x2="1139.7" y2="267.2" stroke="#4fbbec" stroke-width="4.6" stroke-linecap="round"/><line x1="1142.9" y1="273.0" x2="1143.1" y2="273.0" stroke="#1f55c0" stroke-width="4.6" stroke-linecap="round"/><line x1="1146.3" y1="278.3" x2="1151.4" y2="278.3" stroke="#10154a" stroke-width="4.6" stroke-linecap="round"/><line x1="1154.6" y1="261.4" x2="1180.1" y2="261.4" stroke="#e33b3b" stroke-width="4.6" stroke-linecap="round"/><line x1="1183.3" y1="255.5" x2="1183.3" y2="255.5" stroke="#5fa85c" stroke-width="4.6" stroke-linecap="round"/><line x1="1186.3" y1="267.2" x2="1194.6" y2="267.2" stroke="#4fbbec" stroke-width="4.6" stroke-linecap="round"/><line x1="1197.8" y1="273.0" x2="1197.8" y2="273.0" stroke="#1f55c0" stroke-width="4.6" stroke-linecap="round"/><line x1="1199.6" y1="255.5" x2="1437.4" y2="255.5" stroke="#5fa85c" stroke-width="4.6" stroke-linecap="round"/><circle cx="350.8" cy="255.5" r="2.4" fill="#5fa85c"/><circle cx="355.8" cy="255.5" r="2.4" fill="#5fa85c"/><circle cx="360.8" cy="255.5" r="2.4" fill="#5fa85c"/><circle cx="430.6" cy="255.5" r="2.4" fill="#5fa85c"/><circle cx="477.0" cy="255.5" r="2.4" fill="#5fa85c"/><circle cx="505.2" cy="273.0" r="2.4" fill="#1f55c0"/><circle cx="566.5" cy="255.5" r="2.4" fill="#5fa85c"/><circle cx="571.5" cy="255.5" r="2.4" fill="#5fa85c"/><circle cx="576.5" cy="255.5" r="2.4" fill="#5fa85c"/><circle cx="584.5" cy="255.5" r="2.4" fill="#5fa85c"/><circle cx="590.5" cy="255.5" r="2.4" fill="#5fa85c"/><circle cx="610.5" cy="255.5" r="2.4" fill="#5fa85c"/><circle cx="620.5" cy="255.5" r="2.4" fill="#5fa85c"/><circle cx="630.2" cy="267.2" r="2.4" fill="#4fbbec"/><circle cx="713.2" cy="278.3" r="2.4" fill="#10154a"/><circle cx="799.5" cy="255.5" r="2.4" fill="#5fa85c"/><circle cx="805.5" cy="255.5" r="2.4" fill="#5fa85c"/><circle cx="820.5" cy="255.5" r="2.4" fill="#5fa85c"/><circle cx="827.5" cy="255.5" r="2.4" fill="#5fa85c"/><circle cx="842.5" cy="255.5" r="2.4" fill="#5fa85c"/><circle cx="874.5" cy="267.2" r="2.4" fill="#4fbbec"/><circle cx="957.5" cy="255.5" r="2.4" fill="#5fa85c"/><circle cx="1023.5" cy="261.4" r="2.4" fill="#e33b3b"/><circle cx="1054.5" cy="255.5" r="2.4" fill="#5fa85c"/><circle cx="1078.5" cy="255.5" r="2.4" fill="#5fa85c"/><circle cx="1157.0" cy="255.5" r="2.4" fill="#5fa85c"/><circle cx="1160.5" cy="255.5" r="2.4" fill="#5fa85c"/><circle cx="1165.5" cy="255.5" r="2.4" fill="#5fa85c"/><circle cx="1172.5" cy="255.5" r="2.4" fill="#5fa85c"/><circle cx="1178.5" cy="255.5" r="2.4" fill="#5fa85c"/><circle cx="1187.5" cy="255.5" r="2.4" fill="#5fa85c"/><line x1="304" y1="279.5" x2="1303.5" y2="279.5" stroke="#aaa" stroke-width="1"/><rect x="304.5" y="281.5" width="1134" height="9.5" fill="#e6a84c" stroke="#c88a30" stroke-width="1"/><path d="M306.5 282v9M311.5 282v9M316.5 282v9M321.5 282v9M326.5 282v9M331.5 282v9M336.5 282v9M341.5 282v9M346.5 282v9M351.5 282v9M356.5 282v9M361.5 282v9M366.5 282v9M371.5 282v9M376.5 282v9M381.5 282v9M386.5 282v9M391.5 282v9M396.5 282v9M401.5 282v9M406.5 282v9M411.5 282v9M416.5 282v9M421.5 282v9M426.5 282v9M431.5 282v9M436.5 282v9M441.5 282v9M446.5 282v9M451.5 282v9M456.5 282v9M461.5 282v9M466.5 282v9M471.5 282v9M476.5 282v9M481.5 282v9M486.5 282v9M491.5 282v9M496.5 282v9M501.5 282v9M506.5 282v9M511.5 282v9M516.5 282v9M521.5 282v9M526.5 282v9M531.5 282v9M536.5 282v9M541.5 282v9M546.5 282v9M551.5 282v9M556.5 282v9M561.5 282v9M566.5 282v9M571.5 282v9M576.5 282v9M581.5 282v9M586.5 282v9M591.5 282v9M596.5 282v9M601.5 282v9M606.5 282v9M611.5 282v9M616.5 282v9M621.5 282v9M626.5 282v9M631.5 282v9M636.5 282v9M641.5 282v9M646.5 282v9M651.5 282v9M656.5 282v9M661.5 282v9M666.5 282v9M671.5 282v9M676.5 282v9M681.5 282v9M686.5 282v9M691.5 282v9M696.5 282v9M701.5 282v9M706.5 282v9M711.5 282v9M716.5 282v9M721.5 282v9M726.5 282v9M731.5 282v9M736.5 282v9M741.5 282v9M746.5 282v9M751.5 282v9M756.5 282v9M761.5 282v9M766.5 282v9M771.5 282v9M776.5 282v9M781.5 282v9M786.5 282v9M791.5 282v9M796.5 282v9M801.5 282v9M806.5 282v9M811.5 282v9M816.5 282v9M821.5 282v9M826.5 282v9M831.5 282v9M836.5 282v9M841.5 282v9M846.5 282v9M851.5 282v9M856.5 282v9M861.5 282v9M866.5 282v9M871.5 282v9M876.5 282v9M881.5 282v9M886.5 282v9M891.5 282v9M896.5 282v9M901.5 282v9M906.5 282v9M911.5 282v9M916.5 282v9M921.5 282v9M926.5 282v9M931.5 282v9M936.5 282v9M941.5 282v9M946.5 282v9M951.5 282v9M956.5 282v9M961.5 282v9M966.5 282v9M971.5 282v9M976.5 282v9M981.5 282v9M986.5 282v9M991.5 282v9M996.5 282v9M1001.5 282v9M1006.5 282v9M1011.5 282v9M1016.5 282v9M1021.5 282v9M1026.5 282v9M1031.5 282v9M1036.5 282v9M1041.5 282v9M1046.5 282v9M1051.5 282v9M1056.5 282v9M1061.5 282v9M1066.5 282v9M1071.5 282v9M1076.5 282v9M1081.5 282v9M1086.5 282v9M1091.5 282v9M1096.5 282v9M1101.5 282v9M1106.5 282v9M1111.5 282v9M1116.5 282v9M1121.5 282v9M1126.5 282v9M1131.5 282v9M1136.5 282v9M1141.5 282v9M1146.5 282v9M1151.5 282v9M1156.5 282v9M1161.5 282v9M1166.5 282v9M1171.5 282v9M1176.5 282v9M1181.5 282v9M1186.5 282v9M1191.5 282v9M1196.5 282v9M1201.5 282v9M1206.5 282v9M1211.5 282v9M1216.5 282v9M1221.5 282v9M1226.5 282v9M1231.5 282v9M1236.5 282v9M1241.5 282v9M1246.5 282v9M1251.5 282v9M1256.5 282v9M1261.5 282v9M1266.5 282v9M1271.5 282v9M1276.5 282v9M1281.5 282v9M1286.5 282v9M1291.5 282v9M1296.5 282v9M1301.5 282v9M1306.5 282v9M1311.5 282v9M1316.5 282v9M1321.5 282v9M1326.5 282v9M1331.5 282v9M1336.5 282v9M1341.5 282v9M1346.5 282v9M1351.5 282v9M1356.5 282v9M1361.5 282v9M1366.5 282v9M1371.5 282v9M1376.5 282v9M1381.5 282v9M1386.5 282v9M1391.5 282v9M1396.5 282v9M1401.5 282v9M1406.5 282v9M1411.5 282v9M1416.5 282v9M1421.5 282v9M1426.5 282v9M1431.5 282v9M1436.5 282v9" stroke="#d89a3e" stroke-width="1" opacity="0.6"/><rect x="304.5" y="291.5" width="1134" height="9.5" fill="#fff" stroke="#999" stroke-width="1"/><line x1="329.5" y1="295" x2="329.5" y2="299" stroke="#9b9bf0" stroke-width="1"/><line x1="354.5" y1="295" x2="354.5" y2="299" stroke="#9b9bf0" stroke-width="1"/><line x1="379.5" y1="295" x2="379.5" y2="299" stroke="#9b9bf0" stroke-width="1"/><line x1="403.5" y1="292" x2="403.5" y2="301" stroke="#444" stroke-width="1.2"/><line x1="429.5" y1="295" x2="429.5" y2="299" stroke="#9b9bf0" stroke-width="1"/><line x1="454.5" y1="295" x2="454.5" y2="299" stroke="#9b9bf0" stroke-width="1"/><line x1="479.5" y1="295" x2="479.5" y2="299" stroke="#9b9bf0" stroke-width="1"/><line x1="503.5" y1="292" x2="503.5" y2="301" stroke="#444" stroke-width="1.2"/><line x1="529.5" y1="295" x2="529.5" y2="299" stroke="#9b9bf0" stroke-width="1"/><line x1="554.5" y1="295" x2="554.5" y2="299" stroke="#9b9bf0" stroke-width="1"/><line x1="579.5" y1="295" x2="579.5" y2="299" stroke="#9b9bf0" stroke-width="1"/><line x1="603.5" y1="292" x2="603.5" y2="301" stroke="#444" stroke-width="1.2"/><line x1="629.5" y1="295" x2="629.5" y2="299" stroke="#9b9bf0" stroke-width="1"/><line x1="654.5" y1="295" x2="654.5" y2="299" stroke="#9b9bf0" stroke-width="1"/><line x1="679.5" y1="295" x2="679.5" y2="299" stroke="#9b9bf0" stroke-width="1"/><line x1="703.5" y1="292" x2="703.5" y2="301" stroke="#444" stroke-width="1.2"/><line x1="729.5" y1="295" x2="729.5" y2="299" stroke="#9b9bf0" stroke-width="1"/><line x1="754.5" y1="295" x2="754.5" y2="299" stroke="#9b9bf0" stroke-width="1"/><line x1="779.5" y1="295" x2="779.5" y2="299" stroke="#9b9bf0" stroke-width="1"/><line x1="803.5" y1="292" x2="803.5" y2="301" stroke="#444" stroke-width="1.2"/><line x1="829.5" y1="295" x2="829.5" y2="299" stroke="#9b9bf0" stroke-width="1"/><line x1="854.5" y1="295" x2="854.5" y2="299" stroke="#9b9bf0" stroke-width="1"/><line x1="879.5" y1="295" x2="879.5" y2="299" stroke="#9b9bf0" stroke-width="1"/><line x1="903.5" y1="292" x2="903.5" y2="301" stroke="#444" stroke-width="1.2"/><line x1="929.5" y1="295" x2="929.5" y2="299" stroke="#9b9bf0" stroke-width="1"/><line x1="954.5" y1="295" x2="954.5" y2="299" stroke="#9b9bf0" stroke-width="1"/><line x1="979.5" y1="295" x2="979.5" y2="299" stroke="#9b9bf0" stroke-width="1"/><line x1="1003.5" y1="292" x2="1003.5" y2="301" stroke="#444" stroke-width="1.2"/><line x1="1029.5" y1="295" x2="1029.5" y2="299" stroke="#9b9bf0" stroke-width="1"/><line x1="1054.5" y1="295" x2="1054.5" y2="299" stroke="#9b9bf0" stroke-width="1"/><line x1="1079.5" y1="295" x2="1079.5" y2="299" stroke="#9b9bf0" stroke-width="1"/><line x1="1103.5" y1="292" x2="1103.5" y2="301" stroke="#444" stroke-width="1.2"/><line x1="1129.5" y1="295" x2="1129.5" y2="299" stroke="#9b9bf0" stroke-width="1"/><line x1="1154.5" y1="295" x2="1154.5" y2="299" stroke="#9b9bf0" stroke-width="1"/><line x1="1179.5" y1="295" x2="1179.5" y2="299" stroke="#9b9bf0" stroke-width="1"/><line x1="1203.5" y1="292" x2="1203.5" y2="301" stroke="#444" stroke-width="1.2"/><line x1="1229.5" y1="295" x2="1229.5" y2="299" stroke="#9b9bf0" stroke-width="1"/><line x1="1254.5" y1="295" x2="1254.5" y2="299" stroke="#9b9bf0" stroke-width="1"/><line x1="1279.5" y1="295" x2="1279.5" y2="299" stroke="#9b9bf0" stroke-width="1"/><line x1="1303.5" y1="292" x2="1303.5" y2="301" stroke="#444" stroke-width="1.2"/><line x1="1329.5" y1="295" x2="1329.5" y2="299" stroke="#9b9bf0" stroke-width="1"/><line x1="1354.5" y1="295" x2="1354.5" y2="299" stroke="#9b9bf0" stroke-width="1"/><line x1="1379.5" y1="295" x2="1379.5" y2="299" stroke="#9b9bf0" stroke-width="1"/><line x1="1403.5" y1="292" x2="1403.5" y2="301" stroke="#444" stroke-width="1.2"/><line x1="1429.5" y1="295" x2="1429.5" y2="299" stroke="#9b9bf0" stroke-width="1"/><rect x="304.0" y="436.5" width="44.0" height="11.5" fill="#66ad6a"/><rect x="347.7" y="436.5" width="2.6" height="11.5" fill="#5bc6f1"/><rect x="350.0" y="436.5" width="1.8" height="11.5" fill="#66ad6a"/><rect x="351.5" y="436.5" width="3.8" height="11.5" fill="#5bc6f1"/><rect x="355.0" y="436.5" width="1.8" height="11.5" fill="#66ad6a"/><rect x="356.5" y="436.5" width="3.8" height="11.5" fill="#5bc6f1"/><rect x="360.0" y="436.5" width="1.8" height="11.5" fill="#66ad6a"/><rect x="361.5" y="436.5" width="2.8" height="11.5" fill="#5bc6f1"/><rect x="364.0" y="436.5" width="2.3" height="11.5" fill="#66ad6a"/><rect x="366.0" y="436.5" width="9.3" height="11.5" fill="#5bc6f1"/><rect x="375.0" y="436.5" width="55.3" height="11.5" fill="#2f66c8"/><rect x="430.0" y="436.5" width="1.5" height="11.5" fill="#66ad6a"/><rect x="431.2" y="436.5" width="6.8" height="11.5" fill="#2f66c8"/><rect x="437.7" y="436.5" width="2.1" height="11.5" fill="#66ad6a"/><rect x="439.5" y="436.5" width="2.3" height="11.5" fill="#e5404e"/><rect x="441.5" y="436.5" width="2.8" height="11.5" fill="#2f66c8"/><rect x="444.0" y="436.5" width="6.3" height="11.5" fill="#e5404e"/><rect x="450.0" y="436.5" width="3.3" height="11.5" fill="#5bc6f1"/><rect x="453.0" y="436.5" width="2.3" height="11.5" fill="#66ad6a"/><rect x="455.0" y="436.5" width="2.8" height="11.5" fill="#5bc6f1"/><rect x="457.5" y="436.5" width="1.8" height="11.5" fill="#66ad6a"/><rect x="459.0" y="436.5" width="17.8" height="11.5" fill="#2f66c8"/><rect x="476.5" y="436.5" width="1.3" height="11.5" fill="#66ad6a"/><rect x="477.5" y="436.5" width="25.5" height="11.5" fill="#2f66c8"/><rect x="502.7" y="436.5" width="2.1" height="11.5" fill="#1c1f5e"/><rect x="504.5" y="436.5" width="1.8" height="11.5" fill="#2f66c8"/><rect x="506.0" y="436.5" width="1.9" height="11.5" fill="#1c1f5e"/><rect x="507.6" y="436.5" width="18.2" height="11.5" fill="#2f66c8"/><rect x="525.5" y="436.5" width="1.8" height="11.5" fill="#1c1f5e"/><rect x="527.0" y="436.5" width="1.3" height="11.5" fill="#66ad6a"/><rect x="528.0" y="436.5" width="1.8" height="11.5" fill="#5bc6f1"/><rect x="529.5" y="436.5" width="33.5" height="11.5" fill="#2f66c8"/><rect x="562.7" y="436.5" width="3.6" height="11.5" fill="#e5404e"/><rect x="566.0" y="436.5" width="1.3" height="11.5" fill="#66ad6a"/><rect x="567.0" y="436.5" width="4.3" height="11.5" fill="#e5404e"/><rect x="571.0" y="436.5" width="1.3" height="11.5" fill="#66ad6a"/><rect x="572.0" y="436.5" width="4.3" height="11.5" fill="#e5404e"/><rect x="576.0" y="436.5" width="1.3" height="11.5" fill="#66ad6a"/><rect x="577.0" y="436.5" width="7.3" height="11.5" fill="#e5404e"/><rect x="584.0" y="436.5" width="1.3" height="11.5" fill="#66ad6a"/><rect x="585.0" y="436.5" width="5.3" height="11.5" fill="#e5404e"/><rect x="590.0" y="436.5" width="1.3" height="11.5" fill="#66ad6a"/><rect x="591.0" y="436.5" width="19.2" height="11.5" fill="#e5404e"/><rect x="609.9" y="436.5" width="1.4" height="11.5" fill="#66ad6a"/><rect x="611.0" y="436.5" width="9.3" height="11.5" fill="#e5404e"/><rect x="620.0" y="436.5" width="1.3" height="11.5" fill="#66ad6a"/><rect x="621.0" y="436.5" width="3.1" height="11.5" fill="#e5404e"/><rect x="623.8" y="436.5" width="6.0" height="11.5" fill="#2f66c8"/><rect x="629.5" y="436.5" width="1.8" height="11.5" fill="#5bc6f1"/><rect x="631.0" y="436.5" width="3.4" height="11.5" fill="#2f66c8"/><rect x="634.1" y="436.5" width="24.4" height="11.5" fill="#66ad6a"/><rect x="658.2" y="436.5" width="3.1" height="11.5" fill="#5bc6f1"/><rect x="661.0" y="436.5" width="4.3" height="11.5" fill="#66ad6a"/><rect x="665.0" y="436.5" width="2.3" height="11.5" fill="#5bc6f1"/><rect x="667.0" y="436.5" width="7.3" height="11.5" fill="#66ad6a"/><rect x="674.0" y="436.5" width="2.3" height="11.5" fill="#5bc6f1"/><rect x="676.0" y="436.5" width="2.3" height="11.5" fill="#66ad6a"/><rect x="678.0" y="436.5" width="28.6" height="11.5" fill="#2f66c8"/><rect x="706.3" y="436.5" width="2.0" height="11.5" fill="#5bc6f1"/><rect x="708.0" y="436.5" width="4.8" height="11.5" fill="#2f66c8"/><rect x="712.5" y="436.5" width="1.8" height="11.5" fill="#1c1f5e"/><rect x="714.0" y="436.5" width="42.2" height="11.5" fill="#2f66c8"/><rect x="755.9" y="436.5" width="1.4" height="11.5" fill="#1c1f5e"/><rect x="757.0" y="436.5" width="10.2" height="11.5" fill="#66ad6a"/><rect x="766.9" y="436.5" width="10.8" height="11.5" fill="#5bc6f1"/><rect x="777.4" y="436.5" width="7.1" height="11.5" fill="#66ad6a"/><rect x="784.2" y="436.5" width="2.1" height="11.5" fill="#5bc6f1"/><rect x="786.0" y="436.5" width="7.0" height="11.5" fill="#2f66c8"/><rect x="792.7" y="436.5" width="6.6" height="11.5" fill="#e5404e"/><rect x="799.0" y="436.5" width="1.3" height="11.5" fill="#66ad6a"/><rect x="800.0" y="436.5" width="5.3" height="11.5" fill="#e5404e"/><rect x="805.0" y="436.5" width="1.3" height="11.5" fill="#66ad6a"/><rect x="806.0" y="436.5" width="14.3" height="11.5" fill="#e5404e"/><rect x="820.0" y="436.5" width="1.3" height="11.5" fill="#66ad6a"/><rect x="821.0" y="436.5" width="6.3" height="11.5" fill="#e5404e"/><rect x="827.0" y="436.5" width="1.3" height="11.5" fill="#66ad6a"/><rect x="828.0" y="436.5" width="14.3" height="11.5" fill="#e5404e"/><rect x="842.0" y="436.5" width="1.3" height="11.5" fill="#66ad6a"/><rect x="843.0" y="436.5" width="5.0" height="11.5" fill="#e5404e"/><rect x="847.7" y="436.5" width="26.6" height="11.5" fill="#2f66c8"/><rect x="874.0" y="436.5" width="1.3" height="11.5" fill="#5bc6f1"/><rect x="875.0" y="436.5" width="25.6" height="11.5" fill="#2f66c8"/><rect x="900.3" y="436.5" width="2.5" height="11.5" fill="#66ad6a"/><rect x="902.5" y="436.5" width="2.8" height="11.5" fill="#5bc6f1"/><rect x="905.0" y="436.5" width="16.3" height="11.5" fill="#2f66c8"/><rect x="921.0" y="436.5" width="2.3" height="11.5" fill="#1c1f5e"/><rect x="923.0" y="436.5" width="3.3" height="11.5" fill="#2f66c8"/><rect x="926.0" y="436.5" width="2.3" height="11.5" fill="#1c1f5e"/><rect x="928.0" y="436.5" width="12.0" height="11.5" fill="#2f66c8"/><rect x="939.7" y="436.5" width="17.6" height="11.5" fill="#e5404e"/><rect x="957.0" y="436.5" width="1.3" height="11.5" fill="#66ad6a"/><rect x="958.0" y="436.5" width="18.7" height="11.5" fill="#e5404e"/><rect x="976.4" y="436.5" width="5.3" height="11.5" fill="#66ad6a"/><rect x="981.4" y="436.5" width="3.3" height="11.5" fill="#5bc6f1"/><rect x="984.4" y="436.5" width="38.9" height="11.5" fill="#2f66c8"/><rect x="1023.0" y="436.5" width="1.3" height="11.5" fill="#e5404e"/><rect x="1024.0" y="436.5" width="20.3" height="11.5" fill="#2f66c8"/><rect x="1044.0" y="436.5" width="10.3" height="11.5" fill="#e5404e"/><rect x="1054.0" y="436.5" width="1.3" height="11.5" fill="#66ad6a"/><rect x="1055.0" y="436.5" width="23.3" height="11.5" fill="#e5404e"/><rect x="1078.0" y="436.5" width="1.3" height="11.5" fill="#66ad6a"/><rect x="1079.0" y="436.5" width="6.0" height="11.5" fill="#e5404e"/><rect x="1084.7" y="436.5" width="3.6" height="11.5" fill="#66ad6a"/><rect x="1088.0" y="436.5" width="11.3" height="11.5" fill="#5bc6f1"/><rect x="1099.0" y="436.5" width="37.7" height="11.5" fill="#2f66c8"/><rect x="1136.4" y="436.5" width="5.2" height="11.5" fill="#5bc6f1"/><rect x="1141.3" y="436.5" width="3.7" height="11.5" fill="#2f66c8"/><rect x="1144.7" y="436.5" width="8.6" height="11.5" fill="#1c1f5e"/><rect x="1153.0" y="436.5" width="3.8" height="11.5" fill="#e5404e"/><rect x="1156.5" y="436.5" width="1.3" height="11.5" fill="#66ad6a"/><rect x="1157.5" y="436.5" width="2.8" height="11.5" fill="#e5404e"/><rect x="1160.0" y="436.5" width="1.3" height="11.5" fill="#66ad6a"/><rect x="1161.0" y="436.5" width="4.3" height="11.5" fill="#e5404e"/><rect x="1165.0" y="436.5" width="1.3" height="11.5" fill="#66ad6a"/><rect x="1166.0" y="436.5" width="6.3" height="11.5" fill="#e5404e"/><rect x="1172.0" y="436.5" width="1.3" height="11.5" fill="#66ad6a"/><rect x="1173.0" y="436.5" width="5.3" height="11.5" fill="#e5404e"/><rect x="1178.0" y="436.5" width="1.3" height="11.5" fill="#66ad6a"/><rect x="1179.0" y="436.5" width="3.0" height="11.5" fill="#e5404e"/><rect x="1181.7" y="436.5" width="3.3" height="11.5" fill="#66ad6a"/><rect x="1184.7" y="436.5" width="2.6" height="11.5" fill="#5bc6f1"/><rect x="1187.0" y="436.5" width="1.3" height="11.5" fill="#66ad6a"/><rect x="1188.0" y="436.5" width="8.5" height="11.5" fill="#5bc6f1"/><rect x="1196.2" y="436.5" width="2.1" height="11.5" fill="#2f66c8"/><rect x="1198.0" y="436.5" width="241.3" height="11.5" fill="#66ad6a"/><path d="M305.5 436.5v11.5M308.5 436.5v11.5M311.5 436.5v11.5M314.5 436.5v11.5M317.5 436.5v11.5M320.5 436.5v11.5M323.5 436.5v11.5M326.5 436.5v11.5M329.5 436.5v11.5M332.5 436.5v11.5M335.5 436.5v11.5M338.5 436.5v11.5M341.5 436.5v11.5M344.5 436.5v11.5M347.5 436.5v11.5M350.5 436.5v11.5M353.5 436.5v11.5M356.5 436.5v11.5M359.5 436.5v11.5M362.5 436.5v11.5M365.5 436.5v11.5M368.5 436.5v11.5M371.5 436.5v11.5M374.5 436.5v11.5M377.5 436.5v11.5M380.5 436.5v11.5M383.5 436.5v11.5M386.5 436.5v11.5M389.5 436.5v11.5M392.5 436.5v11.5M395.5 436.5v11.5M398.5 436.5v11.5M401.5 436.5v11.5M404.5 436.5v11.5M407.5 436.5v11.5M410.5 436.5v11.5M413.5 436.5v11.5M416.5 436.5v11.5M419.5 436.5v11.5M422.5 436.5v11.5M425.5 436.5v11.5M428.5 436.5v11.5M431.5 436.5v11.5M434.5 436.5v11.5M437.5 436.5v11.5M440.5 436.5v11.5M443.5 436.5v11.5M446.5 436.5v11.5M449.5 436.5v11.5M452.5 436.5v11.5M455.5 436.5v11.5M458.5 436.5v11.5M461.5 436.5v11.5M464.5 436.5v11.5M467.5 436.5v11.5M470.5 436.5v11.5M473.5 436.5v11.5M476.5 436.5v11.5M479.5 436.5v11.5M482.5 436.5v11.5M485.5 436.5v11.5M488.5 436.5v11.5M491.5 436.5v11.5M494.5 436.5v11.5M497.5 436.5v11.5M500.5 436.5v11.5M503.5 436.5v11.5M506.5 436.5v11.5M509.5 436.5v11.5M512.5 436.5v11.5M515.5 436.5v11.5M518.5 436.5v11.5M521.5 436.5v11.5M524.5 436.5v11.5M527.5 436.5v11.5M530.5 436.5v11.5M533.5 436.5v11.5M536.5 436.5v11.5M539.5 436.5v11.5M542.5 436.5v11.5M545.5 436.5v11.5M548.5 436.5v11.5M551.5 436.5v11.5M554.5 436.5v11.5M557.5 436.5v11.5M560.5 436.5v11.5M563.5 436.5v11.5M566.5 436.5v11.5M569.5 436.5v11.5M572.5 436.5v11.5M575.5 436.5v11.5M578.5 436.5v11.5M581.5 436.5v11.5M584.5 436.5v11.5M587.5 436.5v11.5M590.5 436.5v11.5M593.5 436.5v11.5M596.5 436.5v11.5M599.5 436.5v11.5M602.5 436.5v11.5M605.5 436.5v11.5M608.5 436.5v11.5M611.5 436.5v11.5M614.5 436.5v11.5M617.5 436.5v11.5M620.5 436.5v11.5M623.5 436.5v11.5M626.5 436.5v11.5M629.5 436.5v11.5M632.5 436.5v11.5M635.5 436.5v11.5M638.5 436.5v11.5M641.5 436.5v11.5M644.5 436.5v11.5M647.5 436.5v11.5M650.5 436.5v11.5M653.5 436.5v11.5M656.5 436.5v11.5M659.5 436.5v11.5M662.5 436.5v11.5M665.5 436.5v11.5M668.5 436.5v11.5M671.5 436.5v11.5M674.5 436.5v11.5M677.5 436.5v11.5M680.5 436.5v11.5M683.5 436.5v11.5M686.5 436.5v11.5M689.5 436.5v11.5M692.5 436.5v11.5M695.5 436.5v11.5M698.5 436.5v11.5M701.5 436.5v11.5M704.5 436.5v11.5M707.5 436.5v11.5M710.5 436.5v11.5M713.5 436.5v11.5M716.5 436.5v11.5M719.5 436.5v11.5M722.5 436.5v11.5M725.5 436.5v11.5M728.5 436.5v11.5M731.5 436.5v11.5M734.5 436.5v11.5M737.5 436.5v11.5M740.5 436.5v11.5M743.5 436.5v11.5M746.5 436.5v11.5M749.5 436.5v11.5M752.5 436.5v11.5M755.5 436.5v11.5M758.5 436.5v11.5M761.5 436.5v11.5M764.5 436.5v11.5M767.5 436.5v11.5M770.5 436.5v11.5M773.5 436.5v11.5M776.5 436.5v11.5M779.5 436.5v11.5M782.5 436.5v11.5M785.5 436.5v11.5M788.5 436.5v11.5M791.5 436.5v11.5M794.5 436.5v11.5M797.5 436.5v11.5M800.5 436.5v11.5M803.5 436.5v11.5M806.5 436.5v11.5M809.5 436.5v11.5M812.5 436.5v11.5M815.5 436.5v11.5M818.5 436.5v11.5M821.5 436.5v11.5M824.5 436.5v11.5M827.5 436.5v11.5M830.5 436.5v11.5M833.5 436.5v11.5M836.5 436.5v11.5M839.5 436.5v11.5M842.5 436.5v11.5M845.5 436.5v11.5M848.5 436.5v11.5M851.5 436.5v11.5M854.5 436.5v11.5M857.5 436.5v11.5M860.5 436.5v11.5M863.5 436.5v11.5M866.5 436.5v11.5M869.5 436.5v11.5M872.5 436.5v11.5M875.5 436.5v11.5M878.5 436.5v11.5M881.5 436.5v11.5M884.5 436.5v11.5M887.5 436.5v11.5M890.5 436.5v11.5M893.5 436.5v11.5M896.5 436.5v11.5M899.5 436.5v11.5M902.5 436.5v11.5M905.5 436.5v11.5M908.5 436.5v11.5M911.5 436.5v11.5M914.5 436.5v11.5M917.5 436.5v11.5M920.5 436.5v11.5M923.5 436.5v11.5M926.5 436.5v11.5M929.5 436.5v11.5M932.5 436.5v11.5M935.5 436.5v11.5M938.5 436.5v11.5M941.5 436.5v11.5M944.5 436.5v11.5M947.5 436.5v11.5M950.5 436.5v11.5M953.5 436.5v11.5M956.5 436.5v11.5M959.5 436.5v11.5M962.5 436.5v11.5M965.5 436.5v11.5M968.5 436.5v11.5M971.5 436.5v11.5M974.5 436.5v11.5M977.5 436.5v11.5M980.5 436.5v11.5M983.5 436.5v11.5M986.5 436.5v11.5M989.5 436.5v11.5M992.5 436.5v11.5M995.5 436.5v11.5M998.5 436.5v11.5M1001.5 436.5v11.5M1004.5 436.5v11.5M1007.5 436.5v11.5M1010.5 436.5v11.5M1013.5 436.5v11.5M1016.5 436.5v11.5M1019.5 436.5v11.5M1022.5 436.5v11.5M1025.5 436.5v11.5M1028.5 436.5v11.5M1031.5 436.5v11.5M1034.5 436.5v11.5M1037.5 436.5v11.5M1040.5 436.5v11.5M1043.5 436.5v11.5M1046.5 436.5v11.5M1049.5 436.5v11.5M1052.5 436.5v11.5M1055.5 436.5v11.5M1058.5 436.5v11.5M1061.5 436.5v11.5M1064.5 436.5v11.5M1067.5 436.5v11.5M1070.5 436.5v11.5M1073.5 436.5v11.5M1076.5 436.5v11.5M1079.5 436.5v11.5M1082.5 436.5v11.5M1085.5 436.5v11.5M1088.5 436.5v11.5M1091.5 436.5v11.5M1094.5 436.5v11.5M1097.5 436.5v11.5M1100.5 436.5v11.5M1103.5 436.5v11.5M1106.5 436.5v11.5M1109.5 436.5v11.5M1112.5 436.5v11.5M1115.5 436.5v11.5M1118.5 436.5v11.5M1121.5 436.5v11.5M1124.5 436.5v11.5M1127.5 436.5v11.5M1130.5 436.5v11.5M1133.5 436.5v11.5M1136.5 436.5v11.5M1139.5 436.5v11.5M1142.5 436.5v11.5M1145.5 436.5v11.5M1148.5 436.5v11.5M1151.5 436.5v11.5M1154.5 436.5v11.5M1157.5 436.5v11.5M1160.5 436.5v11.5M1163.5 436.5v11.5M1166.5 436.5v11.5M1169.5 436.5v11.5M1172.5 436.5v11.5M1175.5 436.5v11.5M1178.5 436.5v11.5M1181.5 436.5v11.5M1184.5 436.5v11.5M1187.5 436.5v11.5M1190.5 436.5v11.5M1193.5 436.5v11.5M1196.5 436.5v11.5M1199.5 436.5v11.5M1202.5 436.5v11.5M1205.5 436.5v11.5M1208.5 436.5v11.5M1211.5 436.5v11.5M1214.5 436.5v11.5M1217.5 436.5v11.5M1220.5 436.5v11.5M1223.5 436.5v11.5M1226.5 436.5v11.5M1229.5 436.5v11.5M1232.5 436.5v11.5M1235.5 436.5v11.5M1238.5 436.5v11.5M1241.5 436.5v11.5M1244.5 436.5v11.5M1247.5 436.5v11.5M1250.5 436.5v11.5M1253.5 436.5v11.5M1256.5 436.5v11.5M1259.5 436.5v11.5M1262.5 436.5v11.5M1265.5 436.5v11.5M1268.5 436.5v11.5M1271.5 436.5v11.5M1274.5 436.5v11.5M1277.5 436.5v11.5M1280.5 436.5v11.5M1283.5 436.5v11.5M1286.5 436.5v11.5M1289.5 436.5v11.5M1292.5 436.5v11.5M1295.5 436.5v11.5M1298.5 436.5v11.5M1301.5 436.5v11.5M1304.5 436.5v11.5M1307.5 436.5v11.5M1310.5 436.5v11.5M1313.5 436.5v11.5M1316.5 436.5v11.5M1319.5 436.5v11.5M1322.5 436.5v11.5M1325.5 436.5v11.5M1328.5 436.5v11.5M1331.5 436.5v11.5M1334.5 436.5v11.5M1337.5 436.5v11.5M1340.5 436.5v11.5M1343.5 436.5v11.5M1346.5 436.5v11.5M1349.5 436.5v11.5M1352.5 436.5v11.5M1355.5 436.5v11.5M1358.5 436.5v11.5M1361.5 436.5v11.5M1364.5 436.5v11.5M1367.5 436.5v11.5M1370.5 436.5v11.5M1373.5 436.5v11.5M1376.5 436.5v11.5M1379.5 436.5v11.5M1382.5 436.5v11.5M1385.5 436.5v11.5M1388.5 436.5v11.5M1391.5 436.5v11.5M1394.5 436.5v11.5M1397.5 436.5v11.5M1400.5 436.5v11.5M1403.5 436.5v11.5M1406.5 436.5v11.5M1409.5 436.5v11.5M1412.5 436.5v11.5M1415.5 436.5v11.5M1418.5 436.5v11.5M1421.5 436.5v11.5M1424.5 436.5v11.5M1427.5 436.5v11.5M1430.5 436.5v11.5M1433.5 436.5v11.5M1436.5 436.5v11.5" stroke="#000" stroke-width="0.6" opacity="0.06"/><circle cx="872.7" cy="468.5" r="1.8" fill="#111"/><rect x="304.5" y="487.5" width="1134" height="320" fill="#fff" stroke="#888" stroke-width="1"/><line x1="396" y1="500" x2="1397" y2="500" stroke="#1f55c0" stroke-width="3"/><line x1="396" y1="604.5" x2="1397" y2="604.5" stroke="#ccc" stroke-width="1"/><line x1="396" y1="731.8" x2="1397" y2="731.8" stroke="#ccc" stroke-width="1"/><path d="M396.0 716.6 L396.5 719.4 L397.0 715.4 L397.5 720.0 L398.0 716.1 L398.5 720.3 L399.0 722.9 L399.5 727.0 L400.0 727.5 L400.5 721.6 L401.0 722.7 L401.5 732.7 L402.0 745.3 L402.5 737.0 L403.0 744.1 L403.5 749.6 L404.0 747.3 L404.5 747.0 L405.0 738.3 L405.5 739.3 L406.0 727.1 L406.5 711.3 L407.0 710.0 L407.5 701.6 L408.0 707.6 L408.5 711.7 L409.0 717.2 L409.5 729.0 L410.0 727.1 L410.5 729.4 L411.0 728.0 L411.5 724.5 L412.0 717.2 L412.5 708.5 L413.0 717.4 L413.5 710.8 L414.0 695.1 L414.5 693.1 L415.0 688.1 L415.5 688.8 L416.0 697.1 L416.5 700.4 L417.0 707.2 L417.5 717.5 L418.0 738.9 L418.5 744.4 L419.0 756.5 L419.5 769.8 L420.0 775.1 L420.5 778.0 L421.0 783.1 L421.5 802.1 L422.0 793.8 L422.5 779.0 L423.0 766.7 L423.5 762.4 L424.0 753.5 L424.5 733.4 L425.0 729.3 L425.5 736.4 L426.0 738.1 L426.5 725.0 L427.0 738.5 L427.5 745.9 L428.0 744.8 L428.5 752.3 L429.0 751.0 L429.5 754.0 L430.0 748.6 L430.5 744.4 L431.0 742.5 L431.5 734.1 L432.0 734.5 L432.5 732.7 L433.0 726.6 L433.5 727.9 L434.0 712.9 L434.5 717.5 L435.0 720.6 L435.5 724.6 L436.0 734.4 L436.5 741.9 L437.0 742.5 L437.5 742.8 L438.0 743.7 L438.5 758.2 L439.0 762.9 L439.5 767.9 L440.0 777.7 L440.5 782.1 L441.0 787.0 L441.5 796.2 L442.0 790.0 L442.5 788.6 L443.0 771.6 L443.5 768.3 L444.0 762.8 L444.5 754.4 L445.0 741.9 L445.5 738.2 L446.0 730.2 L446.5 736.4 L447.0 733.3 L447.5 725.2 L448.0 725.5 L448.5 719.2 L449.0 713.2 L449.5 710.1 L450.0 711.2 L450.5 721.1 L451.0 717.8 L451.5 720.5 L452.0 725.8 L452.5 729.8 L453.0 742.7 L453.5 744.6 L454.0 750.1 L454.5 753.8 L455.0 754.0 L455.5 748.6 L456.0 738.5 L456.5 736.0 L457.0 729.7 L457.5 721.7 L458.0 710.5 L458.5 711.6 L459.0 702.8 L459.5 705.9 L460.0 707.8 L460.5 705.5 L461.0 714.6 L461.5 723.0 L462.0 731.2 L462.5 727.4 L463.0 725.7 L463.5 727.9 L464.0 726.9 L464.5 723.3 L465.0 726.0 L465.5 725.3 L466.0 726.9 L466.5 718.0 L467.0 726.9 L467.5 724.0 L468.0 719.2 L468.5 713.4 L469.0 709.2 L469.5 697.8 L470.0 695.0 L470.5 690.4 L471.0 695.2 L471.5 690.0 L472.0 680.1 L472.5 671.1 L473.0 672.8 L473.5 668.2 L474.0 657.9 L474.5 660.3 L475.0 659.1 L475.5 659.1 L476.0 652.8 L476.5 650.8 L477.0 654.7 L477.5 666.4 L478.0 671.1 L478.5 678.2 L479.0 678.9 L479.5 681.7 L480.0 684.7 L480.5 680.4 L481.0 689.7 L481.5 696.5 L482.0 695.0 L482.5 705.1 L483.0 693.9 L483.5 699.8 L484.0 706.9 L484.5 714.7 L485.0 722.6 L485.5 726.6 L486.0 722.7 L486.5 721.7 L487.0 730.3 L487.5 730.7 L488.0 749.8 L488.5 749.6 L489.0 744.7 L489.5 757.6 L490.0 765.9 L490.5 769.0 L491.0 779.6 L491.5 786.6 L492.0 793.6 L492.5 794.6 L493.0 796.2 L493.5 782.3 L494.0 766.8 L494.5 767.7 L495.0 775.1 L495.5 772.5 L496.0 764.7 L496.5 764.6 L497.0 765.7 L497.5 762.7 L498.0 765.6 L498.5 777.1 L499.0 765.0 L499.5 776.8 L500.0 787.9 L500.5 784.3 L501.0 770.9 L501.5 767.0 L502.0 762.8 L502.5 751.3 L503.0 750.1 L503.5 748.9 L504.0 736.0 L504.5 732.8 L505.0 727.9 L505.5 720.3 L506.0 716.5 L506.5 716.3 L507.0 713.2 L507.5 706.9 L508.0 700.3 L508.5 694.9 L509.0 690.2 L509.5 686.7 L510.0 690.0 L510.5 689.8 L511.0 692.3 L511.5 706.8 L512.0 716.4 L512.5 724.5 L513.0 725.9 L513.5 741.9 L514.0 758.8 L514.5 752.0 L515.0 744.0 L515.5 746.4 L516.0 750.3 L516.5 742.1 L517.0 736.1 L517.5 726.8 L518.0 728.8 L518.5 733.2 L519.0 741.9 L519.5 758.4 L520.0 758.3 L520.5 760.0 L521.0 763.9 L521.5 768.0 L522.0 779.5 L522.5 775.2 L523.0 772.7 L523.5 764.7 L524.0 755.5 L524.5 755.7 L525.0 746.5 L525.5 736.0 L526.0 738.8 L526.5 736.7 L527.0 712.1 L527.5 713.7 L528.0 724.1 L528.5 724.5 L529.0 728.3 L529.5 735.5 L530.0 736.8 L530.5 746.6 L531.0 753.2 L531.5 750.2 L532.0 749.3 L532.5 762.5 L533.0 757.5 L533.5 750.1 L534.0 744.2 L534.5 738.4 L535.0 741.9 L535.5 737.1 L536.0 731.2 L536.5 726.4 L537.0 722.8 L537.5 718.0 L538.0 717.6 L538.5 711.2 L539.0 715.6 L539.5 707.8 L540.0 704.0 L540.5 703.0 L541.0 698.3 L541.5 699.2 L542.0 694.0 L542.5 693.2 L543.0 702.6 L543.5 702.4 L544.0 698.7 L544.5 702.4 L545.0 714.9 L545.5 713.4 L546.0 713.7 L546.5 712.8 L547.0 709.4 L547.5 716.3 L548.0 713.3 L548.5 718.7 L549.0 730.2 L549.5 733.1 L550.0 735.4 L550.5 736.9 L551.0 754.2 L551.5 761.5 L552.0 757.2 L552.5 762.1 L553.0 769.0 L553.5 770.1 L554.0 764.2 L554.5 772.3 L555.0 758.0 L555.5 752.5 L556.0 755.3 L556.5 757.3 L557.0 738.7 L557.5 743.8 L558.0 739.2 L558.5 740.0 L559.0 738.2 L559.5 731.2 L560.0 728.9 L560.5 730.6 L561.0 744.7 L561.5 730.7 L562.0 722.7 L562.5 729.0 L563.0 728.5 L563.5 719.4 L564.0 721.3 L564.5 713.7 L565.0 714.0 L565.5 708.1 L566.0 706.5 L566.5 699.8 L567.0 695.9 L567.5 703.6 L568.0 706.1 L568.5 706.4 L569.0 714.9 L569.5 725.9 L570.0 730.1 L570.5 731.3 L571.0 729.0 L571.5 731.8 L572.0 741.6 L572.5 745.8 L573.0 742.2 L573.5 732.2 L574.0 738.2 L574.5 737.9 L575.0 736.8 L575.5 736.8 L576.0 734.3 L576.5 731.5 L577.0 732.0 L577.5 732.9 L578.0 727.5 L578.5 729.9 L579.0 726.1 L579.5 717.3 L580.0 716.0 L580.5 710.9 L581.0 720.0 L581.5 718.5 L582.0 720.9 L582.5 719.6 L583.0 721.9 L583.5 725.2 L584.0 732.4 L584.5 741.1 L585.0 745.5 L585.5 741.5 L586.0 741.8 L586.5 752.7 L587.0 745.5 L587.5 757.5 L588.0 751.0 L588.5 751.3 L589.0 746.3 L589.5 742.9 L590.0 739.8 L590.5 732.5 L591.0 729.5 L591.5 719.3 L592.0 722.8 L592.5 722.2 L593.0 717.5 L593.5 712.2 L594.0 711.3 L594.5 721.2 L595.0 716.5 L595.5 709.7 L596.0 713.3 L596.5 710.2 L597.0 698.4 L597.5 700.8 L598.0 703.3 L598.5 700.2 L599.0 705.0 L599.5 700.4 L600.0 695.6 L600.5 698.5 L601.0 695.9 L601.5 698.1 L602.0 684.7 L602.5 679.8 L603.0 676.1 L603.5 675.3 L604.0 667.3 L604.5 663.6 L605.0 677.1 L605.5 672.0 L606.0 664.3 L606.5 670.0 L607.0 680.2 L607.5 684.3 L608.0 696.0 L608.5 703.3 L609.0 713.0 L609.5 719.6 L610.0 710.5 L610.5 710.6 L611.0 711.5 L611.5 707.7 L612.0 698.0 L612.5 688.5 L613.0 693.0 L613.5 689.7 L614.0 686.7 L614.5 685.5 L615.0 693.7 L615.5 700.9 L616.0 712.4 L616.5 725.9 L617.0 743.7 L617.5 751.9 L618.0 760.7 L618.5 769.1 L619.0 775.9 L619.5 783.7 L620.0 797.4 L620.5 795.7 L621.0 795.2 L621.5 786.6 L622.0 786.5 L622.5 796.8 L623.0 791.8 L623.5 787.0 L624.0 787.9 L624.5 793.2 L625.0 778.9 L625.5 778.1 L626.0 772.9 L626.5 762.8 L627.0 765.3 L627.5 755.3 L628.0 753.3 L628.5 745.8 L629.0 751.6 L629.5 754.1 L630.0 746.6 L630.5 752.4 L631.0 764.4 L631.5 758.0 L632.0 754.3 L632.5 766.3 L633.0 764.6 L633.5 755.3 L634.0 742.0 L634.5 741.1 L635.0 731.1 L635.5 722.7 L636.0 714.4 L636.5 706.0 L637.0 704.0 L637.5 704.7 L638.0 703.7 L638.5 694.1 L639.0 696.7 L639.5 705.5 L640.0 707.3 L640.5 714.5 L641.0 721.3 L641.5 718.9 L642.0 720.8 L642.5 726.9 L643.0 736.6 L643.5 741.3 L644.0 739.0 L644.5 733.0 L645.0 716.9 L645.5 721.6 L646.0 729.0 L646.5 714.8 L647.0 708.8 L647.5 710.4 L648.0 713.8 L648.5 719.9 L649.0 712.8 L649.5 721.7 L650.0 732.1 L650.5 742.1 L651.0 745.5 L651.5 746.4 L652.0 759.2 L652.5 771.8 L653.0 774.6 L653.5 777.2 L654.0 767.0 L654.5 759.3 L655.0 755.3 L655.5 759.3 L656.0 743.3 L656.5 734.6 L657.0 729.9 L657.5 719.5 L658.0 717.3 L658.5 722.2 L659.0 718.8 L659.5 712.8 L660.0 718.4 L660.5 723.3 L661.0 728.1 L661.5 735.5 L662.0 739.8 L662.5 740.4 L663.0 738.0 L663.5 751.0 L664.0 760.9 L664.5 760.2 L665.0 762.2 L665.5 762.7 L666.0 748.7 L666.5 738.8 L667.0 729.1 L667.5 728.7 L668.0 737.1 L668.5 724.6 L669.0 715.9 L669.5 715.4 L670.0 712.7 L670.5 712.6 L671.0 702.1 L671.5 699.4 L672.0 695.4 L672.5 692.2 L673.0 695.3 L673.5 707.1 L674.0 711.7 L674.5 714.1 L675.0 720.2 L675.5 723.2 L676.0 740.2 L676.5 748.7 L677.0 759.4 L677.5 764.3 L678.0 769.8 L678.5 768.2 L679.0 769.7 L679.5 777.6 L680.0 770.8 L680.5 758.8 L681.0 751.6 L681.5 754.5 L682.0 748.1 L682.5 730.4 L683.0 723.9 L683.5 713.3 L684.0 703.6 L684.5 699.3 L685.0 702.2 L685.5 706.2 L686.0 704.2 L686.5 695.9 L687.0 698.5 L687.5 696.9 L688.0 697.1 L688.5 703.0 L689.0 694.4 L689.5 702.8 L690.0 708.1 L690.5 718.2 L691.0 716.3 L691.5 724.3 L692.0 734.8 L692.5 742.8 L693.0 745.8 L693.5 752.0 L694.0 751.8 L694.5 750.9 L695.0 751.2 L695.5 753.6 L696.0 753.1 L696.5 749.2 L697.0 756.3 L697.5 755.4 L698.0 753.8 L698.5 750.0 L699.0 747.1 L699.5 735.8 L700.0 741.8 L700.5 750.9 L701.0 756.3 L701.5 754.6 L702.0 763.2 L702.5 767.0 L703.0 767.3 L703.5 758.2 L704.0 762.8 L704.5 752.5 L705.0 745.7 L705.5 745.0 L706.0 750.9 L706.5 747.0 L707.0 748.0 L707.5 753.0 L708.0 757.4 L708.5 758.9 L709.0 764.4 L709.5 773.8 L710.0 790.1 L710.5 783.7 L711.0 758.6 L711.5 760.3 L712.0 751.0 L712.5 744.4 L713.0 735.3 L713.5 725.9 L714.0 720.5 L714.5 714.5 L715.0 711.0 L715.5 707.6 L716.0 707.1 L716.5 709.3 L717.0 715.5 L717.5 710.9 L718.0 706.0 L718.5 700.9 L719.0 697.7 L719.5 705.0 L720.0 706.8 L720.5 714.2 L721.0 707.3 L721.5 712.3 L722.0 716.5 L722.5 721.7 L723.0 735.5 L723.5 739.6 L724.0 737.4 L724.5 734.2 L725.0 725.1 L725.5 721.7 L726.0 715.3 L726.5 703.6 L727.0 700.8 L727.5 701.0 L728.0 702.2 L728.5 703.5 L729.0 704.2 L729.5 704.0 L730.0 710.1 L730.5 718.2 L731.0 716.9 L731.5 715.6 L732.0 722.0 L732.5 723.2 L733.0 713.9 L733.5 715.8 L734.0 719.7 L734.5 723.9 L735.0 722.1 L735.5 715.5 L736.0 721.0 L736.5 725.5 L737.0 720.9 L737.5 719.0 L738.0 719.2 L738.5 726.0 L739.0 732.3 L739.5 739.5 L740.0 741.9 L740.5 745.7 L741.0 746.9 L741.5 751.1 L742.0 760.5 L742.5 759.2 L743.0 753.2 L743.5 740.9 L744.0 736.8 L744.5 745.9 L745.0 744.1 L745.5 739.2 L746.0 732.5 L746.5 725.4 L747.0 732.3 L747.5 725.1 L748.0 724.4 L748.5 723.2 L749.0 711.5 L749.5 705.3 L750.0 710.9 L750.5 711.0 L751.0 706.0 L751.5 703.2 L752.0 700.9 L752.5 712.7 L753.0 716.1 L753.5 713.9 L754.0 714.4 L754.5 707.2 L755.0 710.4 L755.5 720.4 L756.0 722.2 L756.5 728.5 L757.0 735.5 L757.5 736.5 L758.0 741.6 L758.5 742.4 L759.0 740.5 L759.5 747.6 L760.0 755.8 L760.5 757.9 L761.0 754.8 L761.5 749.4 L762.0 742.5 L762.5 740.9 L763.0 736.4 L763.5 737.1 L764.0 724.3 L764.5 717.8 L765.0 719.5 L765.5 720.5 L766.0 723.4 L766.5 722.5 L767.0 731.6 L767.5 721.5 L768.0 726.8 L768.5 732.2 L769.0 728.4 L769.5 740.4 L770.0 742.0 L770.5 728.4 L771.0 726.3 L771.5 725.9 L772.0 718.4 L772.5 713.0 L773.0 708.4 L773.5 705.6 L774.0 702.0 L774.5 699.7 L775.0 704.5 L775.5 708.3 L776.0 715.2 L776.5 711.8 L777.0 713.1 L777.5 723.8 L778.0 728.8 L778.5 725.7 L779.0 720.7 L779.5 724.8 L780.0 727.0 L780.5 727.9 L781.0 724.1 L781.5 722.6 L782.0 715.5 L782.5 714.8 L783.0 712.2 L783.5 706.0 L784.0 707.1 L784.5 723.9 L785.0 736.8 L785.5 754.1 L786.0 774.6 L786.5 768.8 L787.0 754.3 L787.5 743.2 L788.0 741.0 L788.5 738.7 L789.0 728.5 L789.5 719.9 L790.0 711.7 L790.5 707.2 L791.0 716.4 L791.5 704.2 L792.0 699.0 L792.5 699.4 L793.0 690.2 L793.5 689.4 L794.0 684.4 L794.5 684.1 L795.0 685.2 L795.5 680.9 L796.0 692.6 L796.5 688.3 L797.0 686.6 L797.5 694.5 L798.0 695.7 L798.5 699.4 L799.0 709.8 L799.5 696.9 L800.0 696.5 L800.5 713.6 L801.0 712.5 L801.5 718.2 L802.0 723.8 L802.5 722.9 L803.0 723.7 L803.5 727.1 L804.0 723.5 L804.5 728.0 L805.0 740.2 L805.5 748.3 L806.0 745.5 L806.5 736.3 L807.0 733.6 L807.5 731.2 L808.0 741.5 L808.5 738.6 L809.0 737.6 L809.5 739.5 L810.0 741.8 L810.5 738.3 L811.0 744.6 L811.5 747.3 L812.0 751.5 L812.5 750.6 L813.0 750.8 L813.5 758.2 L814.0 755.2 L814.5 763.2 L815.0 767.6 L815.5 770.1 L816.0 771.7 L816.5 783.7 L817.0 787.8 L817.5 767.7 L818.0 762.8 L818.5 758.5 L819.0 759.7 L819.5 755.0 L820.0 750.1 L820.5 755.2 L821.0 747.7 L821.5 743.3 L822.0 735.9 L822.5 733.5 L823.0 725.4 L823.5 716.2 L824.0 726.7 L824.5 723.7 L825.0 721.0 L825.5 720.6 L826.0 711.2 L826.5 707.1 L827.0 705.8 L827.5 709.8 L828.0 703.1 L828.5 699.6 L829.0 698.2 L829.5 707.9 L830.0 717.6 L830.5 721.2 L831.0 727.2 L831.5 736.9 L832.0 743.6 L832.5 750.2 L833.0 755.5 L833.5 759.9 L834.0 751.9 L834.5 753.5 L835.0 759.9 L835.5 754.5 L836.0 750.3 L836.5 757.2 L837.0 762.5 L837.5 762.6 L838.0 758.6 L838.5 757.7 L839.0 760.1 L839.5 761.8 L840.0 756.5 L840.5 748.6 L841.0 745.3 L841.5 744.0 L842.0 750.3 L842.5 750.2 L843.0 745.4 L843.5 742.6 L844.0 734.3 L844.5 734.2 L845.0 739.4 L845.5 739.7 L846.0 724.8 L846.5 734.1 L847.0 725.9 L847.5 712.1 L848.0 712.6 L848.5 712.6 L849.0 702.2 L849.5 697.0 L850.0 694.4 L850.5 693.9 L851.0 699.0 L851.5 707.4 L852.0 716.8 L852.5 720.4 L853.0 726.5 L853.5 726.7 L854.0 730.9 L854.5 744.0 L855.0 743.7 L855.5 741.4 L856.0 752.9 L856.5 746.9 L857.0 752.6 L857.5 755.5 L858.0 758.6 L858.5 748.0 L859.0 749.4 L859.5 750.4 L860.0 750.5 L860.5 747.3 L861.0 738.1 L861.5 724.6 L862.0 716.3 L862.5 712.3 L863.0 697.6 L863.5 695.4 L864.0 677.8 L864.5 663.4 L865.0 664.1 L865.5 667.9 L866.0 663.0 L866.5 679.5 L867.0 684.3 L867.5 681.8 L868.0 693.9 L868.5 696.6 L869.0 698.7 L869.5 709.2 L870.0 712.1 L870.5 707.5 L871.0 709.6 L871.5 708.9 L872.0 706.6 L872.5 707.2 L873.0 712.2 L873.5 717.5 L874.0 718.0 L874.5 722.9 L875.0 731.6 L875.5 734.7 L876.0 735.3 L876.5 736.2 L877.0 750.7 L877.5 758.1 L878.0 759.9 L878.5 762.6 L879.0 770.3 L879.5 772.8 L880.0 769.2 L880.5 763.7 L881.0 749.9 L881.5 741.9 L882.0 742.8 L882.5 736.8 L883.0 733.7 L883.5 732.1 L884.0 726.0 L884.5 727.7 L885.0 728.1 L885.5 733.4 L886.0 721.3 L886.5 722.9 L887.0 727.3 L887.5 734.8 L888.0 739.1 L888.5 733.4 L889.0 729.1 L889.5 725.4 L890.0 735.4 L890.5 738.5 L891.0 723.3 L891.5 730.4 L892.0 727.9 L892.5 714.5 L893.0 716.4 L893.5 703.1 L894.0 706.1 L894.5 708.1 L895.0 706.1 L895.5 703.0 L896.0 704.4 L896.5 708.8 L897.0 715.1 L897.5 713.7 L898.0 712.1 L898.5 699.1 L899.0 699.1 L899.5 710.7 L900.0 713.7 L900.5 707.3 L901.0 704.3 L901.5 706.2 L902.0 712.9 L902.5 714.0 L903.0 704.6 L903.5 706.5 L904.0 708.8 L904.5 711.1 L905.0 711.0 L905.5 717.0 L906.0 720.0 L906.5 723.9 L907.0 722.5 L907.5 724.0 L908.0 723.2 L908.5 721.6 L909.0 734.0 L909.5 737.0 L910.0 745.8 L910.5 761.5 L911.0 767.2 L911.5 767.6 L912.0 768.5 L912.5 762.5 L913.0 749.6 L913.5 749.7 L914.0 750.2 L914.5 744.5 L915.0 730.9 L915.5 726.7 L916.0 724.7 L916.5 727.2 L917.0 727.6 L917.5 726.5 L918.0 728.1 L918.5 733.1 L919.0 733.9 L919.5 738.7 L920.0 739.3 L920.5 753.1 L921.0 749.5 L921.5 751.9 L922.0 749.8 L922.5 753.8 L923.0 753.9 L923.5 752.1 L924.0 750.9 L924.5 749.9 L925.0 756.1 L925.5 759.5 L926.0 773.6 L926.5 770.2 L927.0 776.2 L927.5 780.0 L928.0 777.2 L928.5 774.0 L929.0 767.3 L929.5 753.9 L930.0 742.7 L930.5 738.8 L931.0 735.3 L931.5 731.4 L932.0 728.3 L932.5 732.6 L933.0 736.0 L933.5 746.5 L934.0 747.0 L934.5 743.3 L935.0 749.8 L935.5 752.2 L936.0 755.8 L936.5 749.4 L937.0 739.3 L937.5 748.1 L938.0 752.7 L938.5 751.4 L939.0 751.2 L939.5 740.2 L940.0 740.9 L940.5 735.9 L941.0 729.4 L941.5 724.1 L942.0 710.2 L942.5 707.0 L943.0 714.7 L943.5 721.4 L944.0 724.6 L944.5 725.6 L945.0 726.4 L945.5 727.8 L946.0 727.9 L946.5 729.7 L947.0 731.7 L947.5 737.8 L948.0 734.2 L948.5 734.1 L949.0 732.7 L949.5 729.5 L950.0 724.5 L950.5 721.5 L951.0 724.1 L951.5 723.9 L952.0 723.9 L952.5 722.3 L953.0 723.0 L953.5 713.6 L954.0 723.5 L954.5 725.1 L955.0 718.3 L955.5 716.4 L956.0 714.7 L956.5 727.4 L957.0 716.8 L957.5 727.1 L958.0 718.0 L958.5 717.3 L959.0 719.2 L959.5 718.1 L960.0 724.9 L960.5 725.4 L961.0 724.2 L961.5 727.0 L962.0 726.7 L962.5 727.9 L963.0 731.9 L963.5 731.3 L964.0 731.9 L964.5 740.2 L965.0 730.5 L965.5 716.0 L966.0 714.0 L966.5 722.8 L967.0 719.5 L967.5 711.2 L968.0 717.5 L968.5 719.4 L969.0 707.2 L969.5 702.2 L970.0 699.2 L970.5 705.7 L971.0 707.5 L971.5 699.5 L972.0 691.3 L972.5 693.9 L973.0 685.0 L973.5 682.6 L974.0 695.1 L974.5 703.8 L975.0 699.7 L975.5 702.6 L976.0 707.9 L976.5 711.1 L977.0 712.8 L977.5 715.1 L978.0 712.5 L978.5 712.0 L979.0 721.7 L979.5 719.3 L980.0 715.6 L980.5 712.8 L981.0 719.5 L981.5 720.8 L982.0 728.3 L982.5 730.1 L983.0 732.1 L983.5 746.2 L984.0 754.3 L984.5 749.2 L985.0 743.2 L985.5 746.3 L986.0 740.1 L986.5 751.4 L987.0 738.6 L987.5 745.0 L988.0 735.4 L988.5 729.2 L989.0 738.6 L989.5 734.2 L990.0 728.3 L990.5 731.4 L991.0 727.1 L991.5 724.8 L992.0 725.7 L992.5 724.2 L993.0 724.7 L993.5 724.9 L994.0 727.2 L994.5 721.4 L995.0 711.1 L995.5 714.1 L996.0 711.6 L996.5 707.2 L997.0 704.6 L997.5 700.3 L998.0 690.5 L998.5 683.1 L999.0 692.9 L999.5 700.2 L1000.0 702.9 L1000.5 702.7 L1001.0 699.8 L1001.5 699.9 L1002.0 712.6 L1002.5 717.3 L1003.0 718.2 L1003.5 722.3 L1004.0 731.6 L1004.5 733.2 L1005.0 740.4 L1005.5 744.1 L1006.0 752.5 L1006.5 752.5 L1007.0 740.6 L1007.5 725.8 L1008.0 716.0 L1008.5 712.2 L1009.0 715.8 L1009.5 723.3 L1010.0 730.6 L1010.5 738.6 L1011.0 738.0 L1011.5 747.2 L1012.0 749.5 L1012.5 745.8 L1013.0 747.5 L1013.5 738.4 L1014.0 749.2 L1014.5 749.7 L1015.0 737.8 L1015.5 733.4 L1016.0 732.9 L1016.5 729.7 L1017.0 736.1 L1017.5 742.4 L1018.0 745.3 L1018.5 742.6 L1019.0 745.1 L1019.5 753.1 L1020.0 748.7 L1020.5 752.9 L1021.0 751.1 L1021.5 753.7 L1022.0 752.4 L1022.5 746.3 L1023.0 744.0 L1023.5 745.5 L1024.0 748.7 L1024.5 734.8 L1025.0 735.9 L1025.5 742.1 L1026.0 741.7 L1026.5 728.8 L1027.0 718.5 L1027.5 725.3 L1028.0 726.4 L1028.5 723.8 L1029.0 726.0 L1029.5 728.1 L1030.0 734.9 L1030.5 747.7 L1031.0 753.1 L1031.5 755.6 L1032.0 754.9 L1032.5 757.3 L1033.0 759.3 L1033.5 752.9 L1034.0 754.1 L1034.5 744.9 L1035.0 731.5 L1035.5 722.0 L1036.0 715.8 L1036.5 718.3 L1037.0 704.6 L1037.5 698.6 L1038.0 694.2 L1038.5 705.4 L1039.0 706.8 L1039.5 707.3 L1040.0 718.8 L1040.5 725.7 L1041.0 715.2 L1041.5 731.9 L1042.0 731.3 L1042.5 737.4 L1043.0 730.2 L1043.5 741.7 L1044.0 750.8 L1044.5 758.4 L1045.0 767.7 L1045.5 769.4 L1046.0 777.0 L1046.5 785.3 L1047.0 791.9 L1047.5 801.5 L1048.0 798.4 L1048.5 800.9 L1049.0 803.5 L1049.5 791.5 L1050.0 784.2 L1050.5 789.0 L1051.0 782.3 L1051.5 779.1 L1052.0 779.6 L1052.5 783.7 L1053.0 774.8 L1053.5 777.9 L1054.0 779.2 L1054.5 778.8 L1055.0 791.0 L1055.5 790.9 L1056.0 790.4 L1056.5 781.8 L1057.0 777.0 L1057.5 765.3 L1058.0 753.8 L1058.5 746.0 L1059.0 740.2 L1059.5 721.3 L1060.0 718.1 L1060.5 714.3 L1061.0 710.9 L1061.5 696.5 L1062.0 692.6 L1062.5 691.9 L1063.0 680.5 L1063.5 677.5 L1064.0 668.8 L1064.5 668.4 L1065.0 665.3 L1065.5 668.6 L1066.0 669.1 L1066.5 663.6 L1067.0 664.6 L1067.5 655.9 L1068.0 652.3 L1068.5 648.9 L1069.0 648.8 L1069.5 652.8 L1070.0 653.7 L1070.5 650.3 L1071.0 655.3 L1071.5 663.4 L1072.0 664.4 L1072.5 670.5 L1073.0 671.3 L1073.5 671.2 L1074.0 670.0 L1074.5 676.5 L1075.0 684.2 L1075.5 686.2 L1076.0 689.8 L1076.5 688.3 L1077.0 686.7 L1077.5 683.3 L1078.0 694.2 L1078.5 693.7 L1079.0 692.8 L1079.5 692.8 L1080.0 695.8 L1080.5 698.5 L1081.0 707.7 L1081.5 705.2 L1082.0 698.0 L1082.5 705.1 L1083.0 706.2 L1083.5 721.6 L1084.0 726.3 L1084.5 736.7 L1085.0 752.3 L1085.5 758.6 L1086.0 761.5 L1086.5 760.5 L1087.0 767.3 L1087.5 777.2 L1088.0 786.5 L1088.5 792.1 L1089.0 794.6 L1089.5 806.5 L1090.0 805.0 L1090.5 795.2 L1091.0 791.0 L1091.5 780.4 L1092.0 769.6 L1092.5 762.3 L1093.0 759.8 L1093.5 753.9 L1094.0 748.8 L1094.5 745.9 L1095.0 743.8 L1095.5 732.4 L1096.0 725.3 L1096.5 728.8 L1097.0 719.5 L1097.5 718.2 L1098.0 725.9 L1098.5 723.6 L1099.0 713.2 L1099.5 711.0 L1100.0 724.1 L1100.5 719.6 L1101.0 716.5 L1101.5 714.2 L1102.0 708.5 L1102.5 708.1 L1103.0 706.3 L1103.5 706.0 L1104.0 710.0 L1104.5 711.0 L1105.0 713.2 L1105.5 715.1 L1106.0 711.1 L1106.5 702.6 L1107.0 700.4 L1107.5 711.5 L1108.0 710.7 L1108.5 709.8 L1109.0 705.2 L1109.5 707.9 L1110.0 710.3 L1110.5 714.0 L1111.0 704.3 L1111.5 707.6 L1112.0 706.8 L1112.5 706.8 L1113.0 702.4 L1113.5 700.6 L1114.0 697.7 L1114.5 697.1 L1115.0 692.5 L1115.5 703.0 L1116.0 695.5 L1116.5 702.0 L1117.0 698.3 L1117.5 692.0 L1118.0 685.2 L1118.5 692.0 L1119.0 680.4 L1119.5 683.9 L1120.0 684.9 L1120.5 682.7 L1121.0 684.1 L1121.5 679.1 L1122.0 684.3 L1122.5 688.2 L1123.0 698.7 L1123.5 717.5 L1124.0 730.6 L1124.5 732.1 L1125.0 724.6 L1125.5 718.3 L1126.0 713.9 L1126.5 707.9 L1127.0 708.9 L1127.5 697.6 L1128.0 696.4 L1128.5 694.9 L1129.0 685.8 L1129.5 681.8 L1130.0 681.6 L1130.5 686.0 L1131.0 677.0 L1131.5 678.4 L1132.0 688.1 L1132.5 677.2 L1133.0 681.3 L1133.5 683.5 L1134.0 687.3 L1134.5 689.8 L1135.0 680.6 L1135.5 696.3 L1136.0 704.0 L1136.5 715.6 L1137.0 719.6 L1137.5 725.4 L1138.0 740.5 L1138.5 746.0 L1139.0 749.8 L1139.5 762.1 L1140.0 797.1 L1140.5 785.5 L1141.0 789.0 L1141.5 775.3 L1142.0 764.6 L1142.5 765.3 L1143.0 756.9 L1143.5 745.1 L1144.0 738.3 L1144.5 742.5 L1145.0 740.5 L1145.5 752.4 L1146.0 752.7 L1146.5 745.2 L1147.0 753.6 L1147.5 752.0 L1148.0 762.1 L1148.5 767.2 L1149.0 773.8 L1149.5 777.1 L1150.0 780.3 L1150.5 787.1 L1151.0 795.8 L1151.5 786.0 L1152.0 772.2 L1152.5 762.8 L1153.0 757.1 L1153.5 743.5 L1154.0 733.7 L1154.5 722.9 L1155.0 714.9 L1155.5 719.3 L1156.0 717.0 L1156.5 712.0 L1157.0 711.8 L1157.5 709.6 L1158.0 714.3 L1158.5 713.8 L1159.0 700.5 L1159.5 705.1 L1160.0 701.4 L1160.5 702.1 L1161.0 707.2 L1161.5 711.3 L1162.0 713.6 L1162.5 710.0 L1163.0 705.8 L1163.5 693.4 L1164.0 707.1 L1164.5 701.3 L1165.0 692.9 L1165.5 697.2 L1166.0 703.8 L1166.5 704.8 L1167.0 701.4 L1167.5 711.8 L1168.0 713.8 L1168.5 718.5 L1169.0 723.4 L1169.5 725.5 L1170.0 740.8 L1170.5 740.6 L1171.0 748.8 L1171.5 752.8 L1172.0 755.6 L1172.5 758.6 L1173.0 764.7 L1173.5 777.9 L1174.0 783.8 L1174.5 779.8 L1175.0 786.7 L1175.5 794.6 L1176.0 798.4 L1176.5 806.5 L1177.0 796.7 L1177.5 784.8 L1178.0 783.2 L1178.5 772.6 L1179.0 770.9 L1179.5 769.5 L1180.0 762.0 L1180.5 755.0 L1181.0 747.9 L1181.5 751.1 L1182.0 752.5 L1182.5 754.5 L1183.0 761.4 L1183.5 765.6 L1184.0 765.5 L1184.5 759.1 L1185.0 753.1 L1185.5 737.7 L1186.0 731.6 L1186.5 724.2 L1187.0 709.8 L1187.5 701.3 L1188.0 707.3 L1188.5 704.2 L1189.0 716.3 L1189.5 721.5 L1190.0 729.5 L1190.5 732.2 L1191.0 720.9 L1191.5 712.3 L1192.0 722.7 L1192.5 723.8 L1193.0 716.6 L1193.5 720.3 L1194.0 724.6 L1194.5 724.1 L1195.0 717.5 L1195.5 714.4 L1196.0 722.2 L1196.5 731.3 L1197.0 736.2 L1197.5 749.0 L1198.0 756.4 L1198.5 764.2 L1199.0 772.6 L1199.5 778.9 L1200.0 781.1 L1200.5 776.4 L1201.0 776.3 L1201.5 769.6 L1202.0 758.8 L1202.5 749.5 L1203.0 752.1 L1203.5 734.4 L1204.0 731.9 L1204.5 723.0 L1205.0 717.0 L1205.5 717.7 L1206.0 714.0 L1206.5 705.7 L1207.0 700.9 L1207.5 703.1 L1208.0 699.6 L1208.5 711.5 L1209.0 716.6 L1209.5 721.2 L1210.0 733.2 L1210.5 740.6 L1211.0 757.1 L1211.5 772.6 L1212.0 780.8 L1212.5 768.5 L1213.0 761.0 L1213.5 743.8 L1214.0 730.8 L1214.5 727.5 L1215.0 721.0 L1215.5 711.6 L1216.0 702.5 L1216.5 707.7 L1217.0 707.4 L1217.5 715.7 L1218.0 718.7 L1218.5 725.7 L1219.0 726.2 L1219.5 727.8 L1220.0 740.1 L1220.5 744.0 L1221.0 737.4 L1221.5 740.8 L1222.0 737.4 L1222.5 743.4 L1223.0 741.9 L1223.5 743.2 L1224.0 746.6 L1224.5 746.2 L1225.0 742.6 L1225.5 743.6 L1226.0 740.1 L1226.5 735.2 L1227.0 741.3 L1227.5 732.3 L1228.0 734.7 L1228.5 725.9 L1229.0 728.5 L1229.5 724.6 L1230.0 723.8 L1230.5 727.8 L1231.0 717.2 L1231.5 718.6 L1232.0 705.7 L1232.5 709.3 L1233.0 703.6 L1233.5 693.1 L1234.0 689.7 L1234.5 693.6 L1235.0 695.2 L1235.5 686.9 L1236.0 685.4 L1236.5 686.0 L1237.0 683.9 L1237.5 673.2 L1238.0 670.6 L1238.5 666.8 L1239.0 672.4 L1239.5 678.2 L1240.0 688.1 L1240.5 688.7 L1241.0 682.7 L1241.5 689.6 L1242.0 688.7 L1242.5 697.4 L1243.0 690.9 L1243.5 700.5 L1244.0 708.9 L1244.5 701.1 L1245.0 701.8 L1245.5 721.4 L1246.0 714.8 L1246.5 709.3 L1247.0 704.0 L1247.5 708.1 L1248.0 708.3 L1248.5 691.2 L1249.0 692.9 L1249.5 710.3 L1250.0 711.3 L1250.5 721.0 L1251.0 732.9 L1251.5 729.5 L1252.0 735.9 L1252.5 746.0 L1253.0 738.5 L1253.5 743.9 L1254.0 749.4 L1254.5 750.2 L1255.0 748.4 L1255.5 746.7 L1256.0 749.7 L1256.5 757.5 L1257.0 756.0 L1257.5 750.1 L1258.0 762.4 L1258.5 765.2 L1259.0 759.3 L1259.5 761.5 L1260.0 762.9 L1260.5 761.0 L1261.0 758.6 L1261.5 756.2 L1262.0 761.3 L1262.5 762.0 L1263.0 760.7 L1263.5 755.5 L1264.0 748.1 L1264.5 755.2 L1265.0 758.1 L1265.5 737.5 L1266.0 738.1 L1266.5 739.3 L1267.0 737.9 L1267.5 737.9 L1268.0 729.8 L1268.5 737.1 L1269.0 735.4 L1269.5 740.8 L1270.0 757.1 L1270.5 762.7 L1271.0 763.9 L1271.5 769.5 L1272.0 782.7 L1272.5 786.5 L1273.0 790.3 L1273.5 796.1 L1274.0 785.5 L1274.5 777.9 L1275.0 778.0 L1275.5 764.6 L1276.0 763.1 L1276.5 750.1 L1277.0 755.1 L1277.5 755.9 L1278.0 760.7 L1278.5 754.5 L1279.0 759.4 L1279.5 754.1 L1280.0 764.7 L1280.5 765.0 L1281.0 761.1 L1281.5 769.4 L1282.0 773.5 L1282.5 769.1 L1283.0 756.9 L1283.5 748.2 L1284.0 746.0 L1284.5 738.3 L1285.0 733.3 L1285.5 732.8 L1286.0 735.8 L1286.5 732.8 L1287.0 731.2 L1287.5 732.1 L1288.0 734.9 L1288.5 743.7 L1289.0 744.5 L1289.5 740.8 L1290.0 739.6 L1290.5 743.4 L1291.0 743.6 L1291.5 744.8 L1292.0 744.6 L1292.5 740.4 L1293.0 746.8 L1293.5 743.6 L1294.0 748.9 L1294.5 753.7 L1295.0 752.1 L1295.5 749.8 L1296.0 746.8 L1296.5 742.3 L1297.0 740.1 L1297.5 743.8 L1298.0 741.8 L1298.5 747.1 L1299.0 738.3 L1299.5 730.8 L1300.0 726.6 L1300.5 731.8 L1301.0 730.8 L1301.5 731.4 L1302.0 730.5 L1302.5 735.0 L1303.0 727.9 L1303.5 725.6 L1304.0 729.4 L1304.5 726.8 L1305.0 721.8 L1305.5 720.4 L1306.0 721.1 L1306.5 713.1 L1307.0 708.7 L1307.5 705.1 L1308.0 702.8 L1308.5 690.2 L1309.0 681.3 L1309.5 675.4 L1310.0 675.7 L1310.5 682.8 L1311.0 687.2 L1311.5 683.9 L1312.0 692.3 L1312.5 695.6 L1313.0 708.8 L1313.5 711.9 L1314.0 713.1 L1314.5 719.0 L1315.0 733.9 L1315.5 736.9 L1316.0 743.6 L1316.5 751.1 L1317.0 760.6 L1317.5 767.5 L1318.0 774.6 L1318.5 784.8 L1319.0 782.5 L1319.5 778.2 L1320.0 768.0 L1320.5 759.6 L1321.0 759.9 L1321.5 753.6 L1322.0 748.5 L1322.5 743.7 L1323.0 736.7 L1323.5 738.3 L1324.0 727.6 L1324.5 726.3 L1325.0 731.2 L1325.5 722.0 L1326.0 716.7 L1326.5 714.2 L1327.0 706.4 L1327.5 700.5 L1328.0 702.2 L1328.5 710.5 L1329.0 702.2 L1329.5 705.5 L1330.0 705.5 L1330.5 707.6 L1331.0 703.3 L1331.5 708.5 L1332.0 704.9 L1332.5 703.6 L1333.0 707.4 L1333.5 710.9 L1334.0 714.6 L1334.5 702.2 L1335.0 713.6 L1335.5 712.0 L1336.0 713.2 L1336.5 718.3 L1337.0 719.5 L1337.5 714.2 L1338.0 713.9 L1338.5 717.7 L1339.0 711.9 L1339.5 712.3 L1340.0 713.9 L1340.5 721.5 L1341.0 719.7 L1341.5 714.4 L1342.0 711.8 L1342.5 715.1 L1343.0 721.2 L1343.5 720.8 L1344.0 728.1 L1344.5 736.1 L1345.0 745.2 L1345.5 747.7 L1346.0 740.2 L1346.5 744.7 L1347.0 743.1 L1347.5 752.7 L1348.0 750.6 L1348.5 752.7 L1349.0 748.1 L1349.5 754.4 L1350.0 749.5 L1350.5 747.1 L1351.0 730.4 L1351.5 735.2 L1352.0 733.4 L1352.5 736.0 L1353.0 730.2 L1353.5 722.8 L1354.0 730.6 L1354.5 736.8 L1355.0 738.8 L1355.5 746.1 L1356.0 736.5 L1356.5 730.8 L1357.0 732.6 L1357.5 739.4 L1358.0 744.9 L1358.5 744.3 L1359.0 735.4 L1359.5 719.6 L1360.0 717.8 L1360.5 718.2 L1361.0 713.6 L1361.5 708.9 L1362.0 703.3 L1362.5 705.5 L1363.0 701.3 L1363.5 700.4 L1364.0 694.7 L1364.5 686.5 L1365.0 694.2 L1365.5 714.1 L1366.0 725.0 L1366.5 731.6 L1367.0 732.6 L1367.5 743.2 L1368.0 736.3 L1368.5 735.7 L1369.0 727.8 L1369.5 729.5 L1370.0 724.5 L1370.5 713.7 L1371.0 704.7 L1371.5 696.0 L1372.0 688.4 L1372.5 693.1 L1373.0 703.9 L1373.5 717.0 L1374.0 715.5 L1374.5 721.7 L1375.0 733.8 L1375.5 748.3 L1376.0 747.1 L1376.5 747.6 L1377.0 738.1 L1377.5 744.6 L1378.0 750.0 L1378.5 731.7 L1379.0 732.3 L1379.5 734.0 L1380.0 727.5 L1380.5 718.1 L1381.0 718.5 L1381.5 722.7 L1382.0 721.8 L1382.5 720.8 L1383.0 724.1 L1383.5 726.4 L1384.0 723.2 L1384.5 729.1 L1385.0 733.3 L1385.5 724.1 L1386.0 724.0 L1386.5 713.6 L1387.0 716.3 L1387.5 722.4 L1388.0 725.8 L1388.5 718.1 L1389.0 715.1 L1389.5 709.8 L1390.0 722.7 L1390.5 728.7 L1391.0 723.9 L1391.5 723.8 L1392.0 731.5 L1392.5 729.8 L1393.0 728.0 L1393.5 728.5 L1394.0 738.2 L1394.5 742.5 L1395.0 730.9 L1395.5 726.8 L1396.0 722.1 L1396.5 713.4 L1397.0 710.9" fill="none" stroke="#ee7a5c" stroke-width="0.85" stroke-linejoin="round"/><path d="M396.0 599.0 L396.5 592.4 L397.0 602.1 L397.5 603.5 L398.0 602.7 L398.5 607.3 L399.0 616.8 L399.5 619.6 L400.0 619.5 L400.5 612.4 L401.0 602.2 L401.5 599.9 L402.0 594.8 L402.5 603.5 L403.0 602.5 L403.5 594.7 L404.0 589.6 L404.5 590.6 L405.0 591.1 L405.5 603.3 L406.0 600.5 L406.5 593.1 L407.0 600.9 L407.5 611.1 L408.0 607.3 L408.5 602.1 L409.0 597.3 L409.5 600.1 L410.0 610.4 L410.5 603.5 L411.0 599.8 L411.5 613.0 L412.0 615.6 L412.5 617.2 L413.0 620.4 L413.5 624.8 L414.0 632.4 L414.5 624.8 L415.0 630.0 L415.5 639.9 L416.0 640.9 L416.5 624.4 L417.0 626.6 L417.5 612.7 L418.0 588.9 L418.5 588.2 L419.0 573.9 L419.5 572.9 L420.0 554.8 L420.5 555.9 L421.0 572.8 L421.5 577.6 L422.0 583.8 L422.5 594.5 L423.0 601.3 L423.5 608.8 L424.0 616.8 L424.5 623.1 L425.0 617.9 L425.5 612.0 L426.0 607.3 L426.5 603.7 L427.0 598.5 L427.5 603.9 L428.0 601.2 L428.5 602.1 L429.0 587.6 L429.5 583.3 L430.0 581.2 L430.5 580.3 L431.0 583.5 L431.5 586.1 L432.0 595.4 L432.5 592.5 L433.0 602.2 L433.5 616.2 L434.0 606.7 L434.5 610.6 L435.0 608.6 L435.5 602.5 L436.0 603.2 L436.5 605.0 L437.0 593.6 L437.5 594.9 L438.0 597.6 L438.5 589.9 L439.0 589.2 L439.5 584.0 L440.0 580.9 L440.5 581.1 L441.0 581.2 L441.5 579.6 L442.0 574.5 L442.5 581.9 L443.0 579.5 L443.5 580.9 L444.0 590.4 L444.5 583.5 L445.0 581.1 L445.5 586.6 L446.0 588.3 L446.5 602.2 L447.0 617.8 L447.5 626.9 L448.0 634.0 L448.5 643.6 L449.0 653.8 L449.5 660.5 L450.0 644.5 L450.5 635.6 L451.0 634.2 L451.5 624.9 L452.0 621.9 L452.5 621.1 L453.0 616.5 L453.5 617.7 L454.0 619.4 L454.5 613.2 L455.0 615.7 L455.5 622.6 L456.0 628.2 L456.5 636.5 L457.0 628.3 L457.5 638.8 L458.0 648.5 L458.5 632.3 L459.0 623.6 L459.5 614.9 L460.0 619.0 L460.5 615.7 L461.0 613.0 L461.5 607.2 L462.0 603.2 L462.5 599.3 L463.0 602.2 L463.5 598.6 L464.0 599.5 L464.5 595.0 L465.0 596.4 L465.5 587.2 L466.0 596.9 L466.5 601.4 L467.0 600.3 L467.5 609.5 L468.0 602.7 L468.5 609.6 L469.0 616.1 L469.5 624.7 L470.0 630.2 L470.5 630.5 L471.0 631.2 L471.5 637.8 L472.0 627.2 L472.5 627.1 L473.0 617.6 L473.5 618.5 L474.0 626.0 L474.5 627.8 L475.0 623.7 L475.5 623.6 L476.0 625.4 L476.5 634.4 L477.0 642.5 L477.5 635.8 L478.0 630.8 L478.5 637.9 L479.0 644.7 L479.5 643.2 L480.0 633.1 L480.5 617.5 L481.0 617.3 L481.5 605.7 L482.0 592.1 L482.5 593.7 L483.0 586.0 L483.5 578.7 L484.0 565.2 L484.5 569.1 L485.0 571.0 L485.5 567.5 L486.0 568.6 L486.5 570.3 L487.0 570.7 L487.5 567.3 L488.0 562.8 L488.5 573.1 L489.0 573.4 L489.5 578.6 L490.0 575.9 L490.5 572.0 L491.0 569.2 L491.5 575.4 L492.0 568.6 L492.5 569.5 L493.0 571.1 L493.5 556.6 L494.0 556.6 L494.5 569.7 L495.0 572.5 L495.5 571.8 L496.0 577.8 L496.5 585.7 L497.0 598.9 L497.5 601.5 L498.0 604.8 L498.5 606.4 L499.0 605.3 L499.5 611.1 L500.0 611.5 L500.5 615.5 L501.0 618.8 L501.5 616.2 L502.0 616.3 L502.5 616.9 L503.0 614.8 L503.5 615.4 L504.0 616.5 L504.5 621.1 L505.0 625.3 L505.5 631.0 L506.0 625.4 L506.5 633.3 L507.0 630.6 L507.5 631.2 L508.0 628.4 L508.5 643.7 L509.0 655.2 L509.5 658.6 L510.0 675.5 L510.5 677.4 L511.0 675.7 L511.5 664.6 L512.0 649.3 L512.5 635.7 L513.0 627.9 L513.5 618.2 L514.0 608.1 L514.5 597.8 L515.0 595.7 L515.5 583.9 L516.0 579.4 L516.5 580.3 L517.0 579.4 L517.5 581.4 L518.0 567.8 L518.5 565.3 L519.0 551.7 L519.5 546.3 L520.0 552.7 L520.5 558.2 L521.0 555.9 L521.5 556.7 L522.0 568.5 L522.5 564.2 L523.0 569.0 L523.5 574.6 L524.0 579.6 L524.5 589.7 L525.0 594.2 L525.5 599.1 L526.0 612.7 L526.5 614.2 L527.0 604.8 L527.5 599.4 L528.0 589.9 L528.5 588.0 L529.0 582.2 L529.5 580.0 L530.0 579.8 L530.5 568.5 L531.0 552.8 L531.5 563.4 L532.0 568.6 L532.5 572.1 L533.0 572.2 L533.5 569.7 L534.0 572.8 L534.5 577.5 L535.0 574.5 L535.5 578.9 L536.0 583.6 L536.5 581.6 L537.0 594.0 L537.5 602.2 L538.0 602.2 L538.5 612.9 L539.0 612.6 L539.5 618.1 L540.0 622.8 L540.5 630.5 L541.0 632.7 L541.5 638.1 L542.0 636.5 L542.5 638.1 L543.0 648.7 L543.5 640.7 L544.0 641.5 L544.5 651.4 L545.0 645.3 L545.5 631.3 L546.0 628.1 L546.5 623.5 L547.0 621.3 L547.5 612.0 L548.0 610.1 L548.5 601.0 L549.0 600.8 L549.5 596.8 L550.0 598.7 L550.5 600.1 L551.0 583.3 L551.5 582.0 L552.0 583.4 L552.5 584.6 L553.0 585.7 L553.5 574.0 L554.0 567.3 L554.5 569.0 L555.0 578.3 L555.5 586.1 L556.0 592.1 L556.5 590.0 L557.0 593.5 L557.5 593.3 L558.0 589.9 L558.5 584.4 L559.0 593.9 L559.5 597.5 L560.0 593.6 L560.5 583.0 L561.0 582.1 L561.5 590.0 L562.0 583.5 L562.5 574.0 L563.0 574.0 L563.5 572.8 L564.0 573.3 L564.5 578.1 L565.0 584.2 L565.5 581.5 L566.0 590.5 L566.5 589.1 L567.0 593.6 L567.5 603.2 L568.0 606.8 L568.5 617.7 L569.0 620.5 L569.5 624.9 L570.0 628.7 L570.5 632.9 L571.0 634.3 L571.5 648.5 L572.0 641.4 L572.5 614.6 L573.0 582.7 L573.5 571.6 L574.0 590.1 L574.5 593.1 L575.0 605.1 L575.5 606.3 L576.0 617.4 L576.5 618.8 L577.0 621.2 L577.5 625.5 L578.0 632.4 L578.5 641.0 L579.0 637.8 L579.5 626.3 L580.0 633.6 L580.5 639.3 L581.0 628.7 L581.5 619.9 L582.0 610.2 L582.5 593.6 L583.0 590.8 L583.5 582.6 L584.0 575.7 L584.5 589.0 L585.0 590.8 L585.5 586.9 L586.0 595.1 L586.5 594.9 L587.0 600.6 L587.5 600.7 L588.0 594.8 L588.5 598.1 L589.0 598.2 L589.5 596.3 L590.0 592.7 L590.5 592.4 L591.0 595.9 L591.5 607.5 L592.0 597.1 L592.5 599.1 L593.0 593.5 L593.5 591.3 L594.0 594.0 L594.5 581.7 L595.0 582.3 L595.5 576.9 L596.0 576.6 L596.5 577.2 L597.0 582.5 L597.5 589.5 L598.0 588.9 L598.5 595.0 L599.0 606.8 L599.5 605.7 L600.0 618.7 L600.5 614.8 L601.0 614.7 L601.5 615.0 L602.0 617.9 L602.5 611.8 L603.0 614.4 L603.5 625.1 L604.0 634.4 L604.5 643.0 L605.0 652.5 L605.5 661.1 L606.0 660.7 L606.5 655.4 L607.0 659.7 L607.5 646.8 L608.0 633.3 L608.5 631.7 L609.0 632.6 L609.5 625.4 L610.0 625.1 L610.5 617.4 L611.0 613.4 L611.5 626.9 L612.0 636.1 L612.5 618.6 L613.0 612.7 L613.5 621.9 L614.0 616.3 L614.5 608.8 L615.0 606.7 L615.5 594.6 L616.0 592.3 L616.5 589.4 L617.0 581.1 L617.5 580.5 L618.0 577.0 L618.5 579.4 L619.0 578.6 L619.5 573.5 L620.0 583.2 L620.5 579.9 L621.0 578.0 L621.5 572.5 L622.0 576.5 L622.5 570.9 L623.0 572.3 L623.5 580.1 L624.0 578.3 L624.5 573.6 L625.0 570.2 L625.5 578.5 L626.0 575.9 L626.5 576.6 L627.0 583.8 L627.5 582.8 L628.0 588.9 L628.5 598.9 L629.0 605.7 L629.5 612.3 L630.0 628.5 L630.5 631.6 L631.0 633.5 L631.5 624.4 L632.0 619.8 L632.5 618.9 L633.0 614.7 L633.5 615.2 L634.0 621.5 L634.5 624.2 L635.0 624.9 L635.5 629.6 L636.0 638.1 L636.5 638.4 L637.0 629.8 L637.5 632.8 L638.0 637.7 L638.5 628.8 L639.0 607.0 L639.5 606.8 L640.0 617.7 L640.5 614.5 L641.0 613.2 L641.5 611.8 L642.0 609.8 L642.5 604.8 L643.0 609.5 L643.5 598.1 L644.0 595.0 L644.5 599.3 L645.0 602.6 L645.5 606.8 L646.0 610.8 L646.5 610.9 L647.0 611.5 L647.5 605.0 L648.0 603.9 L648.5 593.7 L649.0 591.8 L649.5 587.3 L650.0 579.1 L650.5 568.7 L651.0 565.1 L651.5 558.6 L652.0 555.5 L652.5 560.5 L653.0 558.8 L653.5 568.5 L654.0 572.1 L654.5 570.8 L655.0 573.2 L655.5 577.5 L656.0 577.1 L656.5 587.7 L657.0 597.6 L657.5 605.8 L658.0 610.0 L658.5 603.6 L659.0 609.9 L659.5 606.4 L660.0 605.3 L660.5 598.5 L661.0 590.4 L661.5 584.5 L662.0 590.3 L662.5 575.8 L663.0 567.2 L663.5 570.9 L664.0 570.4 L664.5 590.3 L665.0 594.3 L665.5 599.5 L666.0 604.2 L666.5 608.0 L667.0 613.0 L667.5 626.3 L668.0 639.8 L668.5 644.4 L669.0 642.7 L669.5 636.3 L670.0 633.2 L670.5 635.6 L671.0 636.2 L671.5 633.3 L672.0 625.1 L672.5 616.9 L673.0 623.2 L673.5 610.5 L674.0 609.8 L674.5 609.3 L675.0 603.8 L675.5 588.2 L676.0 587.2 L676.5 585.6 L677.0 586.5 L677.5 594.6 L678.0 592.1 L678.5 596.8 L679.0 603.0 L679.5 604.4 L680.0 607.4 L680.5 615.5 L681.0 620.3 L681.5 616.8 L682.0 604.1 L682.5 605.1 L683.0 611.3 L683.5 605.4 L684.0 605.8 L684.5 608.2 L685.0 603.4 L685.5 598.1 L686.0 596.3 L686.5 595.6 L687.0 594.5 L687.5 591.4 L688.0 586.2 L688.5 588.2 L689.0 578.6 L689.5 573.6 L690.0 574.0 L690.5 572.1 L691.0 579.9 L691.5 584.8 L692.0 590.4 L692.5 596.7 L693.0 603.8 L693.5 609.4 L694.0 622.8 L694.5 622.2 L695.0 610.6 L695.5 603.8 L696.0 608.6 L696.5 602.9 L697.0 606.2 L697.5 603.6 L698.0 600.9 L698.5 591.8 L699.0 592.4 L699.5 587.4 L700.0 585.4 L700.5 586.2 L701.0 582.0 L701.5 579.1 L702.0 585.3 L702.5 584.7 L703.0 591.9 L703.5 587.2 L704.0 588.0 L704.5 593.2 L705.0 601.4 L705.5 613.7 L706.0 608.6 L706.5 599.7 L707.0 600.0 L707.5 593.2 L708.0 585.1 L708.5 578.0 L709.0 576.1 L709.5 569.6 L710.0 569.3 L710.5 568.1 L711.0 570.7 L711.5 565.1 L712.0 573.8 L712.5 575.1 L713.0 575.3 L713.5 579.6 L714.0 581.3 L714.5 579.7 L715.0 588.0 L715.5 590.2 L716.0 601.8 L716.5 603.9 L717.0 601.9 L717.5 606.1 L718.0 615.3 L718.5 620.8 L719.0 618.1 L719.5 628.1 L720.0 638.7 L720.5 644.4 L721.0 633.9 L721.5 625.0 L722.0 630.2 L722.5 627.7 L723.0 616.9 L723.5 614.0 L724.0 608.3 L724.5 607.3 L725.0 607.9 L725.5 595.7 L726.0 601.4 L726.5 609.7 L727.0 610.5 L727.5 621.9 L728.0 613.9 L728.5 619.8 L729.0 620.0 L729.5 633.2 L730.0 630.8 L730.5 630.5 L731.0 641.8 L731.5 637.6 L732.0 643.0 L732.5 638.1 L733.0 644.8 L733.5 644.8 L734.0 651.6 L734.5 649.2 L735.0 642.3 L735.5 636.7 L736.0 648.7 L736.5 639.7 L737.0 628.5 L737.5 626.1 L738.0 623.9 L738.5 612.9 L739.0 619.4 L739.5 605.9 L740.0 607.1 L740.5 615.2 L741.0 604.9 L741.5 593.3 L742.0 595.7 L742.5 594.7 L743.0 595.7 L743.5 587.4 L744.0 584.2 L744.5 591.0 L745.0 591.6 L745.5 586.4 L746.0 592.8 L746.5 599.6 L747.0 598.7 L747.5 608.8 L748.0 606.9 L748.5 609.7 L749.0 607.0 L749.5 607.5 L750.0 608.6 L750.5 610.0 L751.0 611.2 L751.5 611.6 L752.0 597.2 L752.5 602.7 L753.0 603.3 L753.5 598.9 L754.0 600.8 L754.5 597.3 L755.0 592.6 L755.5 583.5 L756.0 580.3 L756.5 570.1 L757.0 568.7 L757.5 559.9 L758.0 560.8 L758.5 560.3 L759.0 562.4 L759.5 565.8 L760.0 566.8 L760.5 570.8 L761.0 581.7 L761.5 586.9 L762.0 592.6 L762.5 604.9 L763.0 614.7 L763.5 625.9 L764.0 629.3 L764.5 636.7 L765.0 630.5 L765.5 628.7 L766.0 619.2 L766.5 621.0 L767.0 614.9 L767.5 615.3 L768.0 612.9 L768.5 607.0 L769.0 616.0 L769.5 611.5 L770.0 623.2 L770.5 620.3 L771.0 616.9 L771.5 624.2 L772.0 622.8 L772.5 613.8 L773.0 611.5 L773.5 614.7 L774.0 607.0 L774.5 604.8 L775.0 607.9 L775.5 592.9 L776.0 590.8 L776.5 588.2 L777.0 596.0 L777.5 600.0 L778.0 593.1 L778.5 610.3 L779.0 624.9 L779.5 619.7 L780.0 628.7 L780.5 626.4 L781.0 623.5 L781.5 634.4 L782.0 643.9 L782.5 635.9 L783.0 637.4 L783.5 634.3 L784.0 639.0 L784.5 648.2 L785.0 653.8 L785.5 647.0 L786.0 624.4 L786.5 611.3 L787.0 579.5 L787.5 577.1 L788.0 591.2 L788.5 591.1 L789.0 585.1 L789.5 597.8 L790.0 590.6 L790.5 589.6 L791.0 598.0 L791.5 597.6 L792.0 600.6 L792.5 589.1 L793.0 593.1 L793.5 601.6 L794.0 603.7 L794.5 605.6 L795.0 603.6 L795.5 600.8 L796.0 606.0 L796.5 612.9 L797.0 613.1 L797.5 609.3 L798.0 615.9 L798.5 615.6 L799.0 611.8 L799.5 612.4 L800.0 618.0 L800.5 631.4 L801.0 624.9 L801.5 618.4 L802.0 618.7 L802.5 618.9 L803.0 617.6 L803.5 597.2 L804.0 598.8 L804.5 610.6 L805.0 607.8 L805.5 600.7 L806.0 600.3 L806.5 596.5 L807.0 601.4 L807.5 596.6 L808.0 599.3 L808.5 608.7 L809.0 604.2 L809.5 605.0 L810.0 608.6 L810.5 602.2 L811.0 605.8 L811.5 608.3 L812.0 593.4 L812.5 589.5 L813.0 583.3 L813.5 576.4 L814.0 578.2 L814.5 583.7 L815.0 578.9 L815.5 586.8 L816.0 595.9 L816.5 608.4 L817.0 614.4 L817.5 604.4 L818.0 589.0 L818.5 586.8 L819.0 576.0 L819.5 563.3 L820.0 551.0 L820.5 546.8 L821.0 541.0 L821.5 552.0 L822.0 558.6 L822.5 555.8 L823.0 556.5 L823.5 560.7 L824.0 566.6 L824.5 572.8 L825.0 582.7 L825.5 598.0 L826.0 608.0 L826.5 616.0 L827.0 627.3 L827.5 627.7 L828.0 633.1 L828.5 626.0 L829.0 614.8 L829.5 612.4 L830.0 610.1 L830.5 597.1 L831.0 601.8 L831.5 598.0 L832.0 587.0 L832.5 579.3 L833.0 581.9 L833.5 585.5 L834.0 590.3 L834.5 586.0 L835.0 582.8 L835.5 580.4 L836.0 576.0 L836.5 577.3 L837.0 578.5 L837.5 590.7 L838.0 601.0 L838.5 605.9 L839.0 609.9 L839.5 612.3 L840.0 620.8 L840.5 619.1 L841.0 612.5 L841.5 621.5 L842.0 622.4 L842.5 612.4 L843.0 614.7 L843.5 612.4 L844.0 619.7 L844.5 621.5 L845.0 610.2 L845.5 615.1 L846.0 620.3 L846.5 622.0 L847.0 623.1 L847.5 637.0 L848.0 642.8 L848.5 634.4 L849.0 639.9 L849.5 643.2 L850.0 634.2 L850.5 634.7 L851.0 624.8 L851.5 625.5 L852.0 629.1 L852.5 624.3 L853.0 626.7 L853.5 627.8 L854.0 629.3 L854.5 625.1 L855.0 631.4 L855.5 637.7 L856.0 641.0 L856.5 633.8 L857.0 633.3 L857.5 624.1 L858.0 613.9 L858.5 608.5 L859.0 606.6 L859.5 600.0 L860.0 596.3 L860.5 599.4 L861.0 608.7 L861.5 611.5 L862.0 617.7 L862.5 627.0 L863.0 636.4 L863.5 629.4 L864.0 637.3 L864.5 640.6 L865.0 643.3 L865.5 639.3 L866.0 632.4 L866.5 616.9 L867.0 605.6 L867.5 598.2 L868.0 591.2 L868.5 593.1 L869.0 595.8 L869.5 601.0 L870.0 604.2 L870.5 605.4 L871.0 601.0 L871.5 607.9 L872.0 607.7 L872.5 608.9 L873.0 604.4 L873.5 606.9 L874.0 604.5 L874.5 590.8 L875.0 588.0 L875.5 587.4 L876.0 585.3 L876.5 578.5 L877.0 574.5 L877.5 569.9 L878.0 566.7 L878.5 568.1 L879.0 565.8 L879.5 559.7 L880.0 562.2 L880.5 567.4 L881.0 579.2 L881.5 589.0 L882.0 593.9 L882.5 606.4 L883.0 608.0 L883.5 612.6 L884.0 611.8 L884.5 614.2 L885.0 618.0 L885.5 624.8 L886.0 621.7 L886.5 626.2 L887.0 638.2 L887.5 631.4 L888.0 627.5 L888.5 621.3 L889.0 630.0 L889.5 628.3 L890.0 625.7 L890.5 614.8 L891.0 616.1 L891.5 611.7 L892.0 605.3 L892.5 594.5 L893.0 585.7 L893.5 585.9 L894.0 592.4 L894.5 595.5 L895.0 593.9 L895.5 599.6 L896.0 610.2 L896.5 611.7 L897.0 615.3 L897.5 626.5 L898.0 625.6 L898.5 633.9 L899.0 634.4 L899.5 627.0 L900.0 629.6 L900.5 625.7 L901.0 619.9 L901.5 619.3 L902.0 618.3 L902.5 616.7 L903.0 613.2 L903.5 608.8 L904.0 613.5 L904.5 609.6 L905.0 605.8 L905.5 606.1 L906.0 598.5 L906.5 602.2 L907.0 605.5 L907.5 596.7 L908.0 595.1 L908.5 584.3 L909.0 577.9 L909.5 572.8 L910.0 562.6 L910.5 555.5 L911.0 560.0 L911.5 568.2 L912.0 566.3 L912.5 562.6 L913.0 566.9 L913.5 587.5 L914.0 581.9 L914.5 585.9 L915.0 579.3 L915.5 586.2 L916.0 599.2 L916.5 596.2 L917.0 602.5 L917.5 614.1 L918.0 617.7 L918.5 622.1 L919.0 627.0 L919.5 625.2 L920.0 619.7 L920.5 619.7 L921.0 622.2 L921.5 618.4 L922.0 605.8 L922.5 592.1 L923.0 588.8 L923.5 592.9 L924.0 586.3 L924.5 582.5 L925.0 583.2 L925.5 588.4 L926.0 578.6 L926.5 571.4 L927.0 567.6 L927.5 569.9 L928.0 589.5 L928.5 585.5 L929.0 588.5 L929.5 595.5 L930.0 609.4 L930.5 605.5 L931.0 591.5 L931.5 587.9 L932.0 588.7 L932.5 593.8 L933.0 586.9 L933.5 583.5 L934.0 581.7 L934.5 576.1 L935.0 574.0 L935.5 575.8 L936.0 573.7 L936.5 570.1 L937.0 581.1 L937.5 586.0 L938.0 591.8 L938.5 594.7 L939.0 603.8 L939.5 609.3 L940.0 611.9 L940.5 614.4 L941.0 628.2 L941.5 628.8 L942.0 632.3 L942.5 632.4 L943.0 630.4 L943.5 620.0 L944.0 613.9 L944.5 613.8 L945.0 611.1 L945.5 601.1 L946.0 609.8 L946.5 602.0 L947.0 618.0 L947.5 623.4 L948.0 625.0 L948.5 619.2 L949.0 620.7 L949.5 614.7 L950.0 612.6 L950.5 609.0 L951.0 610.2 L951.5 615.2 L952.0 609.4 L952.5 605.2 L953.0 602.4 L953.5 600.4 L954.0 590.2 L954.5 592.3 L955.0 585.9 L955.5 573.4 L956.0 575.3 L956.5 577.6 L957.0 576.6 L957.5 573.4 L958.0 583.1 L958.5 594.3 L959.0 590.5 L959.5 597.5 L960.0 602.2 L960.5 593.6 L961.0 587.9 L961.5 592.8 L962.0 596.3 L962.5 587.9 L963.0 575.1 L963.5 574.2 L964.0 585.9 L964.5 589.7 L965.0 604.3 L965.5 609.3 L966.0 599.6 L966.5 613.1 L967.0 618.1 L967.5 616.4 L968.0 624.6 L968.5 630.2 L969.0 635.1 L969.5 643.3 L970.0 639.5 L970.5 639.8 L971.0 642.4 L971.5 643.8 L972.0 652.6 L972.5 654.9 L973.0 652.4 L973.5 640.0 L974.0 633.5 L974.5 623.3 L975.0 612.2 L975.5 599.2 L976.0 598.8 L976.5 595.9 L977.0 598.3 L977.5 600.2 L978.0 594.6 L978.5 596.5 L979.0 604.6 L979.5 598.5 L980.0 595.2 L980.5 599.5 L981.0 606.4 L981.5 614.4 L982.0 620.8 L982.5 630.0 L983.0 626.9 L983.5 618.3 L984.0 619.2 L984.5 610.1 L985.0 614.1 L985.5 604.2 L986.0 600.5 L986.5 594.7 L987.0 590.8 L987.5 587.2 L988.0 580.5 L988.5 582.5 L989.0 580.2 L989.5 580.5 L990.0 578.0 L990.5 586.1 L991.0 590.5 L991.5 593.6 L992.0 608.7 L992.5 606.4 L993.0 601.3 L993.5 604.0 L994.0 614.0 L994.5 618.1 L995.0 619.3 L995.5 616.1 L996.0 619.2 L996.5 619.7 L997.0 629.7 L997.5 628.9 L998.0 636.1 L998.5 644.2 L999.0 639.9 L999.5 645.3 L1000.0 641.2 L1000.5 641.3 L1001.0 632.1 L1001.5 632.1 L1002.0 631.4 L1002.5 619.1 L1003.0 607.2 L1003.5 600.3 L1004.0 588.2 L1004.5 579.0 L1005.0 581.6 L1005.5 594.0 L1006.0 593.7 L1006.5 587.6 L1007.0 589.4 L1007.5 605.7 L1008.0 619.2 L1008.5 606.1 L1009.0 607.8 L1009.5 614.0 L1010.0 620.6 L1010.5 615.1 L1011.0 621.9 L1011.5 623.2 L1012.0 625.1 L1012.5 622.1 L1013.0 625.3 L1013.5 616.2 L1014.0 609.0 L1014.5 609.0 L1015.0 602.9 L1015.5 605.8 L1016.0 598.2 L1016.5 592.3 L1017.0 589.0 L1017.5 594.0 L1018.0 586.3 L1018.5 576.6 L1019.0 573.0 L1019.5 567.0 L1020.0 572.3 L1020.5 572.6 L1021.0 571.8 L1021.5 572.0 L1022.0 571.5 L1022.5 565.3 L1023.0 560.9 L1023.5 557.1 L1024.0 551.1 L1024.5 559.5 L1025.0 560.5 L1025.5 568.5 L1026.0 580.6 L1026.5 579.5 L1027.0 573.9 L1027.5 587.5 L1028.0 595.4 L1028.5 603.1 L1029.0 608.1 L1029.5 610.0 L1030.0 617.4 L1030.5 620.4 L1031.0 617.8 L1031.5 625.3 L1032.0 625.6 L1032.5 630.9 L1033.0 630.0 L1033.5 630.2 L1034.0 631.6 L1034.5 631.9 L1035.0 632.6 L1035.5 621.2 L1036.0 619.5 L1036.5 640.3 L1037.0 635.1 L1037.5 633.3 L1038.0 641.5 L1038.5 624.4 L1039.0 618.7 L1039.5 616.2 L1040.0 614.0 L1040.5 605.3 L1041.0 602.1 L1041.5 592.1 L1042.0 597.0 L1042.5 594.4 L1043.0 585.4 L1043.5 592.4 L1044.0 591.7 L1044.5 591.1 L1045.0 586.8 L1045.5 592.0 L1046.0 586.9 L1046.5 585.7 L1047.0 593.9 L1047.5 591.6 L1048.0 597.6 L1048.5 586.0 L1049.0 580.6 L1049.5 568.9 L1050.0 563.9 L1050.5 565.3 L1051.0 553.5 L1051.5 546.3 L1052.0 543.2 L1052.5 540.7 L1053.0 530.7 L1053.5 531.0 L1054.0 544.9 L1054.5 536.6 L1055.0 535.0 L1055.5 538.1 L1056.0 535.6 L1056.5 531.1 L1057.0 535.3 L1057.5 548.6 L1058.0 552.2 L1058.5 553.2 L1059.0 555.3 L1059.5 546.8 L1060.0 559.8 L1060.5 565.4 L1061.0 566.0 L1061.5 581.3 L1062.0 587.2 L1062.5 583.1 L1063.0 576.0 L1063.5 590.8 L1064.0 605.4 L1064.5 610.2 L1065.0 615.0 L1065.5 620.0 L1066.0 625.0 L1066.5 622.2 L1067.0 632.7 L1067.5 626.0 L1068.0 629.8 L1068.5 634.5 L1069.0 629.9 L1069.5 625.9 L1070.0 628.0 L1070.5 615.1 L1071.0 615.0 L1071.5 627.3 L1072.0 623.2 L1072.5 622.6 L1073.0 624.1 L1073.5 626.4 L1074.0 626.1 L1074.5 633.1 L1075.0 636.3 L1075.5 646.1 L1076.0 646.1 L1076.5 649.0 L1077.0 657.5 L1077.5 660.4 L1078.0 663.0 L1078.5 665.8 L1079.0 655.7 L1079.5 647.1 L1080.0 644.0 L1080.5 640.3 L1081.0 631.3 L1081.5 621.1 L1082.0 615.8 L1082.5 610.4 L1083.0 614.4 L1083.5 610.5 L1084.0 605.1 L1084.5 594.4 L1085.0 599.4 L1085.5 599.2 L1086.0 594.2 L1086.5 580.4 L1087.0 580.6 L1087.5 584.0 L1088.0 578.4 L1088.5 580.5 L1089.0 576.0 L1089.5 574.0 L1090.0 569.7 L1090.5 574.2 L1091.0 589.0 L1091.5 594.2 L1092.0 590.1 L1092.5 588.8 L1093.0 612.1 L1093.5 610.7 L1094.0 612.4 L1094.5 595.1 L1095.0 587.9 L1095.5 585.1 L1096.0 578.1 L1096.5 580.0 L1097.0 579.4 L1097.5 590.6 L1098.0 595.9 L1098.5 591.2 L1099.0 597.0 L1099.5 599.9 L1100.0 611.1 L1100.5 614.4 L1101.0 621.3 L1101.5 622.7 L1102.0 632.9 L1102.5 628.6 L1103.0 629.1 L1103.5 627.3 L1104.0 621.0 L1104.5 616.6 L1105.0 624.3 L1105.5 613.4 L1106.0 601.9 L1106.5 600.2 L1107.0 593.0 L1107.5 593.2 L1108.0 586.3 L1108.5 590.6 L1109.0 598.6 L1109.5 592.2 L1110.0 589.0 L1110.5 595.3 L1111.0 602.1 L1111.5 595.4 L1112.0 607.5 L1112.5 615.3 L1113.0 611.7 L1113.5 621.6 L1114.0 630.0 L1114.5 648.8 L1115.0 658.1 L1115.5 653.3 L1116.0 659.7 L1116.5 672.5 L1117.0 683.2 L1117.5 689.4 L1118.0 684.3 L1118.5 676.9 L1119.0 669.3 L1119.5 668.0 L1120.0 661.3 L1120.5 654.7 L1121.0 650.3 L1121.5 646.8 L1122.0 630.1 L1122.5 631.3 L1123.0 648.4 L1123.5 662.4 L1124.0 678.0 L1124.5 679.3 L1125.0 670.6 L1125.5 663.5 L1126.0 649.1 L1126.5 626.7 L1127.0 608.1 L1127.5 617.8 L1128.0 620.5 L1128.5 623.5 L1129.0 629.1 L1129.5 629.3 L1130.0 623.8 L1130.5 629.5 L1131.0 641.6 L1131.5 649.1 L1132.0 644.9 L1132.5 644.5 L1133.0 642.6 L1133.5 648.3 L1134.0 645.8 L1134.5 644.3 L1135.0 637.3 L1135.5 625.9 L1136.0 619.4 L1136.5 615.7 L1137.0 601.2 L1137.5 594.6 L1138.0 582.4 L1138.5 574.6 L1139.0 572.5 L1139.5 557.5 L1140.0 559.5 L1140.5 560.8 L1141.0 570.5 L1141.5 568.7 L1142.0 568.7 L1142.5 572.6 L1143.0 583.8 L1143.5 585.4 L1144.0 576.8 L1144.5 585.7 L1145.0 577.2 L1145.5 569.7 L1146.0 578.1 L1146.5 569.5 L1147.0 572.8 L1147.5 561.6 L1148.0 582.6 L1148.5 581.2 L1149.0 580.9 L1149.5 580.9 L1150.0 577.9 L1150.5 591.7 L1151.0 596.6 L1151.5 599.2 L1152.0 597.5 L1152.5 597.4 L1153.0 606.1 L1153.5 615.8 L1154.0 621.5 L1154.5 616.7 L1155.0 607.0 L1155.5 606.3 L1156.0 602.2 L1156.5 586.4 L1157.0 575.2 L1157.5 581.2 L1158.0 568.3 L1158.5 572.2 L1159.0 571.0 L1159.5 572.9 L1160.0 565.0 L1160.5 557.5 L1161.0 556.5 L1161.5 556.6 L1162.0 554.1 L1162.5 559.3 L1163.0 569.1 L1163.5 573.0 L1164.0 578.5 L1164.5 587.4 L1165.0 592.7 L1165.5 595.2 L1166.0 589.6 L1166.5 593.5 L1167.0 577.2 L1167.5 579.8 L1168.0 575.3 L1168.5 572.2 L1169.0 562.3 L1169.5 554.8 L1170.0 568.2 L1170.5 580.0 L1171.0 588.9 L1171.5 591.2 L1172.0 586.6 L1172.5 593.2 L1173.0 593.9 L1173.5 591.7 L1174.0 587.3 L1174.5 577.1 L1175.0 569.8 L1175.5 567.5 L1176.0 568.7 L1176.5 559.6 L1177.0 564.5 L1177.5 567.9 L1178.0 577.3 L1178.5 581.5 L1179.0 594.7 L1179.5 598.2 L1180.0 594.3 L1180.5 595.1 L1181.0 594.0 L1181.5 599.5 L1182.0 599.1 L1182.5 595.0 L1183.0 591.0 L1183.5 591.3 L1184.0 587.3 L1184.5 600.1 L1185.0 609.9 L1185.5 627.6 L1186.0 638.2 L1186.5 648.5 L1187.0 647.7 L1187.5 646.4 L1188.0 640.4 L1188.5 634.7 L1189.0 631.7 L1189.5 628.3 L1190.0 622.7 L1190.5 618.3 L1191.0 627.7 L1191.5 628.4 L1192.0 636.6 L1192.5 644.0 L1193.0 645.8 L1193.5 652.4 L1194.0 660.9 L1194.5 666.4 L1195.0 662.7 L1195.5 651.6 L1196.0 656.9 L1196.5 653.8 L1197.0 649.5 L1197.5 646.6 L1198.0 645.9 L1198.5 641.2 L1199.0 626.6 L1199.5 616.8 L1200.0 611.2 L1200.5 601.2 L1201.0 598.0 L1201.5 581.9 L1202.0 583.7 L1202.5 577.9 L1203.0 579.3 L1203.5 589.3 L1204.0 583.5 L1204.5 588.0 L1205.0 591.4 L1205.5 599.4 L1206.0 596.2 L1206.5 588.9 L1207.0 587.7 L1207.5 585.6 L1208.0 577.6 L1208.5 570.7 L1209.0 559.1 L1209.5 552.8 L1210.0 555.8 L1210.5 560.3 L1211.0 569.6 L1211.5 572.0 L1212.0 578.1 L1212.5 583.6 L1213.0 583.5 L1213.5 591.3 L1214.0 593.8 L1214.5 600.2 L1215.0 608.8 L1215.5 623.6 L1216.0 635.2 L1216.5 654.1 L1217.0 657.4 L1217.5 667.8 L1218.0 679.5 L1218.5 682.8 L1219.0 694.1 L1219.5 683.1 L1220.0 678.5 L1220.5 671.8 L1221.0 651.6 L1221.5 651.5 L1222.0 648.8 L1222.5 648.1 L1223.0 640.0 L1223.5 630.7 L1224.0 631.5 L1224.5 628.7 L1225.0 631.5 L1225.5 631.3 L1226.0 624.8 L1226.5 625.9 L1227.0 615.2 L1227.5 605.6 L1228.0 608.0 L1228.5 604.6 L1229.0 587.9 L1229.5 594.3 L1230.0 583.7 L1230.5 586.8 L1231.0 579.4 L1231.5 577.3 L1232.0 577.9 L1232.5 572.3 L1233.0 581.7 L1233.5 571.9 L1234.0 567.8 L1234.5 566.9 L1235.0 578.4 L1235.5 585.1 L1236.0 592.4 L1236.5 595.9 L1237.0 599.9 L1237.5 607.7 L1238.0 612.5 L1238.5 606.6 L1239.0 603.6 L1239.5 603.9 L1240.0 610.6 L1240.5 603.3 L1241.0 595.7 L1241.5 595.1 L1242.0 599.3 L1242.5 599.7 L1243.0 592.4 L1243.5 588.3 L1244.0 592.7 L1244.5 579.5 L1245.0 579.5 L1245.5 581.3 L1246.0 576.7 L1246.5 576.1 L1247.0 571.8 L1247.5 572.8 L1248.0 576.1 L1248.5 581.4 L1249.0 600.3 L1249.5 616.7 L1250.0 614.9 L1250.5 610.0 L1251.0 599.8 L1251.5 601.2 L1252.0 597.4 L1252.5 593.6 L1253.0 587.5 L1253.5 586.8 L1254.0 584.8 L1254.5 576.9 L1255.0 579.6 L1255.5 583.7 L1256.0 581.3 L1256.5 585.2 L1257.0 585.4 L1257.5 599.1 L1258.0 602.5 L1258.5 599.1 L1259.0 598.1 L1259.5 602.2 L1260.0 611.3 L1260.5 611.2 L1261.0 609.4 L1261.5 612.7 L1262.0 619.3 L1262.5 625.8 L1263.0 628.0 L1263.5 620.8 L1264.0 617.5 L1264.5 613.6 L1265.0 611.6 L1265.5 612.0 L1266.0 606.2 L1266.5 602.3 L1267.0 601.6 L1267.5 602.8 L1268.0 591.9 L1268.5 586.3 L1269.0 593.2 L1269.5 594.4 L1270.0 582.0 L1270.5 579.6 L1271.0 581.0 L1271.5 573.7 L1272.0 572.2 L1272.5 559.2 L1273.0 560.4 L1273.5 568.2 L1274.0 581.5 L1274.5 587.1 L1275.0 579.0 L1275.5 578.9 L1276.0 587.2 L1276.5 599.9 L1277.0 605.6 L1277.5 611.6 L1278.0 614.6 L1278.5 615.7 L1279.0 624.0 L1279.5 622.9 L1280.0 622.5 L1280.5 611.6 L1281.0 615.7 L1281.5 618.2 L1282.0 619.1 L1282.5 609.0 L1283.0 607.1 L1283.5 601.2 L1284.0 610.4 L1284.5 611.9 L1285.0 615.7 L1285.5 613.4 L1286.0 612.2 L1286.5 613.3 L1287.0 614.5 L1287.5 621.1 L1288.0 619.2 L1288.5 627.5 L1289.0 631.0 L1289.5 623.3 L1290.0 622.4 L1290.5 629.8 L1291.0 619.6 L1291.5 619.9 L1292.0 621.3 L1292.5 619.0 L1293.0 612.0 L1293.5 604.5 L1294.0 603.8 L1294.5 599.8 L1295.0 605.4 L1295.5 595.9 L1296.0 594.2 L1296.5 591.0 L1297.0 588.1 L1297.5 581.2 L1298.0 579.3 L1298.5 592.7 L1299.0 591.8 L1299.5 597.5 L1300.0 600.1 L1300.5 601.3 L1301.0 609.9 L1301.5 606.0 L1302.0 612.9 L1302.5 601.4 L1303.0 606.0 L1303.5 609.1 L1304.0 604.0 L1304.5 599.9 L1305.0 600.8 L1305.5 597.6 L1306.0 586.4 L1306.5 579.9 L1307.0 578.9 L1307.5 582.4 L1308.0 590.5 L1308.5 590.4 L1309.0 591.7 L1309.5 592.4 L1310.0 595.8 L1310.5 590.6 L1311.0 584.8 L1311.5 581.6 L1312.0 586.6 L1312.5 587.4 L1313.0 584.6 L1313.5 577.0 L1314.0 580.2 L1314.5 578.5 L1315.0 567.3 L1315.5 555.6 L1316.0 572.4 L1316.5 583.5 L1317.0 597.6 L1317.5 605.3 L1318.0 615.6 L1318.5 616.2 L1319.0 622.8 L1319.5 628.5 L1320.0 628.0 L1320.5 638.7 L1321.0 643.5 L1321.5 641.9 L1322.0 634.1 L1322.5 630.2 L1323.0 619.6 L1323.5 619.9 L1324.0 617.8 L1324.5 611.3 L1325.0 602.2 L1325.5 601.0 L1326.0 600.7 L1326.5 595.9 L1327.0 605.1 L1327.5 613.2 L1328.0 623.5 L1328.5 635.1 L1329.0 634.9 L1329.5 641.4 L1330.0 645.7 L1330.5 636.5 L1331.0 639.7 L1331.5 636.2 L1332.0 633.4 L1332.5 637.1 L1333.0 624.7 L1333.5 615.3 L1334.0 619.5 L1334.5 618.8 L1335.0 614.2 L1335.5 609.1 L1336.0 600.7 L1336.5 602.9 L1337.0 605.1 L1337.5 602.4 L1338.0 599.9 L1338.5 597.3 L1339.0 594.3 L1339.5 603.2 L1340.0 590.7 L1340.5 588.7 L1341.0 590.1 L1341.5 588.5 L1342.0 580.7 L1342.5 571.2 L1343.0 572.2 L1343.5 581.8 L1344.0 582.6 L1344.5 575.4 L1345.0 580.0 L1345.5 573.3 L1346.0 580.7 L1346.5 586.7 L1347.0 588.5 L1347.5 600.6 L1348.0 603.1 L1348.5 603.0 L1349.0 589.7 L1349.5 595.3 L1350.0 599.3 L1350.5 592.4 L1351.0 587.1 L1351.5 593.5 L1352.0 601.8 L1352.5 595.4 L1353.0 591.2 L1353.5 590.3 L1354.0 594.7 L1354.5 577.6 L1355.0 578.9 L1355.5 591.5 L1356.0 591.9 L1356.5 590.6 L1357.0 587.0 L1357.5 579.6 L1358.0 585.9 L1358.5 593.3 L1359.0 596.4 L1359.5 604.5 L1360.0 600.0 L1360.5 592.7 L1361.0 598.2 L1361.5 601.2 L1362.0 610.6 L1362.5 615.9 L1363.0 627.9 L1363.5 619.3 L1364.0 630.0 L1364.5 638.5 L1365.0 633.5 L1365.5 620.3 L1366.0 618.7 L1366.5 618.0 L1367.0 612.5 L1367.5 609.7 L1368.0 601.9 L1368.5 596.3 L1369.0 596.5 L1369.5 581.4 L1370.0 579.6 L1370.5 566.1 L1371.0 557.5 L1371.5 551.9 L1372.0 565.1 L1372.5 557.8 L1373.0 570.6 L1373.5 569.3 L1374.0 572.1 L1374.5 579.6 L1375.0 576.4 L1375.5 584.3 L1376.0 591.3 L1376.5 590.3 L1377.0 607.3 L1377.5 613.5 L1378.0 615.4 L1378.5 623.6 L1379.0 613.3 L1379.5 608.8 L1380.0 602.4 L1380.5 592.8 L1381.0 589.2 L1381.5 594.4 L1382.0 604.1 L1382.5 614.1 L1383.0 624.9 L1383.5 633.2 L1384.0 635.3 L1384.5 637.6 L1385.0 641.8 L1385.5 650.5 L1386.0 647.5 L1386.5 641.9 L1387.0 650.6 L1387.5 651.8 L1388.0 651.3 L1388.5 655.9 L1389.0 659.8 L1389.5 658.2 L1390.0 666.0 L1390.5 668.8 L1391.0 668.9 L1391.5 659.9 L1392.0 649.7 L1392.5 641.5 L1393.0 635.9 L1393.5 621.3 L1394.0 616.7 L1394.5 606.5 L1395.0 601.0 L1395.5 603.6 L1396.0 602.0 L1396.5 590.3 L1397.0 594.5" fill="none" stroke="#3558b8" stroke-width="0.85" stroke-linejoin="round"/></svg>
<div class="t" style="left:364px;top:592px;font-size:11px;color:#2f56b0">EEG1</div>
<div class="t" style="left:305px;top:605px;font-size:11px;color:#2f56b0">-0.0504 .. 0.0351 &nbsp;)</div>
<div class="t" style="left:364px;top:719px;font-size:11px;color:#ef7050">EEG2</div>
<div class="t" style="left:305px;top:732px;font-size:11px;color:#ef7050">-0.0418 .. 0.0397 &nbsp;)</div>
<div class="t" style="left:377px;top:822px;font-size:12px;color:#111">20490s</div>
<div class="t" style="left:1378px;top:822px;font-size:12px;color:#111">20520s</div>
<div style="left:304px;top:351px;width:1135px;height:1px;background:#ddd"></div>
<div style="left:668px;top:310px;width:77px;height:42px;background:#fff;border:1px solid #ddd;border-bottom-color:#fff;border-radius:4px 4px 0 0"></div>
<div class="tab" style="left:320px">Headers</div>
<div class="tab" style="left:406px">Structure</div>
<div class="tab" style="left:498px">Hypnogram</div>
<div class="tab" style="left:605px">Annots</div>
<div class="tab" style="left:763px">Stats</div>
<div class="tab" style="left:830px">Time/freq</div>
<div class="tab" style="left:923px">Manips</div>
<div class="tab" style="left:1003px">Norms</div>
<div class="tab" style="left:1079px">Luna</div>
<div class="tab" style="left:683px;color:#555">Signals</div>
<div class="btn" style="left:304px;top:352px;width:67px;height:34px;line-height:32px">&lt; Prev</div>
<div class="btn" style="left:401px;top:352px;width:67px;height:34px;line-height:32px">Next &gt;</div>
<div class="btn" style="left:498px;top:352px;width:67px;height:34px;line-height:32px">In</div>
<div class="btn" style="left:595px;top:352px;width:67px;height:34px;line-height:32px">Out</div>
<div class="btn" style="left:693px;top:352px;width:67px;height:34px;line-height:32px">All</div>
<div class="btn" style="left:790px;top:352px;width:67px;height:34px;line-height:32px">Filter</div>
<div style="left:888px;top:377px;width:259px;height:8px;border:1px solid #ccc;border-radius:4px;background:linear-gradient(#e6e6e6,#f4f4f4)"></div>
<div style="left:898px;top:377px;width:83px;height:8px;background:#428bca"></div>
<svg style="position:absolute;left:0;top:0" width="1510" height="918"><line x1="897.6" y1="385" x2="897.6" y2="393" stroke="#333" stroke-width="1"/><text x="897.6" y="406.5" font-size="10" text-anchor="middle" fill="#333" font-family="Liberation Sans">0</text><line x1="905.6" y1="385" x2="905.6" y2="389" stroke="#aaa" stroke-width="1"/><line x1="913.6" y1="385" x2="913.6" y2="389" stroke="#aaa" stroke-width="1"/><line x1="921.5" y1="385" x2="921.5" y2="393" stroke="#333" stroke-width="1"/><text x="921.5" y="406.5" font-size="10" text-anchor="middle" fill="#333" font-family="Liberation Sans">10</text><line x1="929.5" y1="385" x2="929.5" y2="389" stroke="#aaa" stroke-width="1"/><line x1="937.5" y1="385" x2="937.5" y2="389" stroke="#aaa" stroke-width="1"/><line x1="945.5" y1="385" x2="945.5" y2="393" stroke="#333" stroke-width="1"/><text x="945.5" y="406.5" font-size="10" text-anchor="middle" fill="#333" font-family="Liberation Sans">20</text><line x1="953.5" y1="385" x2="953.5" y2="389" stroke="#aaa" stroke-width="1"/><line x1="961.4" y1="385" x2="961.4" y2="389" stroke="#aaa" stroke-width="1"/><line x1="969.4" y1="385" x2="969.4" y2="393" stroke="#333" stroke-width="1"/><text x="969.4" y="406.5" font-size="10" text-anchor="middle" fill="#333" font-family="Liberation Sans">30</text><line x1="977.4" y1="385" x2="977.4" y2="389" stroke="#aaa" stroke-width="1"/><line x1="985.4" y1="385" x2="985.4" y2="389" stroke="#aaa" stroke-width="1"/><line x1="993.4" y1="385" x2="993.4" y2="393" stroke="#333" stroke-width="1"/><text x="993.4" y="406.5" font-size="10" text-anchor="middle" fill="#333" font-family="Liberation Sans">40</text><line x1="1001.3" y1="385" x2="1001.3" y2="389" stroke="#aaa" stroke-width="1"/><line x1="1009.3" y1="385" x2="1009.3" y2="389" stroke="#aaa" stroke-width="1"/><line x1="1017.3" y1="385" x2="1017.3" y2="393" stroke="#333" stroke-width="1"/><text x="1017.3" y="406.5" font-size="10" text-anchor="middle" fill="#333" font-family="Liberation Sans">50</text><line x1="1025.3" y1="385" x2="1025.3" y2="389" stroke="#aaa" stroke-width="1"/><line x1="1033.3" y1="385" x2="1033.3" y2="389" stroke="#aaa" stroke-width="1"/><line x1="1041.2" y1="385" x2="1041.2" y2="393" stroke="#333" stroke-width="1"/><text x="1041.2" y="406.5" font-size="10" text-anchor="middle" fill="#333" font-family="Liberation Sans">60</text><line x1="1049.2" y1="385" x2="1049.2" y2="389" stroke="#aaa" stroke-width="1"/><line x1="1057.2" y1="385" x2="1057.2" y2="389" stroke="#aaa" stroke-width="1"/><line x1="1065.2" y1="385" x2="1065.2" y2="393" stroke="#333" stroke-width="1"/><text x="1065.2" y="406.5" font-size="10" text-anchor="middle" fill="#333" font-family="Liberation Sans">70</text><line x1="1073.2" y1="385" x2="1073.2" y2="389" stroke="#aaa" stroke-width="1"/><line x1="1081.1" y1="385" x2="1081.1" y2="389" stroke="#aaa" stroke-width="1"/><line x1="1089.1" y1="385" x2="1089.1" y2="393" stroke="#333" stroke-width="1"/><text x="1089.1" y="406.5" font-size="10" text-anchor="middle" fill="#333" font-family="Liberation Sans">80</text><line x1="1097.1" y1="385" x2="1097.1" y2="389" stroke="#aaa" stroke-width="1"/><line x1="1105.1" y1="385" x2="1105.1" y2="389" stroke="#aaa" stroke-width="1"/><line x1="1113.1" y1="385" x2="1113.1" y2="393" stroke="#333" stroke-width="1"/><text x="1113.1" y="406.5" font-size="10" text-anchor="middle" fill="#333" font-family="Liberation Sans">90</text><line x1="1121.0" y1="385" x2="1121.0" y2="389" stroke="#aaa" stroke-width="1"/><line x1="1129.0" y1="385" x2="1129.0" y2="389" stroke="#aaa" stroke-width="1"/><line x1="1137.0" y1="385" x2="1137.0" y2="393" stroke="#333" stroke-width="1"/><text x="1137.0" y="406.5" font-size="10" text-anchor="middle" fill="#333" font-family="Liberation Sans">100</text></svg>
<div style="left:886.6px;top:369px;width:22px;height:22px;border-radius:50%;background:linear-gradient(#e2e2e2,#d8d8d8);border:1px solid #b5b5b5"></div>
<div style="left:969.7px;top:369px;width:22px;height:22px;border-radius:50%;background:linear-gradient(#e2e2e2,#d8d8d8);border:1px solid #b5b5b5"></div>
<div style="left:887px;top:352px;width:22px;height:16px;background:#428bca;border-radius:3px;color:#fff;font-size:11px;text-align:center;line-height:16px">0.3</div>
<div style="left:972px;top:352px;width:18px;height:16px;background:#428bca;border-radius:3px;color:#fff;font-size:11px;text-align:center;line-height:16px">35</div>
<div style="left:1125px;top:352px;width:22px;height:15px;background:#e1e4e9;border-radius:3px;color:#333;font-size:10px;text-align:center;line-height:15px">100</div>
<div class="t" style="left:1178px;top:354px;font-size:14px;color:#333">Epoch 684 - 684 (0.5 mins) (unfiltered)</div>
</div></body></html>
